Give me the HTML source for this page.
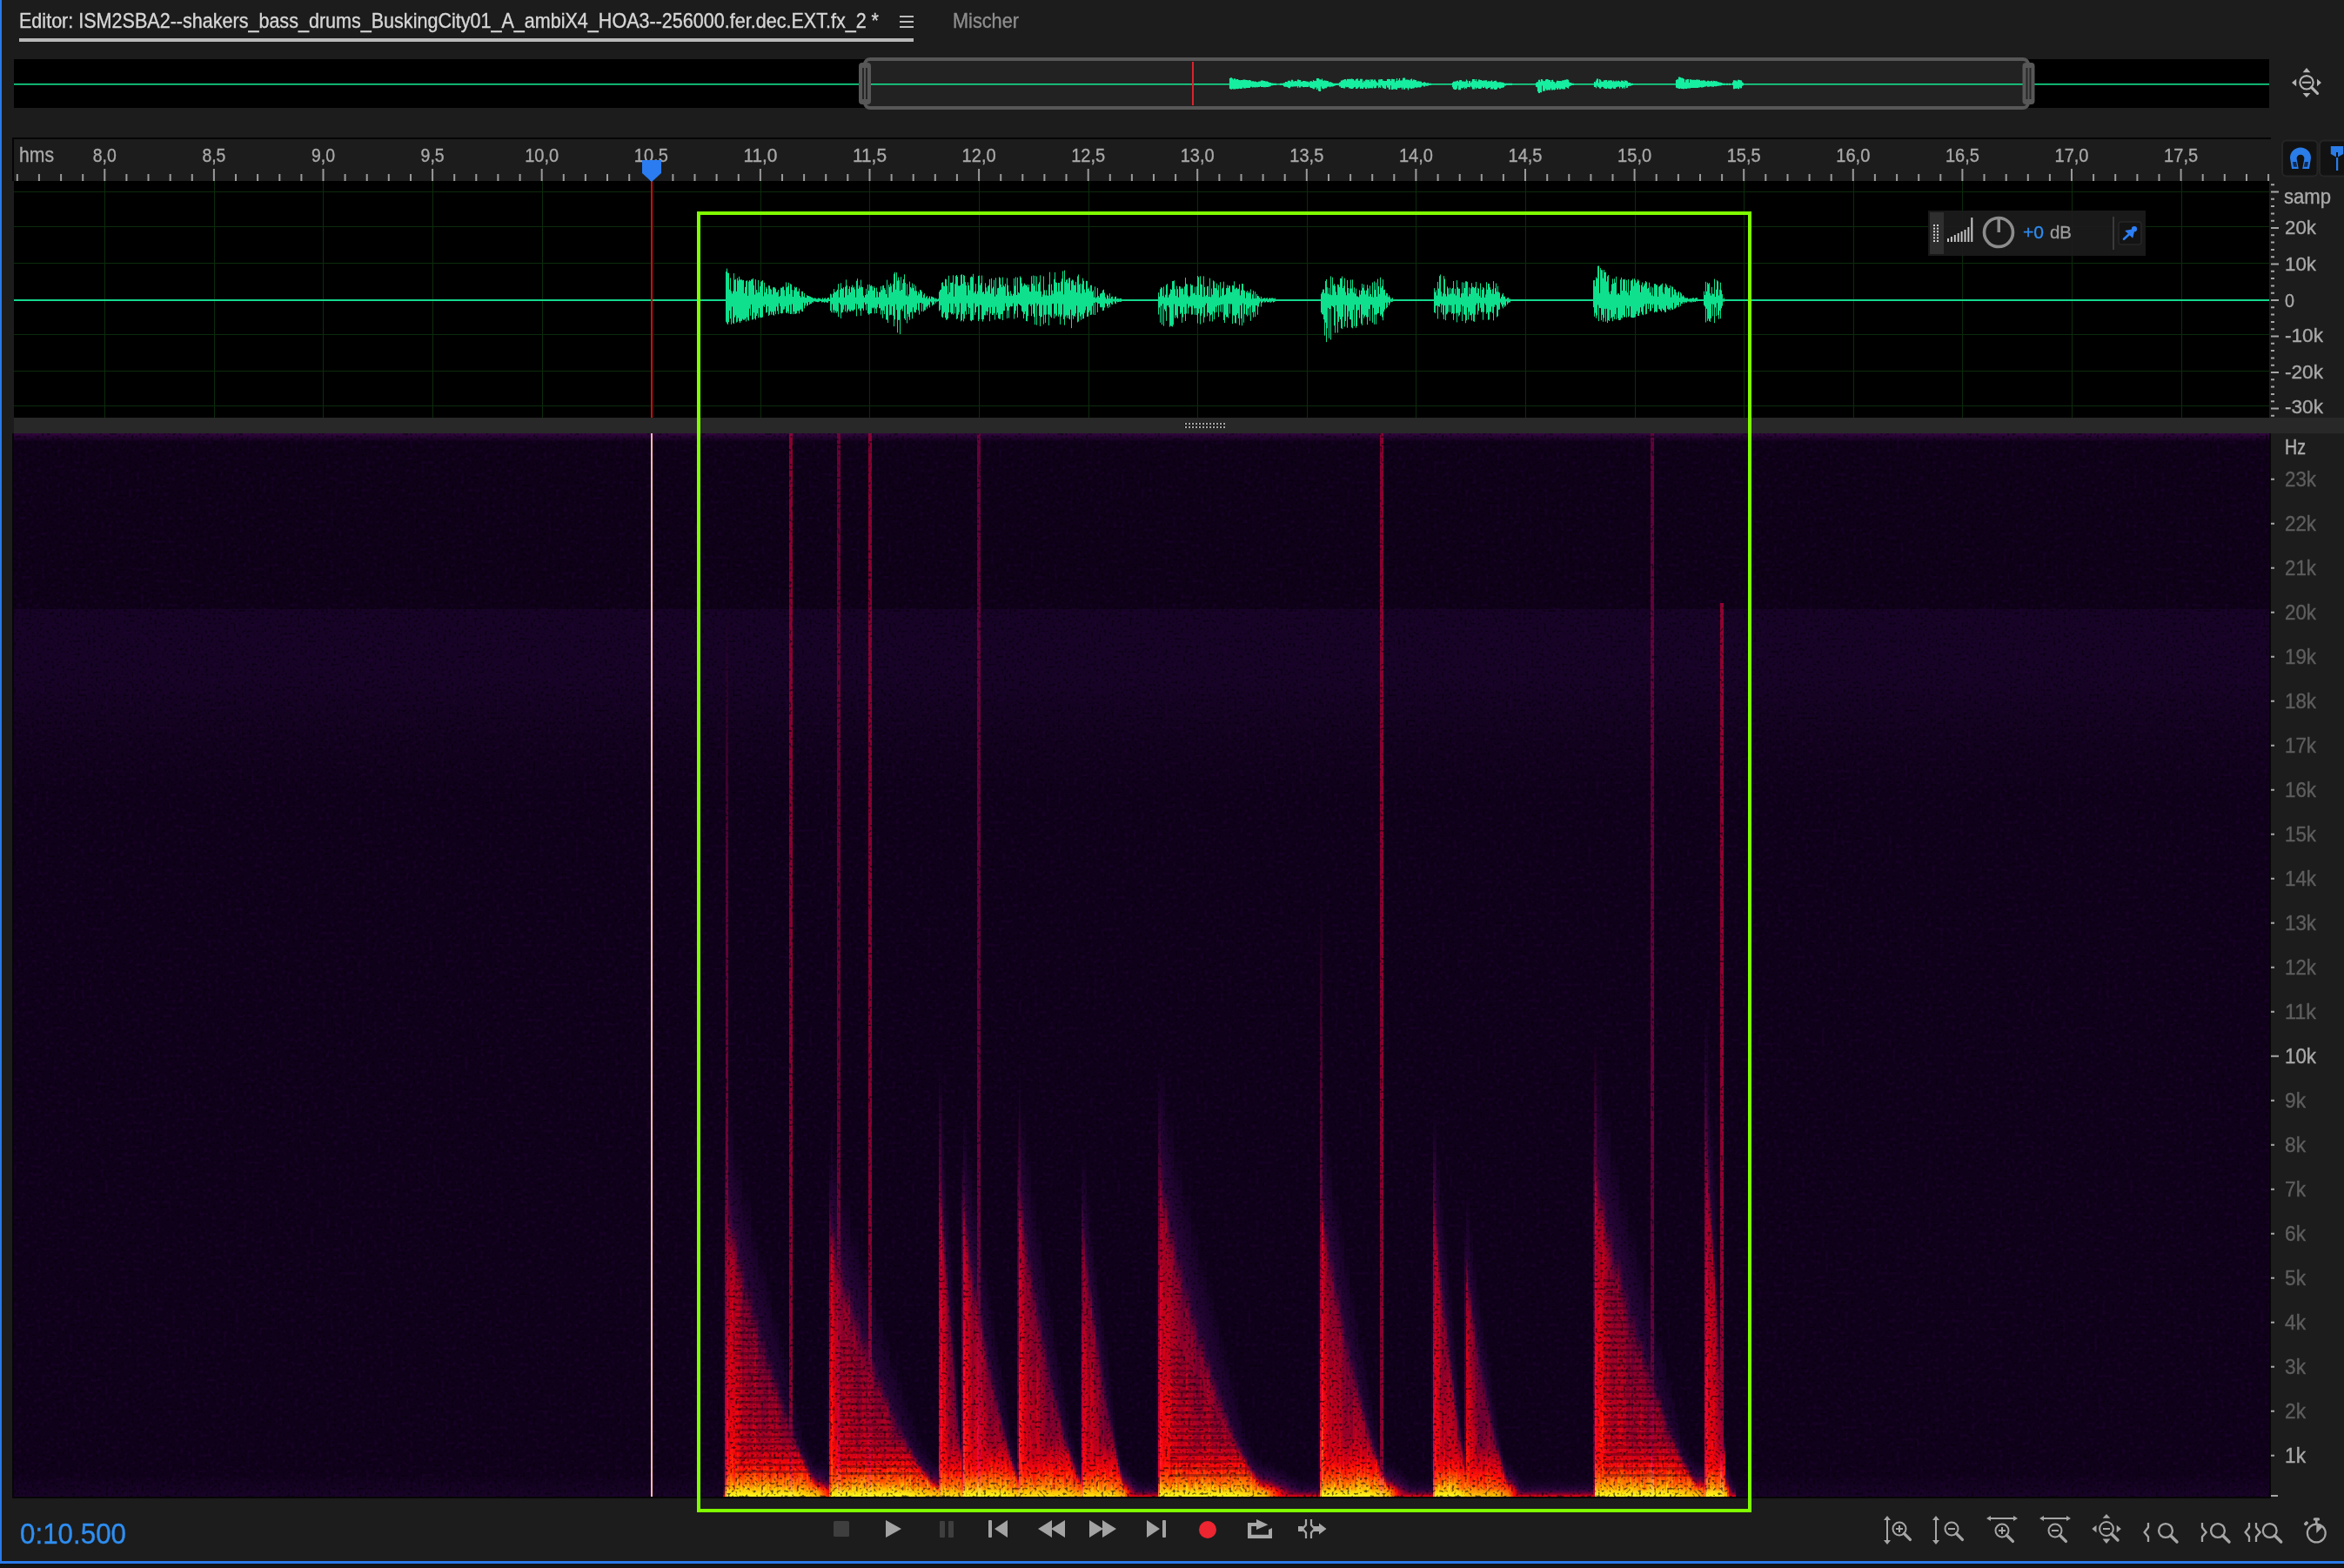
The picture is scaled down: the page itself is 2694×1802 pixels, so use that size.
<!DOCTYPE html>
<html><head><meta charset="utf-8"><title>Editor</title>
<style>
html,body{margin:0;padding:0;width:2694px;height:1802px;overflow:hidden;background:#1c1c1c;font-family:"Liberation Sans", sans-serif;}
#spec{position:absolute;left:16px;top:498px;width:2592px;height:1222px;overflow:hidden;background:#10021a;}
#spec div{position:absolute;top:0;height:1222px;}
</style></head><body>
<div id="spec" style="background:linear-gradient(#32063e 0px,#0e0118 10px,#0e0118 201.5px,#170326 202px,#170326 282px,#13021f 347px,#10011b 412px,#10011b 1197px,#170326 1222px)">
<div style="left:815px;width:2px;top:947px;height:275px;background:linear-gradient(rgba(24,3,38,0) 0px,#180327 33px,#190328 63px,#1a0329 90px,#1a032a 115px,#1b032b 137px,#1b032b 157px,#1c032c 175px,#1c032c 191px,#1d032c 205px,#1d032d 217px,#1d032d 227px,#1e042e 236px,#1e042e 244px,#1f042f 251px,#200430 257px,#210431 262px,#260535 266px,#3f053c 269px,#83002e 272px,#f70808 275px)"></div>
<div style="left:817px;width:2px;top:777px;height:445px;background:linear-gradient(rgba(22,2,36,0) 0px,#1f042e 50px,#2e063c 95px,#670135 135px,#89002c 170px,#85002d 203px,#80002f 233px,#8d002b 260px,#990027 285px,#a00025 307px,#ba001e 327px,#c2001b 345px,#be001c 361px,#d30116 375px,#be001d 387px,#cd0018 397px,#e00411 406px,#d40115 414px,#ed060c 421px,#fe0a06 427px,#ff3603 432px,#ff4c01 436px,#ff6b00 439px,#ff8200 442px,#ff9b00 445px)"></div>
<div style="left:819px;width:2px;top:777px;height:445px;background:linear-gradient(rgba(23,3,37,0) 0px,#20042f 50px,#2b053a 95px,#8e002b 135px,#a40024 170px,#b4001f 203px,#b30020 233px,#b9001e 260px,#d50215 285px,#ce0018 307px,#e10410 327px,#e5050f 345px,#f80908 361px,#e8050e 375px,#f0070b 387px,#f90907 397px,#ff1304 406px,#ff1c04 414px,#ff3203 421px,#ff6a00 427px,#ff6d00 432px,#ffb600 436px,#ffd50b 439px,#ffea14 442px,#ffff1e 445px)"></div>
<div style="left:821px;width:2px;top:777px;height:445px;background:linear-gradient(rgba(21,2,35,0) 0px,#1d032d 50px,#270536 95px,#700033 135px,#990027 170px,#a60023 203px,#a50024 233px,#cf0017 260px,#bf001c 285px,#e00411 307px,#d00117 327px,#d60215 345px,#ed060c 361px,#e20410 375px,#e00411 387px,#ed060c 397px,#ee070b 406px,#ff2504 414px,#ff4302 421px,#ff7500 427px,#ff6300 432px,#ffa200 436px,#ffd50b 439px,#ffea14 442px,#ffff1e 445px)"></div>
<div style="left:823px;width:2px;top:777px;height:445px;background:linear-gradient(rgba(20,2,33,0) 0px,#1b032b 50px,#250434 95px,#48043a 135px,#ac0022 170px,#b9001e 203px,#cd0018 233px,#cc0018 260px,#dd0312 285px,#db0313 307px,#d60214 327px,#e5050f 345px,#e30410 361px,#e6050f 375px,#f0070b 387px,#ff1404 397px,#ff1d04 406px,#ff1a04 414px,#ff5501 421px,#ff7b00 427px,#ff8a00 432px,#ffc302 436px,#ffd50b 439px,#ffea14 442px,#ffff1e 445px)"></div>
<div style="left:825px;width:2px;top:777px;height:445px;background:linear-gradient(rgba(19,2,31,0) 0px,#190329 50px,#220431 95px,#32063e 135px,#a50024 170px,#c0001c 203px,#d30116 233px,#c0001c 260px,#d70214 285px,#d10116 307px,#de0311 327px,#dd0312 345px,#ed060c 361px,#e8050e 375px,#f90907 387px,#ff1a04 397px,#ff2104 406px,#ff3603 414px,#ff3802 421px,#ff6400 427px,#ffbd00 432px,#ffa400 436px,#ffd50b 439px,#ffea14 442px,#ffff1e 445px)"></div>
<div style="left:827px;width:2px;top:827px;height:395px;background:linear-gradient(rgba(24,3,38,0) 0px,#20042f 45px,#280537 85px,#970028 120px,#ab0022 153px,#a40024 183px,#bb001d 210px,#b6001f 235px,#d20116 257px,#d30116 277px,#e20410 295px,#da0313 311px,#ec060c 325px,#e8050e 337px,#f80908 347px,#fa0907 356px,#fb0906 364px,#ff2104 371px,#ff5101 377px,#ff5b00 382px,#ff8600 386px,#ffd50b 389px,#ffea14 392px,#ffff1e 395px)"></div>
<div style="left:829px;width:2px;top:827px;height:395px;background:linear-gradient(rgba(22,2,36,0) 0px,#1e042d 45px,#270536 85px,#760032 120px,#a40024 153px,#c5001a 183px,#c5001a 210px,#c8001a 235px,#ce0017 257px,#e5050f 277px,#e8050e 295px,#ef070b 311px,#e00411 325px,#ef070b 337px,#ed060c 347px,#ff1e04 356px,#ff3702 364px,#ff5101 371px,#ff5a01 377px,#ff8f00 382px,#ffc101 386px,#ffd50b 389px,#ffea14 392px,#ffff1e 395px)"></div>
<div style="left:831px;width:2px;top:827px;height:395px;background:linear-gradient(rgba(21,2,35,0) 0px,#1c032c 45px,#260535 85px,#42043b 120px,#b20020 153px,#c3001b 183px,#bb001d 210px,#cd0018 235px,#cd0018 257px,#d70214 277px,#ee070c 295px,#e6050e 311px,#e7050e 325px,#e7050e 337px,#ff1205 347px,#ff1e04 356px,#ff2e03 364px,#ff4a01 371px,#ff9600 377px,#ffa300 382px,#ffdd0e 386px,#ffd50b 389px,#ffea14 392px,#ffff1e 395px)"></div>
<div style="left:833px;width:2px;top:827px;height:395px;background:linear-gradient(rgba(20,2,33,0) 0px,#1a032a 45px,#230432 85px,#2d063b 120px,#970028 153px,#b20020 183px,#ae0021 210px,#ad0021 235px,#c7001a 257px,#c7001a 277px,#cc0018 295px,#d60214 311px,#d90213 325px,#e00411 337px,#ec060c 347px,#eb060c 356px,#ff1105 364px,#ff2703 371px,#ff5801 377px,#ff7200 382px,#ffc101 386px,#ffd50b 389px,#ffea14 392px,#ffff1e 395px)"></div>
<div style="left:835px;width:2px;top:827px;height:395px;background:linear-gradient(rgba(19,2,32,0) 0px,#190328 45px,#210430 85px,#280537 120px,#9c0026 153px,#90002a 183px,#a70023 210px,#a20025 235px,#c6001a 257px,#c6001a 277px,#d30116 295px,#ce0017 311px,#db0313 325px,#cc0018 337px,#cf0017 347px,#f90907 356px,#ff1604 364px,#ff3003 371px,#ff7900 377px,#ffa700 382px,#ffcb06 386px,#ffd50b 389px,#ffea14 392px,#ffff1e 395px)"></div>
<div style="left:837px;width:2px;top:872px;height:350px;background:linear-gradient(rgba(24,3,38,0) 0px,#1f042e 40px,#270536 75px,#680135 108px,#710033 138px,#780031 165px,#85002d 190px,#91002a 212px,#ad0021 232px,#aa0022 250px,#b30020 266px,#c0001c 280px,#b5001f 292px,#c5001a 302px,#e20410 311px,#fc0906 319px,#ff3b02 326px,#ff5c00 332px,#ff6f00 337px,#ffb800 341px,#ffd50b 344px,#ffea14 347px,#ffff1e 350px)"></div>
<div style="left:839px;width:2px;top:872px;height:350px;background:linear-gradient(rgba(23,2,37,0) 0px,#1d032d 40px,#250434 75px,#3f053c 108px,#88002c 138px,#89002c 165px,#9e0026 190px,#ac0022 212px,#ae0021 232px,#b00020 250px,#ad0022 266px,#ce0018 280px,#ce0018 292px,#d00117 302px,#f80908 311px,#fd0a06 319px,#ff4702 326px,#ff6900 332px,#ff9700 337px,#ffd60b 341px,#ffd50b 344px,#ffea14 347px,#ffff1e 350px)"></div>
<div style="left:841px;width:2px;top:872px;height:350px;background:linear-gradient(rgba(22,2,35,0) 0px,#1c032b 40px,#230432 75px,#2e063d 108px,#8c002b 138px,#950028 165px,#a40024 190px,#9f0026 212px,#bb001d 232px,#c0001c 250px,#be001d 266px,#c5001a 280px,#bf001c 292px,#d20116 302px,#ff1105 311px,#ff1404 319px,#ff5701 326px,#ff7d00 332px,#ff8800 337px,#ffdf0f 341px,#ffd50b 344px,#ffea14 347px,#ffff1e 350px)"></div>
<div style="left:843px;width:2px;top:872px;height:350px;background:linear-gradient(rgba(21,2,34,0) 0px,#1a032a 40px,#210430 75px,#270536 108px,#7b0030 138px,#760032 165px,#8d002b 190px,#920029 212px,#a50024 232px,#b6001f 250px,#a80023 266px,#c0001c 280px,#b20020 292px,#c1001b 302px,#ef070b 311px,#ff2a03 319px,#ff4802 326px,#ff7600 332px,#ffab00 337px,#ffa200 341px,#ffd50b 344px,#ffea14 347px,#ffff1e 350px)"></div>
<div style="left:845px;width:2px;top:872px;height:350px;background:linear-gradient(rgba(20,2,32,0) 0px,#190328 40px,#1f042f 75px,#260535 108px,#740032 138px,#85002d 165px,#9b0027 190px,#88002c 212px,#91002a 232px,#a80023 250px,#9e0026 266px,#ad0021 280px,#b4001f 292px,#d80214 302px,#f2070a 311px,#ff1b04 319px,#ff4102 326px,#ff6900 332px,#ff6a00 337px,#ffc403 341px,#ffd50b 344px,#ffea14 347px,#ffff1e 350px)"></div>
<div style="left:847px;width:2px;top:912px;height:310px;background:linear-gradient(rgba(24,3,38,0) 0px,#1e032d 35px,#240433 68px,#520338 98px,#88002c 125px,#81002e 150px,#a80023 172px,#990027 192px,#960028 210px,#a60024 226px,#c3001b 240px,#bc001d 252px,#c5001a 262px,#e9060d 271px,#ff0a05 279px,#ff4901 286px,#ff3d02 292px,#ff8700 297px,#ffbc00 301px,#ffd50b 304px,#ffea14 307px,#ffff1e 310px)"></div>
<div style="left:849px;width:2px;top:912px;height:310px;background:linear-gradient(rgba(23,2,37,0) 0px,#1c032c 35px,#230432 68px,#32063e 98px,#a10025 125px,#960028 150px,#9d0026 172px,#af0021 192px,#bd001d 210px,#d40116 226px,#d70214 240px,#dd0312 252px,#d80214 262px,#f3080a 271px,#ff2603 279px,#ff5c00 286px,#ff6100 292px,#ff8500 297px,#ffb700 301px,#ffd50b 304px,#ffea14 307px,#ffff1e 310px)"></div>
<div style="left:851px;width:2px;top:912px;height:310px;background:linear-gradient(rgba(22,2,35,0) 0px,#1b032b 35px,#210431 68px,#2b0539 98px,#8c002b 125px,#af0021 150px,#ba001e 172px,#be001c 192px,#b10020 210px,#c5001a 226px,#d90214 240px,#dc0312 252px,#dd0312 262px,#ff0b05 271px,#ff2b03 279px,#ff5f00 286px,#ff7d00 292px,#ffbf00 297px,#ffc905 301px,#ffd50b 304px,#ffea14 307px,#ffff1e 310px)"></div>
<div style="left:853px;width:2px;top:912px;height:310px;background:linear-gradient(rgba(21,2,34,0) 0px,#190329 35px,#1f042f 68px,#260535 98px,#7c0030 125px,#9b0027 150px,#a50024 172px,#9f0026 192px,#9d0026 210px,#b30020 226px,#b4001f 240px,#cb0019 252px,#de0312 262px,#e8050e 271px,#ff2204 279px,#ff3103 286px,#ff7900 292px,#ff7200 297px,#ffb200 301px,#ffd50b 304px,#ffea14 307px,#ffff1e 310px)"></div>
<div style="left:855px;width:2px;top:947px;height:275px;background:linear-gradient(rgba(24,3,39,0) 0px,#1e042d 33px,#240433 63px,#530338 90px,#770031 115px,#80002f 137px,#90002a 157px,#b10020 175px,#970028 191px,#a50024 205px,#c1001c 217px,#cf0017 227px,#e9060d 236px,#ff1e04 244px,#ff3003 251px,#ff4e01 257px,#ffb400 262px,#ffb400 266px,#ffd50b 269px,#ffea14 272px,#ffff1e 275px)"></div>
<div style="left:857px;width:2px;top:947px;height:275px;background:linear-gradient(rgba(23,2,37,0) 0px,#1c032c 33px,#230432 63px,#34063d 90px,#710033 115px,#88002c 137px,#9c0027 157px,#9d0026 175px,#ad0021 191px,#b6001f 205px,#b30020 217px,#bc001d 227px,#f80908 236px,#fa0907 244px,#ff5101 251px,#ff6e00 257px,#ffa600 262px,#ffc805 266px,#ffd50b 269px,#ffea14 272px,#ffff1e 275px)"></div>
<div style="left:859px;width:2px;top:947px;height:275px;background:linear-gradient(rgba(22,2,36,0) 0px,#1b032b 33px,#210430 63px,#250534 90px,#6a0035 115px,#87002d 137px,#920029 157px,#84002e 175px,#8a002c 191px,#9b0027 205px,#aa0022 217px,#c8001a 227px,#f2070a 236px,#fa0907 244px,#ff2c03 251px,#ff5a01 257px,#ff7b00 262px,#ff9c00 266px,#ffd50b 269px,#ffea14 272px,#ffff1e 275px)"></div>
<div style="left:861px;width:2px;top:947px;height:275px;background:linear-gradient(rgba(21,2,34,0) 0px,#1a0329 33px,#1f042f 63px,#270536 90px,#770031 115px,#89002c 137px,#8f002a 157px,#8a002c 175px,#8b002b 191px,#ab0022 205px,#bd001d 217px,#e10410 227px,#f70808 236px,#ff2404 244px,#ff4d01 251px,#ff7f00 257px,#ff9900 262px,#ffde0f 266px,#ffd50b 269px,#ffea14 272px,#ffff1e 275px)"></div>
<div style="left:863px;width:2px;top:947px;height:275px;background:linear-gradient(rgba(20,2,33,0) 0px,#180327 33px,#1d032d 63px,#220432 90px,#47043a 115px,#7b0030 137px,#7c0030 157px,#90002a 175px,#a30024 191px,#ab0022 205px,#ad0021 217px,#df0411 227px,#ff0a05 236px,#ff2803 244px,#ff6300 251px,#ff6f00 257px,#ffbe00 262px,#ffd008 266px,#ffd50b 269px,#ffea14 272px,#ffff1e 275px)"></div>
<div style="left:865px;width:2px;top:980px;height:242px;background:linear-gradient(rgba(23,3,38,0) 0px,#1c032c 30px,#220431 57px,#2c053b 82px,#720033 104px,#7a0031 124px,#950028 142px,#89002c 158px,#aa0022 172px,#a50024 184px,#d80214 194px,#f60808 203px,#ff2603 211px,#ff2c03 218px,#ff6400 224px,#ff9a00 229px,#ffa400 233px,#ffd50b 236px,#ffea14 239px,#ffff1e 242px)"></div>
<div style="left:867px;width:2px;top:980px;height:242px;background:linear-gradient(rgba(22,2,36,0) 0px,#1b032a 30px,#20042f 57px,#270535 82px,#90002a 104px,#9f0026 124px,#a70023 142px,#b6001f 158px,#ac0022 172px,#b4001f 184px,#d90213 194px,#eb060d 203px,#ff1d04 211px,#ff3802 218px,#ff7a00 224px,#ffb700 229px,#ffd209 233px,#ffd50b 236px,#ffea14 239px,#ffff1e 242px)"></div>
<div style="left:869px;width:2px;top:980px;height:242px;background:linear-gradient(rgba(21,2,34,0) 0px,#190329 30px,#1e042e 57px,#230432 82px,#710033 104px,#8e002a 124px,#9d0026 142px,#b30020 158px,#aa0022 172px,#b4001f 184px,#b8001e 194px,#ec060c 203px,#ff0b05 211px,#ff2e03 218px,#ff3e02 224px,#ff8200 229px,#ff8a00 233px,#ffd50b 236px,#ffea14 239px,#ffff1e 242px)"></div>
<div style="left:871px;width:2px;top:1010px;height:212px;background:linear-gradient(rgba(24,3,39,0) 0px,#1d032c 27px,#220431 52px,#44043b 74px,#980028 94px,#9a0027 112px,#ac0022 128px,#c6001a 142px,#ca0019 154px,#e30410 164px,#e7050e 173px,#ff2c03 181px,#ff2f03 188px,#ff7a00 194px,#ff8d00 199px,#ffc202 203px,#ffd50b 206px,#ffea14 209px,#ffff1e 212px)"></div>
<div style="left:873px;width:2px;top:1010px;height:212px;background:linear-gradient(rgba(23,2,37,0) 0px,#1b032b 27px,#20042f 52px,#2d063b 74px,#82002e 94px,#a30024 112px,#9a0027 128px,#af0021 142px,#ae0021 154px,#c7001a 164px,#f3080a 173px,#ff2304 181px,#ff4901 188px,#ff7f00 194px,#ff9200 199px,#ffc403 203px,#ffd50b 206px,#ffea14 209px,#ffff1e 212px)"></div>
<div style="left:875px;width:2px;top:1010px;height:212px;background:linear-gradient(rgba(22,2,36,0) 0px,#1a032a 27px,#1e042e 52px,#240433 74px,#920029 94px,#b4001f 112px,#b4001f 128px,#c2001b 142px,#bf001c 154px,#e10410 164px,#fb0907 173px,#ff0a05 181px,#ff6500 188px,#ff5601 194px,#ff7800 199px,#ffcc07 203px,#ffd50b 206px,#ffea14 209px,#ffff1e 212px)"></div>
<div style="left:877px;width:2px;top:1010px;height:212px;background:linear-gradient(rgba(21,2,34,0) 0px,#180328 27px,#1d032c 52px,#210431 74px,#550238 94px,#950028 112px,#a20025 128px,#b6001f 142px,#b6001f 154px,#d90213 164px,#ed060c 173px,#fc0906 181px,#ff1d04 188px,#ff5e00 194px,#ff9400 199px,#ff9d00 203px,#ffd50b 206px,#ffea14 209px,#ffff1e 212px)"></div>
<div style="left:879px;width:2px;top:1037px;height:185px;background:linear-gradient(rgba(23,3,38,0) 0px,#1b032b 25px,#20042f 47px,#2f063e 67px,#84002d 85px,#960028 101px,#a80023 115px,#b9001e 127px,#de0312 137px,#e30410 146px,#ff1105 154px,#ff3b02 161px,#ff6700 167px,#ff8d00 172px,#ffd008 176px,#ffd50b 179px,#ffea14 182px,#ffff1e 185px)"></div>
<div style="left:881px;width:2px;top:1037px;height:185px;background:linear-gradient(rgba(22,2,36,0) 0px,#1a032a 25px,#1e042e 47px,#230432 67px,#81002e 85px,#7f002f 101px,#a50024 115px,#af0021 127px,#cf0017 137px,#fb0907 146px,#fd0a06 154px,#ff3203 161px,#ff6700 167px,#ff8c00 172px,#ffc001 176px,#ffd50b 179px,#ffea14 182px,#ffff1e 185px)"></div>
<div style="left:883px;width:2px;top:1037px;height:185px;background:linear-gradient(rgba(21,2,35,0) 0px,#190328 25px,#1c032c 47px,#200430 67px,#590237 85px,#750032 101px,#9a0027 115px,#9c0026 127px,#d20116 137px,#f0070b 146px,#ff0a05 154px,#ff4102 161px,#ff7d00 167px,#ff8f00 172px,#ffa700 176px,#ffd50b 179px,#ffea14 182px,#ffff1e 185px)"></div>
<div style="left:885px;width:2px;top:1062px;height:160px;background:linear-gradient(rgba(23,3,38,0) 0px,#1b032b 22px,#1f042e 42px,#35063d 60px,#7f002f 76px,#940029 90px,#9c0026 102px,#d60215 112px,#f1070a 121px,#fa0907 129px,#ff4502 136px,#ff4802 142px,#ff6700 147px,#ffb600 151px,#ffd50b 154px,#ffea14 157px,#ffff1e 160px)"></div>
<div style="left:887px;width:2px;top:1062px;height:160px;background:linear-gradient(rgba(22,2,36,0) 0px,#190329 22px,#1d032d 42px,#270536 60px,#950028 76px,#89002c 90px,#b9001e 102px,#d70214 112px,#ed060c 121px,#ff2404 129px,#ff2f03 136px,#ff9100 142px,#ff8c00 147px,#ffd008 151px,#ffd50b 154px,#ffea14 157px,#ffff1e 160px)"></div>
<div style="left:889px;width:2px;top:1084px;height:138px;background:linear-gradient(rgba(24,3,39,0) 0px,#1b032b 20px,#1f042e 38px,#580238 54px,#86002d 68px,#b4001f 80px,#df0411 90px,#f80908 99px,#ff1904 107px,#ff4e01 114px,#ff8c00 120px,#ff7c00 125px,#ff9700 129px,#ffd50b 132px,#ffea14 135px,#ffff1e 138px)"></div>
<div style="left:891px;width:2px;top:1084px;height:138px;background:linear-gradient(rgba(23,2,37,0) 0px,#1a032a 20px,#1d032d 38px,#2f063d 54px,#80002f 68px,#ab0022 80px,#c7001a 90px,#dd0312 99px,#f3080a 107px,#ff4002 114px,#ff5401 120px,#ff7400 125px,#ff9500 129px,#ffd50b 132px,#ffea14 135px,#ffff1e 138px)"></div>
<div style="left:893px;width:2px;top:1084px;height:138px;background:linear-gradient(rgba(22,2,35,0) 0px,#190328 20px,#1c032b 38px,#240433 54px,#80002f 68px,#ab0022 80px,#cf0017 90px,#ec060c 99px,#ff1804 107px,#ff1b04 114px,#ff5501 120px,#ff7d00 125px,#ffa300 129px,#ffd209 132px,#ffe613 135px,#fffb1c 138px)"></div>
<div style="left:895px;width:2px;top:1104px;height:118px;background:linear-gradient(rgba(23,3,38,0) 0px,#1a032a 18px,#1d032d 34px,#4d0339 48px,#a70023 60px,#c2001b 70px,#eb060d 79px,#ff1105 87px,#ff2a03 94px,#ff6f00 100px,#ff8e00 105px,#ffb300 109px,#ffcf08 112px,#ffe311 115px,#fff81b 118px)"></div>
<div style="left:897px;width:2px;top:1104px;height:118px;background:linear-gradient(rgba(22,2,36,0) 0px,#190328 18px,#1b032b 34px,#2b0539 48px,#9d0026 60px,#dc0312 70px,#ef070b 79px,#ff2b03 87px,#ff2603 94px,#ff4a01 100px,#ff7500 105px,#ff9800 109px,#ffcc06 112px,#ffe010 115px,#fff519 118px)"></div>
<div style="left:899px;width:2px;top:1122px;height:100px;background:linear-gradient(rgba(23,3,38,0) 0px,#1a032a 16px,#210430 30px,#520339 42px,#b4001f 52px,#df0411 61px,#f60809 69px,#ff2b03 76px,#ff6e00 82px,#ff7e00 87px,#ff7b00 91px,#ffc905 94px,#ffdd0e 97px,#fff118 100px)"></div>
<div style="left:901px;width:2px;top:1122px;height:100px;background:linear-gradient(rgba(22,2,36,0) 0px,#180327 16px,#1b032b 30px,#33063e 42px,#dc0312 52px,#f40809 61px,#fc0906 69px,#ff4302 76px,#ff4602 82px,#ff6400 87px,#ffba00 91px,#ffc604 94px,#ffd90d 97px,#ffee16 100px)"></div>
<div style="left:903px;width:2px;top:1138px;height:84px;background:linear-gradient(rgba(23,2,37,0) 0px,#190329 14px,#240433 26px,#700033 36px,#f40809 45px,#ff0a05 53px,#ff4c01 60px,#ff7600 66px,#ff7200 71px,#ffb700 75px,#ffc302 78px,#ffd60b 81px,#ffeb15 84px)"></div>
<div style="left:905px;width:2px;top:1152px;height:70px;background:linear-gradient(rgba(24,3,39,0) 0px,#1c032b 12px,#35063d 22px,#e8050e 31px,#ff0b05 39px,#ff5501 46px,#ff5001 52px,#ff7c00 57px,#ffb400 61px,#ffbf01 64px,#ffd30a 67px,#ffe713 70px)"></div>
<div style="left:907px;width:2px;top:1152px;height:70px;background:linear-gradient(rgba(23,2,37,0) 0px,#190329 12px,#250434 22px,#8c002b 31px,#ff1604 39px,#ff1a04 46px,#ff5501 52px,#ff8b00 57px,#ff8300 61px,#ffbc00 64px,#ffd008 67px,#ffe411 70px)"></div>
<div style="left:909px;width:2px;top:1164px;height:58px;background:linear-gradient(rgba(24,3,38,0) 0px,#1f042e 10px,#46043a 19px,#f50809 27px,#ff1c04 34px,#ff3303 40px,#ff8300 45px,#ff8500 49px,#ffb700 52px,#ffcc07 55px,#ffe010 58px)"></div>
<div style="left:911px;width:2px;top:1164px;height:58px;background:linear-gradient(rgba(22,2,36,0) 0px,#190329 10px,#2c053a 19px,#9d0026 27px,#ff4602 34px,#ff4d01 40px,#ff5e00 45px,#ffad00 49px,#ffb300 52px,#ffc905 55px,#ffdd0e 58px)"></div>
<div style="left:913px;width:2px;top:1174px;height:48px;background:linear-gradient(rgba(24,3,39,0) 0px,#230432 9px,#4b033a 17px,#ff0d05 24px,#ff3103 30px,#ff5701 35px,#ff6a00 39px,#ffaf00 42px,#ffc604 45px,#ffda0d 48px)"></div>
<div style="left:915px;width:2px;top:1174px;height:48px;background:linear-gradient(rgba(22,2,36,0) 0px,#1e032d 9px,#31063e 17px,#a90023 24px,#ff4602 30px,#ff5601 35px,#ff8e00 39px,#ffaa00 42px,#ffc302 45px,#ffd60b 48px)"></div>
<div style="left:917px;width:2px;top:1174px;height:48px;background:linear-gradient(rgba(21,2,33,0) 0px,#1a0329 9px,#260535 17px,#590237 24px,#ef070b 30px,#ff5001 35px,#ff6800 39px,#ffa600 42px,#ffbf01 45px,#ffd30a 48px)"></div>
<div style="left:919px;width:2px;top:1183px;height:39px;background:linear-gradient(rgba(23,3,38,0) 0px,#220431 8px,#42043b 15px,#a10025 21px,#ff3a02 26px,#ff5b01 30px,#ffa200 33px,#ffbc00 36px,#ffd008 39px)"></div>
<div style="left:921px;width:2px;top:1183px;height:39px;background:linear-gradient(rgba(21,2,34,0) 0px,#210430 8px,#39053c 15px,#720033 21px,#e8050e 26px,#ffa500 30px,#ff9d00 33px,#ffb700 36px,#ffcc07 39px)"></div>
<div style="left:923px;width:2px;top:1183px;height:39px;background:linear-gradient(rgba(20,2,32,0) 0px,#1e042e 8px,#2f063d 15px,#610136 21px,#c90019 26px,#ff3a02 30px,#ff9900 33px,#ffb300 36px,#ffc905 39px)"></div>
<div style="left:925px;width:2px;top:1183px;height:39px;background:linear-gradient(rgba(20,2,33,0) 0px,#1f042f 8px,#36053d 15px,#760032 21px,#f80908 26px,#ff5201 30px,#ff7f00 33px,#ff9800 36px,#ffb100 39px)"></div>
<div style="left:927px;width:2px;top:1183px;height:39px;background:linear-gradient(rgba(19,2,31,0) 0px,#1d032d 8px,#2d063b 15px,#560238 21px,#b30020 26px,#ff2304 30px,#ff6500 33px,#ff7d00 36px,#ff9500 39px)"></div>
<div style="left:929px;width:2px;top:1183px;height:39px;background:linear-gradient(rgba(18,2,30,0) 0px,#1c032c 8px,#2a0539 15px,#510339 21px,#c1001b 26px,#ff2204 30px,#ff4f01 33px,#ff6200 36px,#ff7900 39px)"></div>
<div style="left:931px;width:2px;top:1183px;height:39px;background:linear-gradient(rgba(18,2,30,0) 0px,#1a032a 8px,#260535 15px,#4d0339 21px,#88002c 26px,#ff2703 30px,#ff3902 33px,#ff4b01 36px,#ff5e00 39px)"></div>
<div style="left:933px;width:2px;top:1183px;height:39px;background:linear-gradient(rgba(18,2,30,0) 0px,#190328 8px,#240433 15px,#3b053c 21px,#6e0034 26px,#e5050f 30px,#ff2304 33px,#ff3403 36px,#ff4602 39px)"></div>
<div style="left:935px;width:2px;top:947px;height:275px;background:linear-gradient(rgba(24,3,39,0) 0px,#190328 33px,#1a0329 63px,#1a032a 90px,#1b032b 115px,#1c032c 137px,#1c032c 157px,#1d032d 175px,#1e042d 191px,#1e042e 205px,#1f042e 217px,#1f042f 227px,#20042f 236px,#200430 244px,#240433 251px,#3b053c 257px,#7b0030 262px,#dd0312 266px,#ff0c05 269px,#ff1d04 272px,#ff2e03 275px)"></div>
<div style="left:937px;width:2px;top:827px;height:395px;background:linear-gradient(rgba(24,3,38,0) 0px,#200430 45px,#550238 85px,#8b002b 120px,#b20020 153px,#aa0022 183px,#b00021 210px,#ce0018 235px,#d90213 257px,#e10410 277px,#d80214 295px,#df0411 311px,#ee070b 325px,#f80908 337px,#fa0907 347px,#fa0907 356px,#f60808 364px,#ff2404 371px,#ff1b04 377px,#ff4302 382px,#ff6200 386px,#ff6f00 389px,#ff8300 392px,#ff9b00 395px)"></div>
<div style="left:939px;width:2px;top:777px;height:445px;background:linear-gradient(rgba(18,2,30,0) 0px,#180328 50px,#220431 95px,#31063e 135px,#ca0019 170px,#d70214 203px,#dc0312 233px,#e5050f 260px,#f40809 285px,#e5050f 307px,#ff0d05 327px,#ff1105 345px,#ff2703 361px,#ff1f04 375px,#ff1804 387px,#ff2104 397px,#ff5301 406px,#ff5301 414px,#ff6700 421px,#ff5f00 427px,#ff6700 432px,#ffa200 436px,#ffd50b 439px,#ffea14 442px,#ffff1e 445px)"></div>
<div style="left:941px;width:2px;top:827px;height:395px;background:linear-gradient(rgba(23,2,37,0) 0px,#1f042f 45px,#2a0539 85px,#ae0021 120px,#a70023 153px,#ca0019 183px,#d80214 210px,#d40115 235px,#d10116 257px,#e9060d 277px,#eb060d 295px,#ed060c 311px,#fd0a06 325px,#f70808 337px,#ff1c04 347px,#fb0906 356px,#ff3703 364px,#ff2e03 371px,#ff4f01 377px,#ffa400 382px,#ffa800 386px,#ffd50b 389px,#ffea14 392px,#ffff1e 395px)"></div>
<div style="left:943px;width:2px;top:827px;height:395px;background:linear-gradient(rgba(21,2,35,0) 0px,#1d032d 45px,#240433 85px,#590237 120px,#9d0026 153px,#930029 183px,#bf001c 210px,#ce0018 235px,#c4001b 257px,#db0313 277px,#d30116 295px,#dd0312 311px,#d30116 325px,#e7050e 337px,#f90907 347px,#f80908 356px,#f60808 364px,#ff2d03 371px,#ff5b01 377px,#ff7800 382px,#ffb400 386px,#ffd50b 389px,#ffea14 392px,#ffff1e 395px)"></div>
<div style="left:945px;width:2px;top:827px;height:395px;background:linear-gradient(rgba(20,2,33,0) 0px,#1b032b 45px,#250434 85px,#3f053c 120px,#a30024 153px,#af0021 183px,#be001c 210px,#b9001e 235px,#c4001b 257px,#be001c 277px,#d40115 295px,#d00117 311px,#d40115 325px,#f3080a 337px,#f70808 347px,#ed060c 356px,#ff2703 364px,#ff4c01 371px,#ff4e01 377px,#ffaa00 382px,#ffcf08 386px,#ffd50b 389px,#ffea14 392px,#ffff1e 395px)"></div>
<div style="left:947px;width:2px;top:827px;height:395px;background:linear-gradient(rgba(19,2,31,0) 0px,#190329 45px,#220431 85px,#2a0539 120px,#980028 153px,#950028 183px,#a30025 210px,#bc001d 235px,#ae0021 257px,#c1001c 277px,#d40115 295px,#ce0018 311px,#cf0017 325px,#d80214 337px,#e20410 347px,#f70808 356px,#ff1005 364px,#ff4302 371px,#ff5a01 377px,#ff8000 382px,#ff8500 386px,#ffd50b 389px,#ffea14 392px,#ffff1e 395px)"></div>
<div style="left:949px;width:2px;top:872px;height:350px;background:linear-gradient(rgba(24,3,39,0) 0px,#200430 40px,#290538 75px,#7d0030 108px,#8b002c 138px,#a10025 165px,#a20025 190px,#990027 212px,#a80023 232px,#bc001d 250px,#bf001c 266px,#d40115 280px,#da0313 292px,#de0312 302px,#e4050f 311px,#ff2603 319px,#ff5401 326px,#ff4b01 332px,#ffaa00 337px,#ffa600 341px,#ffd50b 344px,#ffea14 347px,#ffff1e 350px)"></div>
<div style="left:951px;width:2px;top:872px;height:350px;background:linear-gradient(rgba(23,2,37,0) 0px,#1e042e 40px,#250434 75px,#590237 108px,#85002d 138px,#920029 165px,#9f0025 190px,#ac0022 212px,#b00021 232px,#a00025 250px,#bb001d 266px,#c6001a 280px,#cf0017 292px,#d10117 302px,#ed060c 311px,#ff1a04 319px,#ff1c04 326px,#ff4502 332px,#ff6800 337px,#ff9e00 341px,#ffd50b 344px,#ffea14 347px,#ffff1e 350px)"></div>
<div style="left:953px;width:2px;top:872px;height:350px;background:linear-gradient(rgba(22,2,36,0) 0px,#1d032c 40px,#230433 75px,#3f053c 108px,#9d0026 138px,#87002d 165px,#a00025 190px,#9d0026 212px,#bf001c 232px,#c0001c 250px,#c1001c 266px,#cd0018 280px,#c6001a 292px,#e10410 302px,#e20410 311px,#f90907 319px,#ff2703 326px,#ff6500 332px,#ff6c00 337px,#ffbc00 341px,#ffd50b 344px,#ffea14 347px,#ffff1e 350px)"></div>
<div style="left:955px;width:2px;top:872px;height:350px;background:linear-gradient(rgba(21,2,34,0) 0px,#1b032b 40px,#220431 75px,#2f063d 108px,#930029 138px,#a30024 165px,#9e0026 190px,#a40024 212px,#ca0019 232px,#bc001d 250px,#ce0018 266px,#c1001b 280px,#e4050f 292px,#d10116 302px,#e6050f 311px,#ff2c03 319px,#ff3902 326px,#ff7000 332px,#ff6f00 337px,#ffaa00 341px,#ffd50b 344px,#ffea14 347px,#ffff1e 350px)"></div>
<div style="left:957px;width:2px;top:872px;height:350px;background:linear-gradient(rgba(20,2,33,0) 0px,#1a032a 40px,#210431 75px,#2c053a 108px,#85002d 138px,#91002a 165px,#b20020 190px,#bb001d 212px,#cb0019 232px,#ba001e 250px,#c90019 266px,#d50215 280px,#cc0018 292px,#e4050f 302px,#f50809 311px,#ff2b03 319px,#ff2903 326px,#ff5e00 332px,#ffac00 337px,#ffaf00 341px,#ffd50b 344px,#ffea14 347px,#ffff1e 350px)"></div>
<div style="left:959px;width:2px;top:872px;height:350px;background:linear-gradient(rgba(19,2,31,0) 0px,#190328 40px,#20042f 75px,#280537 108px,#9c0027 138px,#8d002b 165px,#9e0026 190px,#a10025 212px,#b7001f 232px,#c4001b 250px,#d30116 266px,#c90019 280px,#d50215 292px,#d80214 302px,#eb060d 311px,#ff2204 319px,#ff3303 326px,#ff7100 332px,#ff8800 337px,#ff9200 341px,#ffd50b 344px,#ffea14 347px,#ffff1e 350px)"></div>
<div style="left:961px;width:2px;top:912px;height:310px;background:linear-gradient(rgba(24,3,38,0) 0px,#1e042e 35px,#240433 68px,#540338 98px,#80002f 125px,#8d002b 150px,#a70023 172px,#9a0027 192px,#a90022 210px,#b20020 226px,#ad0021 240px,#c8001a 252px,#db0313 262px,#e00411 271px,#ff1404 279px,#ff4502 286px,#ff5101 292px,#ff6c00 297px,#ff8800 301px,#ffd50b 304px,#ffea14 307px,#ffff1e 310px)"></div>
<div style="left:963px;width:2px;top:912px;height:310px;background:linear-gradient(rgba(23,2,37,0) 0px,#1d032c 35px,#230433 68px,#47043a 98px,#8a002c 125px,#950028 150px,#b10020 172px,#a20025 192px,#c4001b 210px,#b30020 226px,#bb001d 240px,#d60215 252px,#d50215 262px,#e9060d 271px,#ff2204 279px,#ff4b01 286px,#ff7700 292px,#ffa200 297px,#ffda0d 301px,#ffd50b 304px,#ffea14 307px,#ffff1e 310px)"></div>
<div style="left:965px;width:2px;top:912px;height:310px;background:linear-gradient(rgba(22,2,35,0) 0px,#1b032b 35px,#230432 68px,#2c053a 98px,#920029 125px,#a10025 150px,#9b0027 172px,#960028 192px,#ad0021 210px,#b30020 226px,#bc001d 240px,#c3001b 252px,#dd0312 262px,#e6050f 271px,#ff1e04 279px,#ff3503 286px,#ff6800 292px,#ffa100 297px,#ffcc06 301px,#ffd50b 304px,#ffea14 307px,#ffff1e 310px)"></div>
<div style="left:967px;width:2px;top:912px;height:310px;background:linear-gradient(rgba(21,2,34,0) 0px,#1a032a 35px,#210431 68px,#2a0538 98px,#790031 125px,#90002a 150px,#86002d 172px,#a20025 192px,#b00020 210px,#b5001f 226px,#a30024 240px,#a80023 252px,#e30410 262px,#e7050e 271px,#ff1f04 279px,#ff3b02 286px,#ff9700 292px,#ff9000 297px,#ffc503 301px,#ffd50b 304px,#ffea14 307px,#ffff1e 310px)"></div>
<div style="left:969px;width:2px;top:912px;height:310px;background:linear-gradient(rgba(20,2,33,0) 0px,#190328 35px,#20042f 68px,#290537 98px,#6b0035 125px,#7d0030 150px,#7e002f 172px,#7d0030 192px,#80002f 210px,#980028 226px,#ab0022 240px,#9b0027 252px,#c90019 262px,#ec060c 271px,#ff3103 279px,#ff4c01 286px,#ff5e00 292px,#ff7400 297px,#ffae00 301px,#ffd50b 304px,#ffea14 307px,#ffff1e 310px)"></div>
<div style="left:971px;width:2px;top:947px;height:275px;background:linear-gradient(rgba(24,3,39,0) 0px,#1e042e 33px,#250534 63px,#540238 90px,#88002c 115px,#80002f 137px,#85002d 157px,#940029 175px,#8f002a 191px,#aa0022 205px,#b4001f 217px,#d60215 227px,#e9060d 236px,#ff1005 244px,#ff4002 251px,#ff7000 257px,#ffab00 262px,#ffca06 266px,#ffd50b 269px,#ffea14 272px,#ffff1e 275px)"></div>
<div style="left:973px;width:2px;top:947px;height:275px;background:linear-gradient(rgba(23,2,37,0) 0px,#1d032c 33px,#230432 63px,#38053d 90px,#970028 115px,#9c0026 137px,#8d002b 157px,#9b0027 175px,#b30020 191px,#b9001e 205px,#d00117 217px,#d10116 227px,#f60808 236px,#ff1205 244px,#ff4102 251px,#ff8d00 257px,#ffab00 262px,#ffc001 266px,#ffd50b 269px,#ffea14 272px,#ffff1e 275px)"></div>
<div style="left:975px;width:2px;top:947px;height:275px;background:linear-gradient(rgba(22,2,36,0) 0px,#1b032b 33px,#220431 63px,#2c053b 90px,#7d002f 115px,#a20025 137px,#b00021 157px,#ba001e 175px,#bd001d 191px,#bc001d 205px,#ca0019 217px,#dc0312 227px,#ee070b 236px,#ff1105 244px,#ff4b01 251px,#ff8a00 257px,#ff9200 262px,#ffb900 266px,#ffd50b 269px,#ffea14 272px,#ffff1e 275px)"></div>
<div style="left:977px;width:2px;top:947px;height:275px;background:linear-gradient(rgba(21,2,34,0) 0px,#1a032a 33px,#210430 63px,#270536 90px,#81002e 115px,#9a0027 137px,#af0021 157px,#ab0022 175px,#c0001c 191px,#c7001a 205px,#d40115 217px,#d00117 227px,#fe0a05 236px,#ff2b03 244px,#ff5a01 251px,#ff8f00 257px,#ff7c00 262px,#ffdb0d 266px,#ffd50b 269px,#ffea14 272px,#ffff1e 275px)"></div>
<div style="left:979px;width:2px;top:947px;height:275px;background:linear-gradient(rgba(20,2,33,0) 0px,#190329 33px,#1f042f 63px,#250534 90px,#6f0034 115px,#90002a 137px,#8a002c 157px,#a30024 175px,#a40024 191px,#b30020 205px,#d00117 217px,#cc0018 227px,#e6050e 236px,#ff2104 244px,#ff4802 251px,#ff6200 257px,#ff6400 262px,#ffa200 266px,#ffd50b 269px,#ffea14 272px,#ffff1e 275px)"></div>
<div style="left:981px;width:2px;top:980px;height:242px;background:linear-gradient(rgba(24,3,39,0) 0px,#1e032d 30px,#240433 57px,#580238 82px,#a40024 104px,#b20020 124px,#b4001f 142px,#aa0022 158px,#c90019 172px,#d80214 184px,#db0313 194px,#e10410 203px,#ff1e04 211px,#ff3303 218px,#ff6200 224px,#ff9100 229px,#ffc704 233px,#ffd50b 236px,#ffea14 239px,#ffff1e 242px)"></div>
<div style="left:983px;width:2px;top:980px;height:242px;background:linear-gradient(rgba(23,3,37,0) 0px,#1c032c 30px,#230432 57px,#39053c 82px,#a40024 104px,#af0021 124px,#a60024 142px,#a30024 158px,#ca0019 172px,#c7001a 184px,#da0313 194px,#ee070b 203px,#ff1205 211px,#ff5101 218px,#ff4802 224px,#ff8800 229px,#ffae00 233px,#ffd50b 236px,#ffea14 239px,#ffff1e 242px)"></div>
<div style="left:985px;width:2px;top:980px;height:242px;background:linear-gradient(rgba(22,2,36,0) 0px,#1b032b 30px,#210430 57px,#290538 82px,#91002a 104px,#a00025 124px,#a80023 142px,#a10025 158px,#bf001c 172px,#b10020 184px,#c2001b 194px,#ec060c 203px,#ff0d05 211px,#ff4302 218px,#ff6e00 224px,#ffab00 229px,#ffbb00 233px,#ffd50b 236px,#ffea14 239px,#ffff1e 242px)"></div>
<div style="left:987px;width:2px;top:980px;height:242px;background:linear-gradient(rgba(21,2,35,0) 0px,#1a032a 30px,#1f042f 57px,#260535 82px,#7e002f 104px,#940029 124px,#ab0022 142px,#940029 158px,#a20025 172px,#be001c 184px,#df0411 194px,#f1070a 203px,#ff0e05 211px,#ff6200 218px,#ff6100 224px,#ff7900 229px,#ffd109 233px,#ffd50b 236px,#ffea14 239px,#ffff1e 242px)"></div>
<div style="left:989px;width:2px;top:980px;height:242px;background:linear-gradient(rgba(21,2,33,0) 0px,#190328 30px,#1e042e 57px,#220432 82px,#48043a 104px,#7d0030 124px,#84002d 142px,#950028 158px,#9e0026 172px,#a90023 184px,#cc0018 194px,#da0313 203px,#fa0907 211px,#ff2503 218px,#ff4a01 224px,#ff9100 229px,#ffa300 233px,#ffd50b 236px,#ffea14 239px,#ffff1e 242px)"></div>
<div style="left:991px;width:2px;top:1010px;height:212px;background:linear-gradient(rgba(24,3,39,0) 0px,#1d032c 27px,#230432 52px,#38053d 74px,#780031 94px,#8f002a 112px,#a90022 128px,#b5001f 142px,#b7001e 154px,#cd0018 164px,#e20410 173px,#ff3203 181px,#ff4002 188px,#ff5001 194px,#ffaa00 199px,#ff8f00 203px,#ffd50b 206px,#ffea14 209px,#ffff1e 212px)"></div>
<div style="left:993px;width:2px;top:1010px;height:212px;background:linear-gradient(rgba(23,2,37,0) 0px,#1b032b 27px,#210430 52px,#280537 74px,#920029 94px,#83002e 112px,#a30024 128px,#9b0027 142px,#b4001f 154px,#da0313 164px,#eb060d 173px,#ff2903 181px,#ff5d00 188px,#ff6400 194px,#ffb600 199px,#ffa500 203px,#ffd50b 206px,#ffea14 209px,#ffff1e 212px)"></div>
<div style="left:995px;width:2px;top:1010px;height:212px;background:linear-gradient(rgba(22,2,36,0) 0px,#1a032a 27px,#1f042f 52px,#240433 74px,#82002e 94px,#81002e 112px,#a20025 128px,#9c0026 142px,#a70023 154px,#d80214 164px,#ec060c 173px,#fa0907 181px,#ff3403 188px,#ff4d01 194px,#ff7300 199px,#ffcc06 203px,#ffd50b 206px,#ffea14 209px,#ffff1e 212px)"></div>
<div style="left:997px;width:2px;top:1010px;height:212px;background:linear-gradient(rgba(21,2,34,0) 0px,#190329 27px,#1e042e 52px,#230432 74px,#5c0237 94px,#9e0026 112px,#a90023 128px,#a20025 142px,#b10020 154px,#ce0017 164px,#dc0312 173px,#fd0a06 181px,#ff3902 188px,#ff4a01 194px,#ff9b00 199px,#ffb800 203px,#ffd50b 206px,#ffea14 209px,#ffff1e 212px)"></div>
<div style="left:999px;width:2px;top:1037px;height:185px;background:linear-gradient(rgba(24,3,39,0) 0px,#1d032c 25px,#220431 47px,#39053d 67px,#9e0026 85px,#ac0022 101px,#9c0026 115px,#a70023 127px,#bf001c 137px,#e8050e 146px,#ff1304 154px,#ff3703 161px,#ff5001 167px,#ff7000 172px,#ffc403 176px,#ffd50b 179px,#ffea14 182px,#ffff1e 185px)"></div>
<div style="left:1001px;width:2px;top:1037px;height:185px;background:linear-gradient(rgba(23,3,38,0) 0px,#1b032b 25px,#200430 47px,#2d063b 67px,#970028 85px,#b00021 101px,#b20020 115px,#c90019 127px,#d70214 137px,#e20410 146px,#fe0a06 154px,#ff4802 161px,#ff6100 167px,#ff7d00 172px,#ffbf00 176px,#ffd50b 179px,#ffea14 182px,#ffff1e 185px)"></div>
<div style="left:1003px;width:2px;top:1037px;height:185px;background:linear-gradient(rgba(22,2,36,0) 0px,#1a032a 25px,#1f042e 47px,#230432 67px,#990027 85px,#a00025 101px,#b5001f 115px,#a70023 127px,#d60214 137px,#e10411 146px,#ff2f03 154px,#ff5b01 161px,#ff6200 167px,#ff9b00 172px,#ff9200 176px,#ffd50b 179px,#ffea14 182px,#ffff1e 185px)"></div>
<div style="left:1005px;width:2px;top:1037px;height:185px;background:linear-gradient(rgba(21,2,35,0) 0px,#190329 25px,#1d032d 47px,#220432 67px,#5e0237 85px,#a20025 101px,#970028 115px,#b4001f 127px,#cc0018 137px,#e8050e 146px,#ff1404 154px,#ff5d00 161px,#ff6300 167px,#ff8400 172px,#ffd50b 176px,#ffd50b 179px,#ffea14 182px,#ffff1e 185px)"></div>
<div style="left:1007px;width:2px;top:1062px;height:160px;background:linear-gradient(rgba(24,3,39,0) 0px,#1c032c 22px,#210430 42px,#34063d 60px,#87002d 76px,#990027 90px,#9f0026 102px,#d10117 112px,#e7050e 121px,#ff1704 129px,#ff3902 136px,#ff5501 142px,#ff7100 147px,#ff9800 151px,#ffd50b 154px,#ffea14 157px,#ffff1e 160px)"></div>
<div style="left:1009px;width:2px;top:1062px;height:160px;background:linear-gradient(rgba(23,3,38,0) 0px,#1b032b 22px,#1f042f 42px,#2b053a 60px,#7f002f 76px,#920029 90px,#a50024 102px,#dc0312 112px,#fc0906 121px,#ff3b02 129px,#ff3003 136px,#ff5901 142px,#ff9f00 147px,#ffd30a 151px,#ffd50b 154px,#ffea14 157px,#ffff1e 160px)"></div>
<div style="left:1011px;width:2px;top:1062px;height:160px;background:linear-gradient(rgba(22,2,36,0) 0px,#1a032a 22px,#1e042d 42px,#220431 60px,#690035 76px,#750032 90px,#9a0027 102px,#d90214 112px,#f0070b 121px,#ff2304 129px,#ff3203 136px,#ff5f00 142px,#ff8b00 147px,#ffcd07 151px,#ffd50b 154px,#ffea14 157px,#ffff1e 160px)"></div>
<div style="left:1013px;width:2px;top:1062px;height:160px;background:linear-gradient(rgba(21,2,35,0) 0px,#190328 22px,#1c032c 42px,#210430 60px,#43043b 76px,#7b0030 90px,#b8001e 102px,#c4001b 112px,#f2070a 121px,#ff2903 129px,#ff2703 136px,#ff5501 142px,#ff8300 147px,#ffa800 151px,#ffd50b 154px,#ffea14 157px,#ffff1e 160px)"></div>
<div style="left:1015px;width:2px;top:1084px;height:138px;background:linear-gradient(rgba(24,3,38,0) 0px,#1b032b 20px,#1f042f 38px,#2d063b 54px,#6c0034 68px,#a80023 80px,#d50215 90px,#f40809 99px,#ff1105 107px,#ff4b01 114px,#ff5001 120px,#ff6b00 125px,#ffa900 129px,#ffd50b 132px,#ffea14 135px,#ffff1e 138px)"></div>
<div style="left:1017px;width:2px;top:1084px;height:138px;background:linear-gradient(rgba(23,2,37,0) 0px,#1a032a 20px,#1e042d 38px,#260535 54px,#6f0034 68px,#9d0026 80px,#c5001a 90px,#f50809 99px,#ff0c05 107px,#ff4f01 114px,#ff7800 120px,#ff7d00 125px,#ffa000 129px,#ffd50b 132px,#ffea14 135px,#ffff1e 138px)"></div>
<div style="left:1019px;width:2px;top:1084px;height:138px;background:linear-gradient(rgba(22,2,36,0) 0px,#190328 20px,#1c032c 38px,#200430 54px,#5f0136 68px,#bf001c 80px,#cc0018 90px,#fd0a06 99px,#ff1b04 107px,#ff3a02 114px,#ff6a00 120px,#ffbe00 125px,#ff9a00 129px,#ffd50b 132px,#ffea14 135px,#ffff1e 138px)"></div>
<div style="left:1021px;width:2px;top:1104px;height:118px;background:linear-gradient(rgba(24,3,39,0) 0px,#1b032b 18px,#1f042e 34px,#41043b 48px,#aa0022 60px,#dc0312 70px,#f90907 79px,#ff2b03 87px,#ff4602 94px,#ff7800 100px,#ffc001 105px,#ffd40a 109px,#ffd50b 112px,#ffea14 115px,#ffff1e 118px)"></div>
<div style="left:1023px;width:2px;top:1104px;height:118px;background:linear-gradient(rgba(23,2,37,0) 0px,#1a032a 18px,#1d032d 34px,#290537 48px,#a30024 60px,#bb001d 70px,#f0070b 79px,#ff0c05 87px,#ff1404 94px,#ff4f01 100px,#ff7600 105px,#ff7a00 109px,#ffd50b 112px,#ffea14 115px,#ffff1e 118px)"></div>
<div style="left:1025px;width:2px;top:1104px;height:118px;background:linear-gradient(rgba(22,2,36,0) 0px,#190328 18px,#1c032c 34px,#240433 48px,#6a0035 60px,#c5001a 70px,#f70808 79px,#ff1904 87px,#ff3f02 94px,#ff7400 100px,#ffae00 105px,#ffcb06 109px,#ffd30a 112px,#ffe813 115px,#fffd1d 118px)"></div>
<div style="left:1027px;width:2px;top:1122px;height:100px;background:linear-gradient(rgba(24,3,39,0) 0px,#1b032b 16px,#1e042e 30px,#42043b 42px,#c80019 52px,#ea060d 61px,#fc0906 69px,#ff4002 76px,#ff6a00 82px,#ff6400 87px,#ffa500 91px,#ffd109 94px,#ffe512 97px,#fffa1c 100px)"></div>
<div style="left:1029px;width:2px;top:1122px;height:100px;background:linear-gradient(rgba(23,2,37,0) 0px,#190329 16px,#1d032c 30px,#2a0539 42px,#ce0018 52px,#de0311 61px,#ff1704 69px,#ff5b01 76px,#ff8400 82px,#ffa800 87px,#ffbc00 91px,#ffce07 94px,#ffe211 97px,#fff71a 100px)"></div>
<div style="left:1031px;width:2px;top:1122px;height:100px;background:linear-gradient(rgba(22,2,36,0) 0px,#180327 16px,#1b032b 30px,#220431 42px,#790031 52px,#df0411 61px,#fe0a05 69px,#ff4402 76px,#ff4002 82px,#ff5d00 87px,#ffa100 91px,#ffcb06 94px,#ffdf0f 97px,#fff419 100px)"></div>
<div style="left:1033px;width:2px;top:1138px;height:84px;background:linear-gradient(rgba(23,3,38,0) 0px,#1a032a 14px,#1d032d 26px,#39053d 36px,#d70214 45px,#ff1904 53px,#ff1d04 60px,#ff3d02 66px,#ff5301 71px,#ff6c00 75px,#ffc905 78px,#ffdd0e 81px,#fff118 84px)"></div>
<div style="left:1035px;width:2px;top:1138px;height:84px;background:linear-gradient(rgba(22,2,36,0) 0px,#190328 14px,#1c032c 26px,#2b053a 36px,#cf0017 45px,#f50809 53px,#ff2b03 60px,#ff3003 66px,#ff7c00 71px,#ffa100 75px,#ffc604 78px,#ffda0d 81px,#ffee16 84px)"></div>
<div style="left:1037px;width:2px;top:1152px;height:70px;background:linear-gradient(rgba(24,3,39,0) 0px,#1b032b 12px,#260535 22px,#750032 31px,#fe0a05 39px,#ff4802 46px,#ff6b00 52px,#ff8100 57px,#ffac00 61px,#ffc302 64px,#ffd70c 67px,#ffec15 70px)"></div>
<div style="left:1039px;width:2px;top:1152px;height:70px;background:linear-gradient(rgba(23,2,37,0) 0px,#1a0329 12px,#1f042f 22px,#3d053c 31px,#f3080a 39px,#ff1704 46px,#ff4602 52px,#ff6300 57px,#ff9300 61px,#ffc101 64px,#ffd40a 67px,#ffe914 70px)"></div>
<div style="left:1041px;width:2px;top:1152px;height:70px;background:linear-gradient(rgba(22,2,35,0) 0px,#180327 12px,#1c032c 22px,#30063e 31px,#ce0018 39px,#ff2903 46px,#ff5601 52px,#ff6500 57px,#ffb500 61px,#ffbe00 64px,#ffd109 67px,#ffe612 70px)"></div>
<div style="left:1043px;width:2px;top:1164px;height:58px;background:linear-gradient(rgba(23,3,38,0) 0px,#1b032b 10px,#280537 19px,#6a0035 27px,#ff2f03 34px,#ff4002 40px,#ff5c00 45px,#ff9000 49px,#ffba00 52px,#ffcf08 55px,#ffe311 58px)"></div>
<div style="left:1045px;width:2px;top:1164px;height:58px;background:linear-gradient(rgba(22,2,36,0) 0px,#190329 10px,#240433 19px,#4e0339 27px,#ff1005 34px,#ff2703 40px,#ff6200 45px,#ff6600 49px,#ffb700 52px,#ffcc06 55px,#ffe010 58px)"></div>
<div style="left:1047px;width:2px;top:1164px;height:58px;background:linear-gradient(rgba(21,2,34,0) 0px,#180327 10px,#20042f 19px,#33063e 27px,#b00020 34px,#ff6300 40px,#ff5001 45px,#ffa200 49px,#ffb300 52px,#ffc905 55px,#ffdd0e 58px)"></div>
<div style="left:1049px;width:2px;top:1174px;height:48px;background:linear-gradient(rgba(23,3,37,0) 0px,#1c032c 9px,#30063e 17px,#86002d 24px,#ff6b00 30px,#ff9700 35px,#ff8a00 39px,#ffaf00 42px,#ffc604 45px,#ffda0d 48px)"></div>
<div style="left:1051px;width:2px;top:1174px;height:48px;background:linear-gradient(rgba(22,2,36,0) 0px,#1b032b 9px,#280537 17px,#5f0136 24px,#e6050e 30px,#ff7100 35px,#ff6700 39px,#ffac00 42px,#ffc403 45px,#ffd70c 48px)"></div>
<div style="left:1053px;width:2px;top:1174px;height:48px;background:linear-gradient(rgba(21,2,34,0) 0px,#190329 9px,#230433 17px,#47043a 24px,#9b0027 30px,#ff4702 35px,#ff8100 39px,#ffa800 42px,#ffc101 45px,#ffd40a 48px)"></div>
<div style="left:1055px;width:2px;top:1183px;height:39px;background:linear-gradient(rgba(24,3,39,0) 0px,#230432 8px,#34063d 15px,#8b002c 21px,#ff1c04 26px,#ff6700 30px,#ffa400 33px,#ffbe00 36px,#ffd209 39px)"></div>
<div style="left:1057px;width:2px;top:1183px;height:39px;background:linear-gradient(rgba(22,2,36,0) 0px,#200430 8px,#3c053c 15px,#83002e 21px,#ee070b 26px,#ffab00 30px,#ffa000 33px,#ffba00 36px,#ffcf08 39px)"></div>
<div style="left:1059px;width:2px;top:1183px;height:39px;background:linear-gradient(rgba(20,2,33,0) 0px,#1f042f 8px,#2e063c 15px,#610136 21px,#ac0022 26px,#ff6300 30px,#ff9d00 33px,#ffb600 36px,#ffcc06 39px)"></div>
<div style="left:1061px;width:2px;top:1183px;height:39px;background:linear-gradient(rgba(20,2,32,0) 0px,#1f042e 8px,#2b053a 15px,#5b0237 21px,#b5001f 26px,#ff2f03 30px,#ff9900 33px,#ffb300 36px,#ffc905 39px)"></div>
<div style="left:1063px;width:2px;top:722px;height:500px;background:linear-gradient(rgba(20,2,33,0) 0px,#1b032b 55px,#280537 105px,#7e002f 150px,#9e0026 190px,#a70023 225px,#b30020 258px,#c7001a 288px,#b00020 315px,#c90019 340px,#cf0017 362px,#d00117 382px,#ea060d 400px,#d40115 416px,#e4050f 430px,#dd0312 442px,#eb060d 452px,#f50809 461px,#ff1704 469px,#ff0e05 476px,#fd0a06 482px,#ff4502 487px,#ff6700 491px,#ff8300 494px,#ff9b00 497px,#ffb500 500px)"></div>
<div style="left:1065px;width:2px;top:722px;height:500px;background:linear-gradient(rgba(19,2,31,0) 0px,#190329 55px,#220431 105px,#42043b 150px,#b30020 190px,#c90019 225px,#cb0019 258px,#d90214 288px,#d20116 315px,#f2070a 340px,#ed060c 362px,#fe0a05 382px,#fe0a05 400px,#f2070a 416px,#ff1205 430px,#fc0906 442px,#ff1604 452px,#ff2204 461px,#ff2104 469px,#ff5401 476px,#ff5b01 482px,#ff8900 487px,#ffa900 491px,#ffbc00 494px,#ffd008 497px,#ffe411 500px)"></div>
<div style="left:1067px;width:2px;top:777px;height:445px;background:linear-gradient(rgba(21,2,34,0) 0px,#1b032b 50px,#230432 95px,#530338 135px,#a60023 170px,#b00021 203px,#c1001c 233px,#cd0018 260px,#c0001c 285px,#d50215 307px,#d20116 327px,#db0313 345px,#ed060c 361px,#eb060d 375px,#e00411 387px,#f90907 397px,#f2070a 406px,#ff1b04 414px,#ff3a02 421px,#ff4b01 427px,#ff7b00 432px,#ff9a00 436px,#ffbc00 439px,#ffd008 442px,#ffe411 445px)"></div>
<div style="left:1069px;width:2px;top:827px;height:395px;background:linear-gradient(rgba(22,2,36,0) 0px,#1d032d 45px,#250434 85px,#6a0035 120px,#b00021 153px,#ba001e 183px,#c2001b 210px,#d70214 235px,#d40115 257px,#e4050f 277px,#db0313 295px,#eb060d 311px,#dc0312 325px,#f3080a 337px,#ea060d 347px,#ff0f05 356px,#f80908 364px,#ff4e01 371px,#ff5101 377px,#ff7600 382px,#ffbd00 386px,#ffbc00 389px,#ffd008 392px,#ffe411 395px)"></div>
<div style="left:1071px;width:2px;top:872px;height:350px;background:linear-gradient(rgba(24,3,38,0) 0px,#1e042e 40px,#240434 75px,#83002e 108px,#9e0026 138px,#a50024 165px,#af0021 190px,#b4001f 212px,#ab0022 232px,#b00021 250px,#c4001b 266px,#d00117 280px,#e00411 292px,#e30410 302px,#ec060c 311px,#fc0906 319px,#ff3603 326px,#ff3c02 332px,#ff4602 337px,#ff8300 341px,#ffbc00 344px,#ffd008 347px,#ffe411 350px)"></div>
<div style="left:1073px;width:2px;top:872px;height:350px;background:linear-gradient(rgba(20,2,33,0) 0px,#190328 40px,#1e042e 75px,#240433 108px,#7a0031 138px,#6f0034 165px,#940029 190px,#8a002c 212px,#a70023 232px,#a70023 250px,#aa0022 266px,#b7001e 280px,#b10020 292px,#cc0018 302px,#cf0017 311px,#e5050f 319px,#ff0d05 326px,#ff3c02 332px,#ff6700 337px,#ff7400 341px,#ffbc00 344px,#ffd008 347px,#ffe411 350px)"></div>
<div style="left:1075px;width:2px;top:912px;height:310px;background:linear-gradient(rgba(21,2,34,0) 0px,#190328 35px,#1e042e 68px,#230432 98px,#790031 125px,#760032 150px,#6f0034 172px,#8e002b 192px,#8e002a 210px,#8f002a 226px,#92002a 240px,#980028 252px,#af0021 262px,#d10117 271px,#fb0906 279px,#ff3a02 286px,#ff4b01 292px,#ff6f00 297px,#ff9000 301px,#ffbc00 304px,#ffd008 307px,#ffe411 310px)"></div>
<div style="left:1077px;width:2px;top:947px;height:275px;background:linear-gradient(rgba(21,2,34,0) 0px,#190328 33px,#1e032d 63px,#230432 90px,#7c0030 115px,#7a0030 137px,#710033 157px,#91002a 175px,#88002c 191px,#88002c 205px,#ab0022 217px,#d00117 227px,#e10411 236px,#ff0e05 244px,#ff4502 251px,#ff5601 257px,#ff5901 262px,#ffb100 266px,#ffbc00 269px,#ffd008 272px,#ffe411 275px)"></div>
<div style="left:1079px;width:2px;top:980px;height:242px;background:linear-gradient(rgba(21,2,34,0) 0px,#180327 30px,#1c032c 57px,#210430 82px,#780031 104px,#7f002f 124px,#7d0030 142px,#9a0027 158px,#a30024 172px,#b00021 184px,#d20116 194px,#db0313 203px,#ff1105 211px,#ff1904 218px,#ff5601 224px,#ff8300 229px,#ffa100 233px,#ffbc00 236px,#ffd008 239px,#ffe411 242px)"></div>
<div style="left:1081px;width:2px;top:1037px;height:185px;background:linear-gradient(rgba(23,3,38,0) 0px,#1b032b 25px,#1e042e 47px,#510339 67px,#770031 85px,#7f002f 101px,#81002e 115px,#b00021 127px,#bb001d 137px,#e20410 146px,#ff0b05 154px,#ff2603 161px,#ff4402 167px,#ff5801 172px,#ff7400 176px,#ffbc00 179px,#ffd008 182px,#ffe411 185px)"></div>
<div style="left:1083px;width:2px;top:1062px;height:160px;background:linear-gradient(rgba(22,2,35,0) 0px,#190328 22px,#1b032b 42px,#30063e 60px,#680135 76px,#86002d 90px,#9e0026 102px,#c4001b 112px,#d70214 121px,#ee070b 129px,#ff1005 136px,#ff5b00 142px,#ff7800 147px,#ff8a00 151px,#ffb600 154px,#ffcc06 157px,#ffe010 160px)"></div>
<div style="left:1085px;width:2px;top:1104px;height:118px;background:linear-gradient(rgba(22,2,36,0) 0px,#180327 18px,#220431 34px,#6a0035 48px,#87002d 60px,#c6001a 70px,#d80214 79px,#f2070a 87px,#ff1a04 94px,#ff6500 100px,#ff5b00 105px,#ff8200 109px,#ffa700 112px,#ffc001 115px,#ffd40a 118px)"></div>
<div style="left:1087px;width:2px;top:1152px;height:70px;background:linear-gradient(rgba(23,2,37,0) 0px,#2a0538 12px,#a00025 22px,#e5050f 31px,#fc0906 39px,#ff3403 46px,#ff3d02 52px,#ff6a00 57px,#ff6000 61px,#ff9800 64px,#ffb200 67px,#ffc805 70px)"></div>
<div style="left:1089px;width:2px;top:827px;height:395px;background:linear-gradient(rgba(21,2,34,0) 0px,#200430 45px,#3d053c 85px,#3f053c 120px,#47043a 153px,#4f0339 183px,#570238 210px,#4e0339 235px,#600136 257px,#590237 277px,#600136 295px,#690135 311px,#720033 325px,#6f0034 337px,#7b0030 347px,#80002f 356px,#87002d 364px,#ee070c 371px,#ff2304 377px,#ff3503 382px,#ff4a01 386px,#ff8900 389px,#ffa200 392px,#ffbc00 395px)"></div>
<div style="left:1091px;width:2px;top:777px;height:445px;background:linear-gradient(rgba(21,2,35,0) 0px,#1d032d 50px,#270536 95px,#a40024 135px,#bc001d 170px,#cf0017 203px,#d40115 233px,#de0311 260px,#f50809 285px,#ff0a05 307px,#ff0d05 327px,#ff0a05 345px,#ff1804 361px,#ff1404 375px,#ff2304 387px,#ff2c03 397px,#ff2304 406px,#ff5101 414px,#ff5201 421px,#ff5901 427px,#ff7e00 432px,#ff9500 436px,#ffd50b 439px,#ffea14 442px,#ffff1e 445px)"></div>
<div style="left:1093px;width:2px;top:777px;height:445px;background:linear-gradient(rgba(19,2,32,0) 0px,#1a032a 50px,#230433 95px,#48043a 135px,#bf001c 170px,#bb001d 203px,#d50215 233px,#c5001a 260px,#e5050f 285px,#d50215 307px,#e8050e 327px,#fe0a05 345px,#e8050e 361px,#ff0e05 375px,#ff2104 387px,#fa0907 397px,#ff0a05 406px,#ff1f04 414px,#ff3902 421px,#ff8100 427px,#ff9800 432px,#ff9c00 436px,#ffd50b 439px,#ffea14 442px,#ffff1e 445px)"></div>
<div style="left:1095px;width:2px;top:827px;height:395px;background:linear-gradient(rgba(23,3,38,0) 0px,#20042f 45px,#2b0539 85px,#a40024 120px,#b20020 153px,#cb0019 183px,#c5001a 210px,#e20410 235px,#e20410 257px,#ef070b 277px,#f0070b 295px,#eb060c 311px,#fe0a05 325px,#ff0f05 337px,#f90907 347px,#fa0907 356px,#ff1604 364px,#ff5c00 371px,#ff5d00 377px,#ffac00 382px,#ffdd0e 386px,#ffd50b 389px,#ffea14 392px,#ffff1e 395px)"></div>
<div style="left:1097px;width:2px;top:827px;height:395px;background:linear-gradient(rgba(21,2,35,0) 0px,#1c032c 45px,#240433 85px,#47043a 120px,#990027 153px,#af0021 183px,#c0001c 210px,#c0001c 235px,#d10116 257px,#d10117 277px,#c90019 295px,#d60215 311px,#eb060d 325px,#ee070c 337px,#e10410 347px,#fa0907 356px,#fb0906 364px,#ff2404 371px,#ff6200 377px,#ffa100 382px,#ff8500 386px,#ffd50b 389px,#ffea14 392px,#ffff1e 395px)"></div>
<div style="left:1099px;width:2px;top:827px;height:395px;background:linear-gradient(rgba(20,2,32,0) 0px,#1a032a 45px,#220431 85px,#2d063b 120px,#940029 153px,#970028 183px,#a60023 210px,#ad0021 235px,#b6001f 257px,#d00117 277px,#c6001a 295px,#c0001c 311px,#cd0018 325px,#e5050f 337px,#ec060c 347px,#f60809 356px,#ff2503 364px,#ff2c03 371px,#ff8100 377px,#ff7300 382px,#ff8b00 386px,#ffd50b 389px,#ffea14 392px,#ffff1e 395px)"></div>
<div style="left:1101px;width:2px;top:872px;height:350px;background:linear-gradient(rgba(24,3,38,0) 0px,#1f042e 40px,#250434 75px,#600136 108px,#88002c 138px,#9e0026 165px,#8c002b 190px,#a00025 212px,#ab0022 232px,#a30024 250px,#ad0021 266px,#b6001f 280px,#d50215 292px,#d40115 302px,#f2070a 311px,#fb0907 319px,#ff4b01 326px,#ff6200 332px,#ff9400 337px,#ffad00 341px,#ffd50b 344px,#ffea14 347px,#ffff1e 350px)"></div>
<div style="left:1103px;width:2px;top:872px;height:350px;background:linear-gradient(rgba(22,2,35,0) 0px,#1c032c 40px,#240433 75px,#35053d 108px,#81002e 138px,#9f0025 165px,#a00025 190px,#ae0021 212px,#bb001d 232px,#b5001f 250px,#c5001a 266px,#d70214 280px,#d70214 292px,#e20410 302px,#e10410 311px,#fc0906 319px,#ff2104 326px,#ff6900 332px,#ff7700 337px,#ff8c00 341px,#ffd50b 344px,#ffea14 347px,#ffff1e 350px)"></div>
<div style="left:1105px;width:2px;top:872px;height:350px;background:linear-gradient(rgba(20,2,33,0) 0px,#1a0329 40px,#200430 75px,#2a0539 108px,#a10025 138px,#9d0026 165px,#ac0022 190px,#b7001e 212px,#c90019 232px,#cf0017 250px,#d20116 266px,#d50215 280px,#df0411 292px,#e30410 302px,#fa0907 311px,#ff0f05 319px,#ff4302 326px,#ff7a00 332px,#ff6800 337px,#ffb500 341px,#ffd50b 344px,#ffea14 347px,#ffff1e 350px)"></div>
<div style="left:1107px;width:2px;top:912px;height:310px;background:linear-gradient(rgba(24,3,38,0) 0px,#1e032d 35px,#260535 68px,#620136 98px,#ac0022 125px,#b00020 150px,#c1001c 172px,#c2001b 192px,#c1001c 210px,#e10410 226px,#eb060d 240px,#e10410 252px,#f40809 262px,#ef070b 271px,#ff1804 279px,#ff3603 286px,#ff5b00 292px,#ffc001 297px,#ffb800 301px,#ffd50b 304px,#ffea14 307px,#ffff1e 310px)"></div>
<div style="left:1109px;width:2px;top:912px;height:310px;background:linear-gradient(rgba(22,2,35,0) 0px,#1b032b 35px,#220431 68px,#2e063c 98px,#960028 125px,#a20025 150px,#9a0027 172px,#b4001f 192px,#bf001c 210px,#d20116 226px,#be001c 240px,#e00411 252px,#d30116 262px,#f50809 271px,#ff1404 279px,#ff3702 286px,#ff6600 292px,#ff5e00 297px,#ffc302 301px,#ffd50b 304px,#ffea14 307px,#ffff1e 310px)"></div>
<div style="left:1111px;width:2px;top:912px;height:310px;background:linear-gradient(rgba(20,2,33,0) 0px,#190328 35px,#1f042f 68px,#270535 98px,#9a0027 125px,#b6001f 150px,#b20020 172px,#c6001a 192px,#c1001c 210px,#bf001c 226px,#e10410 240px,#e4050f 252px,#de0312 262px,#f60809 271px,#fd0a06 279px,#ff4702 286px,#ff7000 292px,#ff8900 297px,#ffb700 301px,#ffd50b 304px,#ffea14 307px,#ffff1e 310px)"></div>
<div style="left:1113px;width:2px;top:947px;height:275px;background:linear-gradient(rgba(23,3,38,0) 0px,#1d032c 33px,#230432 63px,#3f053c 90px,#a60024 115px,#91002a 137px,#9d0026 157px,#bd001d 175px,#d00117 191px,#c80019 205px,#cf0017 217px,#d70214 227px,#ec060c 236px,#ff1304 244px,#ff4b01 251px,#ff6400 257px,#ff8600 262px,#ff9b00 266px,#ffd50b 269px,#ffea14 272px,#ffff1e 275px)"></div>
<div style="left:1115px;width:2px;top:947px;height:275px;background:linear-gradient(rgba(21,2,35,0) 0px,#1a032a 33px,#200430 63px,#250534 90px,#8f002a 115px,#9b0027 137px,#9b0027 157px,#bb001d 175px,#c2001b 191px,#c1001c 205px,#d70214 217px,#db0313 227px,#e30410 236px,#fa0907 244px,#ff5601 251px,#ff6500 257px,#ff8400 262px,#ff8e00 266px,#ffd50b 269px,#ffea14 272px,#ffff1e 275px)"></div>
<div style="left:1117px;width:2px;top:947px;height:275px;background:linear-gradient(rgba(20,2,33,0) 0px,#180327 33px,#1e042d 63px,#230432 90px,#530338 115px,#88002c 137px,#84002e 157px,#9d0026 175px,#b5001f 191px,#a20025 205px,#c6001a 217px,#cf0017 227px,#ec060c 236px,#fb0906 244px,#ff3c02 251px,#ff7b00 257px,#ff8600 262px,#ffab00 266px,#ffd50b 269px,#ffea14 272px,#ffff1e 275px)"></div>
<div style="left:1119px;width:2px;top:980px;height:242px;background:linear-gradient(rgba(23,2,37,0) 0px,#1b032b 30px,#210430 57px,#2a0539 82px,#6d0034 104px,#7e002f 124px,#8b002c 142px,#8b002b 158px,#aa0022 172px,#9e0026 184px,#d60215 194px,#e5050f 203px,#ff0d05 211px,#ff3f02 218px,#ff5401 224px,#ff6a00 229px,#ffac00 233px,#ffd50b 236px,#ffea14 239px,#ffff1e 242px)"></div>
<div style="left:1121px;width:2px;top:980px;height:242px;background:linear-gradient(rgba(21,2,34,0) 0px,#190329 30px,#1e042e 57px,#240434 82px,#5a0237 104px,#7e002f 124px,#84002e 142px,#8d002b 158px,#950028 172px,#a50024 184px,#d90213 194px,#f80908 203px,#ff3403 211px,#ff5101 218px,#ff7e00 224px,#ffb800 229px,#ffb300 233px,#ffd50b 236px,#ffea14 239px,#ffff1e 242px)"></div>
<div style="left:1123px;width:2px;top:1010px;height:212px;background:linear-gradient(rgba(23,3,38,0) 0px,#1c032c 27px,#210430 52px,#2d063b 74px,#91002a 94px,#8e002a 112px,#90002a 128px,#950028 142px,#b4001f 154px,#d60215 164px,#ff1305 173px,#ff3b02 181px,#ff4402 188px,#ff8600 194px,#ffac00 199px,#ffb300 203px,#ffd50b 206px,#ffea14 209px,#ffff1e 212px)"></div>
<div style="left:1125px;width:2px;top:1010px;height:212px;background:linear-gradient(rgba(22,2,35,0) 0px,#1a0329 27px,#1e042e 52px,#210430 74px,#6e0034 94px,#720033 112px,#90002a 128px,#980028 142px,#a60023 154px,#b7001e 164px,#de0312 173px,#f1070a 181px,#ff2c03 188px,#ff6200 194px,#ff7b00 199px,#ffb000 203px,#ffd50b 206px,#ffea14 209px,#ffff1e 212px)"></div>
<div style="left:1127px;width:2px;top:1037px;height:185px;background:linear-gradient(rgba(24,3,38,0) 0px,#1c032c 25px,#210430 47px,#38053d 67px,#7e002f 85px,#91002a 101px,#b00021 115px,#a10025 127px,#d70214 137px,#f90907 146px,#ff1c04 154px,#ff6a00 161px,#ff7a00 167px,#ffa500 172px,#ffab00 176px,#ffd50b 179px,#ffea14 182px,#ffff1e 185px)"></div>
<div style="left:1129px;width:2px;top:1037px;height:185px;background:linear-gradient(rgba(22,2,36,0) 0px,#1a032a 25px,#1e042d 47px,#220432 67px,#7b0030 85px,#990027 101px,#9c0026 115px,#9e0026 127px,#ce0018 137px,#f70808 146px,#ff2304 154px,#ff4002 161px,#ff5401 167px,#ff7800 172px,#ffad00 176px,#ffd50b 179px,#ffea14 182px,#ffff1e 185px)"></div>
<div style="left:1131px;width:2px;top:1062px;height:160px;background:linear-gradient(rgba(24,3,39,0) 0px,#1b032b 22px,#1f042f 42px,#44043b 60px,#a10025 76px,#9d0026 90px,#a60023 102px,#df0411 112px,#e8050e 121px,#ff2104 129px,#ff3c02 136px,#ff6800 142px,#ff9d00 147px,#ffa200 151px,#ffd50b 154px,#ffea14 157px,#ffff1e 160px)"></div>
<div style="left:1133px;width:2px;top:1062px;height:160px;background:linear-gradient(rgba(22,2,36,0) 0px,#190329 22px,#1d032d 42px,#220431 60px,#7f002f 76px,#8b002b 90px,#b8001e 102px,#d80214 112px,#e6050e 121px,#f90907 129px,#ff5801 136px,#ff8300 142px,#ffaa00 147px,#ff9100 151px,#ffd50b 154px,#ffea14 157px,#ffff1e 160px)"></div>
<div style="left:1135px;width:2px;top:1084px;height:138px;background:linear-gradient(rgba(23,3,38,0) 0px,#1b032a 20px,#1e042e 38px,#35053d 54px,#8d002b 68px,#b00020 80px,#d70214 90px,#f50809 99px,#ff2304 107px,#ff4802 114px,#ff4502 120px,#ff7200 125px,#ffa000 129px,#ffd50b 132px,#ffea14 135px,#ffff1e 138px)"></div>
<div style="left:1137px;width:2px;top:1084px;height:138px;background:linear-gradient(rgba(22,2,35,0) 0px,#180328 20px,#1b032b 38px,#20042f 54px,#5d0237 68px,#ad0021 80px,#cd0018 90px,#ee070b 99px,#fd0a06 107px,#ff3303 114px,#ff6900 120px,#ff9a00 125px,#ffc302 129px,#ffd40a 132px,#ffe914 135px,#fffe1e 138px)"></div>
<div style="left:1139px;width:2px;top:1104px;height:118px;background:linear-gradient(rgba(22,2,37,0) 0px,#190329 18px,#1c032c 34px,#2c053a 48px,#b6001f 60px,#cd0018 70px,#f50809 79px,#ff2404 87px,#ff4302 94px,#ff7a00 100px,#ffbd00 105px,#ff9a00 109px,#ffcf08 112px,#ffe411 115px,#fff91b 118px)"></div>
<div style="left:1141px;width:2px;top:1122px;height:100px;background:linear-gradient(rgba(23,3,38,0) 0px,#1a032a 16px,#1d032c 30px,#40043b 42px,#c0001c 52px,#dc0312 61px,#ff0e05 69px,#ff3703 76px,#ff6700 82px,#ff8500 87px,#ff7200 91px,#ffcb06 94px,#ffdf0f 97px,#fff319 100px)"></div>
<div style="left:1143px;width:2px;top:1138px;height:84px;background:linear-gradient(rgba(24,3,38,0) 0px,#1a032a 14px,#240433 26px,#83002e 36px,#eb060c 45px,#f0070b 53px,#ff3503 60px,#ff6f00 66px,#ff7700 71px,#ff8900 75px,#ffc604 78px,#ffd90d 81px,#ffee16 84px)"></div>
<div style="left:1145px;width:2px;top:1152px;height:70px;background:linear-gradient(rgba(24,3,39,0) 0px,#1b032b 12px,#2c053a 22px,#d60214 31px,#f1070b 39px,#ff1604 46px,#ff6000 52px,#ff4d01 57px,#ff9800 61px,#ffc101 64px,#ffd40a 67px,#ffe914 70px)"></div>
<div style="left:1147px;width:2px;top:1152px;height:70px;background:linear-gradient(rgba(22,2,35,0) 0px,#180328 12px,#20042f 22px,#4c033a 31px,#f3080a 39px,#ff3603 46px,#ff5301 52px,#ff5801 57px,#ff8000 61px,#ffbb00 64px,#ffcf08 67px,#ffe311 70px)"></div>
<div style="left:1149px;width:2px;top:1164px;height:58px;background:linear-gradient(rgba(22,2,36,0) 0px,#190329 10px,#2a0538 19px,#760032 27px,#ff4502 34px,#ff5b00 40px,#ff9500 45px,#ff8600 49px,#ffb400 52px,#ffca06 55px,#ffde0f 58px)"></div>
<div style="left:1151px;width:2px;top:1174px;height:48px;background:linear-gradient(rgba(23,3,37,0) 0px,#1f042f 9px,#2f063d 17px,#ac0022 24px,#ff3603 30px,#ff5201 35px,#ff6500 39px,#ffad00 42px,#ffc503 45px,#ffd90c 48px)"></div>
<div style="left:1153px;width:2px;top:827px;height:395px;background:linear-gradient(rgba(23,3,38,0) 0px,#34063d 45px,#37053d 85px,#39053d 120px,#3f053c 153px,#4d0339 183px,#47043a 210px,#4f0339 235px,#5d0237 257px,#5a0237 277px,#5b0237 295px,#640136 311px,#680135 325px,#660135 337px,#6b0035 347px,#6d0034 356px,#790031 364px,#82002e 371px,#d30116 377px,#ff4f01 382px,#ff5d00 386px,#ffa700 389px,#ffc001 392px,#ffd30a 395px)"></div>
<div style="left:1155px;width:2px;top:722px;height:500px;background:linear-gradient(rgba(18,2,30,0) 0px,#180328 55px,#220431 105px,#3d053c 150px,#b20020 190px,#b20020 225px,#d50215 258px,#cb0018 288px,#d80214 315px,#dc0312 340px,#f80908 362px,#f0070b 382px,#ff0d05 400px,#ff1504 416px,#ff1804 430px,#ff1f04 442px,#ff1e04 452px,#ff1904 461px,#ff1b04 469px,#ff4302 476px,#ff4f01 482px,#ff4702 487px,#ff8c00 491px,#ffbc00 494px,#ffd008 497px,#ffe411 500px)"></div>
<div style="left:1157px;width:2px;top:777px;height:445px;background:linear-gradient(rgba(22,2,36,0) 0px,#1e042d 50px,#270536 95px,#9a0027 135px,#b20020 170px,#c80019 203px,#c2001b 233px,#db0313 260px,#ef070b 285px,#e20410 307px,#e10410 327px,#ff0d05 345px,#ff1305 361px,#ff0a05 375px,#fe0a05 387px,#fd0a06 397px,#ff2304 406px,#ff3103 414px,#ff4901 421px,#ff6500 427px,#ff8a00 432px,#ffb300 436px,#ffbc00 439px,#ffd008 442px,#ffe411 445px)"></div>
<div style="left:1159px;width:2px;top:777px;height:445px;background:linear-gradient(rgba(20,2,33,0) 0px,#1b032b 50px,#250434 95px,#5a0237 135px,#a10025 170px,#ad0021 203px,#cd0018 233px,#d00117 260px,#c7001a 285px,#e7050e 307px,#e20410 327px,#e00411 345px,#ea060d 361px,#ed060c 375px,#ec060c 387px,#fb0906 397px,#ff1105 406px,#fe0a05 414px,#ff2e03 421px,#ff5e00 427px,#ff6f00 432px,#ff9400 436px,#ffbc00 439px,#ffd008 442px,#ffe411 445px)"></div>
<div style="left:1161px;width:2px;top:777px;height:445px;background:linear-gradient(rgba(18,2,30,0) 0px,#180327 50px,#200430 95px,#2a0538 135px,#82002e 170px,#9b0027 203px,#9e0026 233px,#ad0021 260px,#b20020 285px,#c2001b 307px,#ca0019 327px,#d80214 345px,#ca0019 361px,#cd0018 375px,#d40115 387px,#e8050e 397px,#ea060d 406px,#ff1005 414px,#ff1904 421px,#ff3603 427px,#ff5201 432px,#ff8400 436px,#ffbc00 439px,#ffd008 442px,#ffe411 445px)"></div>
<div style="left:1163px;width:2px;top:827px;height:395px;background:linear-gradient(rgba(22,2,36,0) 0px,#1d032d 45px,#260535 85px,#650135 120px,#80002f 153px,#9a0027 183px,#a00025 210px,#a40024 235px,#bd001d 257px,#ca0019 277px,#d30116 295px,#c0001c 311px,#dd0312 325px,#dd0312 337px,#db0313 347px,#ed060c 356px,#ff1c04 364px,#ff2104 371px,#ff7100 377px,#ff6200 382px,#ffb700 386px,#ffbc00 389px,#ffd008 392px,#ffe411 395px)"></div>
<div style="left:1165px;width:2px;top:827px;height:395px;background:linear-gradient(rgba(21,2,33,0) 0px,#1b032b 45px,#230432 85px,#2e063d 120px,#8e002b 153px,#91002a 183px,#9b0027 210px,#b00021 235px,#970028 257px,#ae0021 277px,#b20020 295px,#bd001d 311px,#be001c 325px,#c3001b 337px,#c2001b 347px,#e7050e 356px,#ff1404 364px,#ff1704 371px,#ff5701 377px,#ff7b00 382px,#ffb200 386px,#ffbc00 389px,#ffd008 392px,#ffe411 395px)"></div>
<div style="left:1167px;width:2px;top:827px;height:395px;background:linear-gradient(rgba(19,2,31,0) 0px,#180328 45px,#20042f 85px,#260535 120px,#82002e 153px,#81002e 183px,#a10025 210px,#940029 235px,#ad0021 257px,#bf001c 277px,#c8001a 295px,#bc001d 311px,#c3001b 325px,#d80214 337px,#d80214 347px,#de0312 356px,#f80908 364px,#ff4402 371px,#ff6600 377px,#ff8400 382px,#ff7600 386px,#ffbc00 389px,#ffd008 392px,#ffe411 395px)"></div>
<div style="left:1169px;width:2px;top:872px;height:350px;background:linear-gradient(rgba(23,2,37,0) 0px,#1d032d 40px,#220431 75px,#48043a 108px,#7a0030 138px,#980028 165px,#84002d 190px,#ad0021 212px,#a50024 232px,#ba001e 250px,#b9001e 266px,#ae0021 280px,#c90019 292px,#be001c 302px,#e4050f 311px,#f70808 319px,#ff2504 326px,#ff5a01 332px,#ff6d00 337px,#ffa100 341px,#ffbc00 344px,#ffd008 347px,#ffe411 350px)"></div>
<div style="left:1171px;width:2px;top:872px;height:350px;background:linear-gradient(rgba(21,2,34,0) 0px,#1b032b 40px,#210431 75px,#2b0539 108px,#81002e 138px,#8d002b 165px,#7e002f 190px,#9c0027 212px,#a00025 232px,#b4001f 250px,#b20020 266px,#a60023 280px,#b20020 292px,#c7001a 302px,#dc0312 311px,#f30809 319px,#ff0c05 326px,#ff2204 332px,#ff7100 337px,#ff8f00 341px,#ffbc00 344px,#ffd008 347px,#ffe411 350px)"></div>
<div style="left:1173px;width:2px;top:872px;height:350px;background:linear-gradient(rgba(20,2,32,0) 0px,#190328 40px,#1f042e 75px,#250434 108px,#7b0030 138px,#7b0030 165px,#80002f 190px,#8c002b 212px,#8c002b 232px,#af0021 250px,#ab0022 266px,#b9001e 280px,#ba001e 292px,#c3001b 302px,#d70214 311px,#fb0907 319px,#ff2703 326px,#ff3902 332px,#ff4102 337px,#ff7e00 341px,#ffbc00 344px,#ffd008 347px,#ffe411 350px)"></div>
<div style="left:1175px;width:2px;top:912px;height:310px;background:linear-gradient(rgba(23,2,37,0) 0px,#1c032c 35px,#220431 68px,#44043b 98px,#930029 125px,#92002a 150px,#ba001e 172px,#c5001a 192px,#ce0018 210px,#d00117 226px,#c4001b 240px,#dc0312 252px,#cf0017 262px,#de0311 271px,#f90907 279px,#ff3802 286px,#ff4e01 292px,#ff6e00 297px,#ffb000 301px,#ffbc00 304px,#ffd008 307px,#ffe411 310px)"></div>
<div style="left:1177px;width:2px;top:912px;height:310px;background:linear-gradient(rgba(21,2,35,0) 0px,#1a032a 35px,#200430 68px,#290538 98px,#82002e 125px,#91002a 150px,#a40024 172px,#af0021 192px,#b9001e 210px,#b9001e 226px,#ce0018 240px,#ce0017 252px,#d40115 262px,#ef070b 271px,#f70808 279px,#ff4102 286px,#ff5801 292px,#ff6900 297px,#ffa700 301px,#ffbc00 304px,#ffd008 307px,#ffe411 310px)"></div>
<div style="left:1179px;width:2px;top:912px;height:310px;background:linear-gradient(rgba(20,2,33,0) 0px,#180327 35px,#1e042e 68px,#230432 98px,#660135 125px,#8c002b 150px,#8c002b 172px,#8f002a 192px,#970028 210px,#a20025 226px,#a20025 240px,#b4001f 252px,#bf001c 262px,#d30116 271px,#fa0907 279px,#ff2c03 286px,#ff5601 292px,#ff8100 297px,#ff9200 301px,#ffbc00 304px,#ffd008 307px,#ffe411 310px)"></div>
<div style="left:1181px;width:2px;top:947px;height:275px;background:linear-gradient(rgba(23,2,37,0) 0px,#1c032c 33px,#220431 63px,#2d063b 90px,#740032 115px,#89002c 137px,#9e0026 157px,#9a0027 175px,#ae0021 191px,#a40024 205px,#bb001d 217px,#d00117 227px,#db0313 236px,#f50809 244px,#ff2503 251px,#ff5101 257px,#ff7800 262px,#ffb400 266px,#ffbc00 269px,#ffd008 272px,#ffe411 275px)"></div>
<div style="left:1183px;width:2px;top:947px;height:275px;background:linear-gradient(rgba(21,2,35,0) 0px,#1a0329 33px,#1f042f 63px,#250534 90px,#7b0030 115px,#760032 137px,#920029 157px,#920029 175px,#980028 191px,#9c0026 205px,#ab0022 217px,#ba001e 227px,#f2070a 236px,#ff1904 244px,#ff1c04 251px,#ff4d01 257px,#ff6f00 262px,#ffa600 266px,#ffbc00 269px,#ffd008 272px,#ffe411 275px)"></div>
<div style="left:1185px;width:2px;top:980px;height:242px;background:linear-gradient(rgba(24,3,39,0) 0px,#1d032d 30px,#230432 57px,#43043b 82px,#790031 104px,#6f0034 124px,#90002a 142px,#8c002b 158px,#8e002b 172px,#a30024 184px,#ca0019 194px,#db0313 203px,#f40809 211px,#ff4302 218px,#ff7300 224px,#ff6d00 229px,#ff7600 233px,#ffbc00 236px,#ffd008 239px,#ffe411 242px)"></div>
<div style="left:1187px;width:2px;top:980px;height:242px;background:linear-gradient(rgba(22,2,36,0) 0px,#1b032b 30px,#20042f 57px,#240433 82px,#680135 104px,#6a0035 124px,#770031 142px,#780031 158px,#8f002a 172px,#9f0025 184px,#c2001b 194px,#eb060d 203px,#ed060c 211px,#ff4102 218px,#ff4502 224px,#ff7100 229px,#ff7f00 233px,#ffbc00 236px,#ffd008 239px,#ffe411 242px)"></div>
<div style="left:1189px;width:2px;top:980px;height:242px;background:linear-gradient(rgba(21,2,34,0) 0px,#190328 30px,#1d032d 57px,#230432 82px,#540238 104px,#760032 124px,#6b0034 142px,#6e0034 158px,#8f002a 172px,#9f0025 184px,#d00117 194px,#e6050f 203px,#ff1904 211px,#ff3f02 218px,#ff5701 224px,#ff8c00 229px,#ff9700 233px,#ffbc00 236px,#ffd008 239px,#ffe411 242px)"></div>
<div style="left:1191px;width:2px;top:1010px;height:212px;background:linear-gradient(rgba(23,3,38,0) 0px,#1b032b 27px,#200430 52px,#2a0539 74px,#6c0034 94px,#7a0031 112px,#8a002c 128px,#960028 142px,#b6001f 154px,#d80214 164px,#f50809 173px,#ff0c05 181px,#ff3d02 188px,#ff7e00 194px,#ff9a00 199px,#ff8a00 203px,#ffbc00 206px,#ffd008 209px,#ffe411 212px)"></div>
<div style="left:1193px;width:2px;top:1010px;height:212px;background:linear-gradient(rgba(22,2,35,0) 0px,#190329 27px,#1e042d 52px,#230432 74px,#6a0035 94px,#8f002a 112px,#88002c 128px,#87002d 142px,#ae0021 154px,#d10117 164px,#d70214 173px,#ff1b04 181px,#ff3503 188px,#ff5c00 194px,#ff5201 199px,#ff6e00 203px,#ffbc00 206px,#ffd008 209px,#ffe411 212px)"></div>
<div style="left:1195px;width:2px;top:1037px;height:185px;background:linear-gradient(rgba(24,3,38,0) 0px,#1c032b 25px,#20042f 47px,#34063d 67px,#6d0034 85px,#7e002f 101px,#87002d 115px,#90002a 127px,#ad0022 137px,#dc0312 146px,#fb0907 154px,#ff0a05 161px,#ff4802 167px,#ff4902 172px,#ff5c00 176px,#ffbc00 179px,#ffd008 182px,#ffe411 185px)"></div>
<div style="left:1197px;width:2px;top:1037px;height:185px;background:linear-gradient(rgba(22,2,36,0) 0px,#1a0329 25px,#1e032d 47px,#230432 67px,#750032 85px,#80002f 101px,#8b002c 115px,#b00021 127px,#d10116 137px,#d80214 146px,#f80908 154px,#ff1f04 161px,#ff6400 167px,#ff6b00 172px,#ff9500 176px,#ffbc00 179px,#ffd008 182px,#ffe411 185px)"></div>
<div style="left:1199px;width:2px;top:1062px;height:160px;background:linear-gradient(rgba(24,3,39,0) 0px,#1b032b 22px,#1f042f 42px,#39053c 60px,#8e002a 76px,#950029 90px,#a90023 102px,#bd001d 112px,#ea060d 121px,#f30809 129px,#ff1a04 136px,#ff3403 142px,#ff7700 147px,#ff7800 151px,#ffbc00 154px,#ffd008 157px,#ffe411 160px)"></div>
<div style="left:1201px;width:2px;top:1062px;height:160px;background:linear-gradient(rgba(22,2,36,0) 0px,#190329 22px,#1d032d 42px,#240433 60px,#89002c 76px,#9f0026 90px,#b30020 102px,#d10116 112px,#f50809 121px,#ff2404 129px,#ff2603 136px,#ff7a00 142px,#ff7700 147px,#ff9800 151px,#ffbc00 154px,#ffd008 157px,#ffe411 160px)"></div>
<div style="left:1203px;width:2px;top:1084px;height:138px;background:linear-gradient(rgba(24,3,39,0) 0px,#1b032b 20px,#1e042e 38px,#3a053c 54px,#83002e 68px,#990027 80px,#d40115 90px,#e7050e 99px,#f2070a 107px,#ff2b03 114px,#ff6000 120px,#ff6000 125px,#ff9900 129px,#ffbc00 132px,#ffd008 135px,#ffe411 138px)"></div>
<div style="left:1205px;width:2px;top:1084px;height:138px;background:linear-gradient(rgba(22,2,36,0) 0px,#190328 20px,#1c032c 38px,#220431 54px,#6a0035 68px,#aa0022 80px,#d60215 90px,#dd0312 99px,#fe0a05 107px,#ff2404 114px,#ff5101 120px,#ff9400 125px,#ff9900 129px,#ffbc00 132px,#ffd008 135px,#ffe411 138px)"></div>
<div style="left:1207px;width:2px;top:1104px;height:118px;background:linear-gradient(rgba(23,3,38,0) 0px,#1a032a 18px,#1d032d 34px,#2e063c 48px,#8c002b 60px,#c7001a 70px,#dd0312 79px,#f80908 87px,#fe0a05 94px,#ff2803 100px,#ff4702 105px,#ff9a00 109px,#ffb900 112px,#ffce07 115px,#ffe211 118px)"></div>
<div style="left:1209px;width:2px;top:1122px;height:100px;background:linear-gradient(rgba(24,3,39,0) 0px,#1b032b 16px,#220431 30px,#650135 42px,#d50215 52px,#e9060e 61px,#f70808 69px,#ff4602 76px,#ff4602 82px,#ff5a01 87px,#ff9d00 91px,#ffb400 94px,#ffca05 97px,#ffde0f 100px)"></div>
<div style="left:1211px;width:2px;top:1122px;height:100px;background:linear-gradient(rgba(22,2,36,0) 0px,#190328 16px,#1b032b 30px,#2c053a 42px,#ce0018 52px,#e8050e 61px,#ff1205 69px,#ff3103 76px,#ff2c03 82px,#ff7e00 87px,#ff9700 91px,#ffae00 94px,#ffc503 97px,#ffd90c 100px)"></div>
<div style="left:1213px;width:2px;top:1138px;height:84px;background:linear-gradient(rgba(23,2,37,0) 0px,#190329 14px,#210430 26px,#510339 36px,#d80214 45px,#ff1105 53px,#ff1704 60px,#ff5c00 66px,#ff7100 71px,#ff8300 75px,#ffa800 78px,#ffc101 81px,#ffd50a 84px)"></div>
<div style="left:1215px;width:2px;top:1152px;height:70px;background:linear-gradient(rgba(23,3,38,0) 0px,#1a032a 12px,#280537 22px,#930029 31px,#e8050e 39px,#ff3403 46px,#ff3d02 52px,#ff5001 57px,#ff7f00 61px,#ffa200 64px,#ffbc00 67px,#ffd008 70px)"></div>
<div style="left:1217px;width:2px;top:1152px;height:70px;background:linear-gradient(rgba(22,2,35,0) 0px,#180327 12px,#1f042f 22px,#3a053c 31px,#e4050f 39px,#f90907 46px,#ff3103 52px,#ff5001 57px,#ff5c00 61px,#ff9d00 64px,#ffb600 67px,#ffcc06 70px)"></div>
<div style="left:1219px;width:2px;top:1164px;height:58px;background:linear-gradient(rgba(22,2,36,0) 0px,#190329 10px,#280537 19px,#6f0034 27px,#fd0a06 34px,#ff1404 40px,#ff6300 45px,#ff7900 49px,#ff9700 52px,#ffb000 55px,#ffc704 58px)"></div>
<div style="left:1221px;width:2px;top:1174px;height:48px;background:linear-gradient(rgba(24,3,38,0) 0px,#20042f 9px,#3b053c 17px,#c4001b 24px,#ff2703 30px,#ff5d00 35px,#ff6900 39px,#ff9100 42px,#ffaa00 45px,#ffc302 48px)"></div>
<div style="left:1223px;width:2px;top:1174px;height:48px;background:linear-gradient(rgba(22,2,35,0) 0px,#1a032a 9px,#280537 17px,#530338 24px,#f90907 30px,#ff4602 35px,#ff4a01 39px,#ff8b00 42px,#ffa400 45px,#ffbe00 48px)"></div>
<div style="left:1225px;width:2px;top:1010px;height:212px;background:linear-gradient(rgba(24,3,39,0) 0px,#180328 27px,#190329 52px,#1a0329 74px,#1a032a 94px,#1b032b 112px,#1b032b 128px,#1c032b 142px,#1c032c 154px,#1c032c 164px,#1d032d 173px,#230432 181px,#3a053c 188px,#7f002f 194px,#ff4a01 199px,#ff4602 203px,#ff8500 206px,#ff9e00 209px,#ffb800 212px)"></div>
<div style="left:1227px;width:2px;top:827px;height:395px;background:linear-gradient(rgba(22,2,36,0) 0px,#1e042e 45px,#35063d 85px,#84002e 120px,#750032 153px,#81002e 183px,#aa0022 210px,#b7001f 235px,#c1001b 257px,#c1001b 277px,#bd001d 295px,#ce0017 311px,#d90214 325px,#ce0017 337px,#d80214 347px,#d40115 356px,#e10410 364px,#f2070a 371px,#fb0906 377px,#ff1704 382px,#ff5601 386px,#ff8000 389px,#ff9800 392px,#ffb100 395px)"></div>
<div style="left:1229px;width:2px;top:827px;height:395px;background:linear-gradient(rgba(22,2,35,0) 0px,#1d032d 45px,#280536 85px,#85002d 120px,#a10025 153px,#990027 183px,#c0001c 210px,#ce0017 235px,#bd001d 257px,#bf001c 277px,#de0311 295px,#db0313 311px,#db0313 325px,#e6050e 337px,#fb0907 347px,#f60808 356px,#ff0a05 364px,#ff3a02 371px,#ff6500 377px,#ff8200 382px,#ff8700 386px,#ffbc00 389px,#ffd008 392px,#ffe411 395px)"></div>
<div style="left:1231px;width:2px;top:827px;height:395px;background:linear-gradient(rgba(19,2,32,0) 0px,#1a0329 45px,#220432 85px,#32063e 120px,#91002a 153px,#9f0026 183px,#b7001f 210px,#c80019 235px,#d10116 257px,#d10117 277px,#de0312 295px,#df0411 311px,#d20116 325px,#ed060c 337px,#ef070b 347px,#fa0907 356px,#f60809 364px,#ff2004 371px,#ff6400 377px,#ff6e00 382px,#ff9800 386px,#ffbc00 389px,#ffd008 392px,#ffe411 395px)"></div>
<div style="left:1233px;width:2px;top:872px;height:350px;background:linear-gradient(rgba(23,2,37,0) 0px,#1e042d 40px,#260535 75px,#7f002f 108px,#7d0030 138px,#8e002a 165px,#8e002b 190px,#ae0021 212px,#be001d 232px,#be001c 250px,#ae0021 266px,#b6001f 280px,#bb001d 292px,#c7001a 302px,#d10117 311px,#f30809 319px,#ff2004 326px,#ff3303 332px,#ff6500 337px,#ffa000 341px,#ffbc00 344px,#ffd008 347px,#ffe411 350px)"></div>
<div style="left:1235px;width:2px;top:872px;height:350px;background:linear-gradient(rgba(20,2,33,0) 0px,#1a032a 40px,#220431 75px,#30063e 108px,#87002d 138px,#7e002f 165px,#a50024 190px,#8d002b 212px,#a70023 232px,#ae0021 250px,#bc001d 266px,#b30020 280px,#c6001a 292px,#cf0017 302px,#e20410 311px,#ee070b 319px,#ff2a03 326px,#ff3003 332px,#ff8100 337px,#ff6c00 341px,#ffbc00 344px,#ffd008 347px,#ffe411 350px)"></div>
<div style="left:1237px;width:2px;top:912px;height:310px;background:linear-gradient(rgba(23,3,38,0) 0px,#1e042e 35px,#270536 68px,#970028 98px,#8f002a 125px,#a00025 150px,#c1001c 172px,#cd0018 192px,#ce0018 210px,#bc001d 226px,#cc0018 240px,#e6050e 252px,#d20116 262px,#e7050e 271px,#f40809 279px,#ff2404 286px,#ff5501 292px,#ff6700 297px,#ffac00 301px,#ffbc00 304px,#ffd008 307px,#ffe411 310px)"></div>
<div style="left:1239px;width:2px;top:912px;height:310px;background:linear-gradient(rgba(21,2,34,0) 0px,#1b032a 35px,#220431 68px,#38053d 98px,#8b002b 125px,#a80023 150px,#b8001e 172px,#c5001a 192px,#c4001b 210px,#cf0017 226px,#c7001a 240px,#d60215 252px,#d40115 262px,#eb060d 271px,#f70808 279px,#ff2c03 286px,#ff6300 292px,#ff7900 297px,#ffc001 301px,#ffbc00 304px,#ffd008 307px,#ffe411 310px)"></div>
<div style="left:1241px;width:2px;top:947px;height:275px;background:linear-gradient(rgba(24,3,38,0) 0px,#1e042e 33px,#260535 63px,#8b002b 90px,#960028 115px,#86002d 137px,#ad0021 157px,#af0021 175px,#be001d 191px,#b00021 205px,#c0001c 217px,#bc001d 227px,#d20116 236px,#ff1504 244px,#ff1205 251px,#ff3703 257px,#ff8200 262px,#ff7d00 266px,#ffbc00 269px,#ffd008 272px,#ffe411 275px)"></div>
<div style="left:1243px;width:2px;top:947px;height:275px;background:linear-gradient(rgba(21,2,35,0) 0px,#1b032b 33px,#210431 63px,#2f063d 90px,#720033 115px,#85002d 137px,#8e002b 157px,#af0021 175px,#a10025 191px,#c4001b 205px,#bb001d 217px,#ce0017 227px,#ed060c 236px,#ef070b 244px,#ff3e02 251px,#ff6d00 257px,#ff5401 262px,#ff7f00 266px,#ffbc00 269px,#ffd008 272px,#ffe411 275px)"></div>
<div style="left:1245px;width:2px;top:980px;height:242px;background:linear-gradient(rgba(24,3,39,0) 0px,#1d032d 30px,#240433 57px,#6b0034 82px,#940029 104px,#a20025 124px,#950029 142px,#a80023 158px,#b9001e 172px,#c4001b 184px,#c6001a 194px,#ef070b 203px,#ff1105 211px,#ff3f02 218px,#ff6e00 224px,#ffa700 229px,#ffc403 233px,#ffbc00 236px,#ffd008 239px,#ffe411 242px)"></div>
<div style="left:1247px;width:2px;top:980px;height:242px;background:linear-gradient(rgba(22,2,35,0) 0px,#1a032a 30px,#200430 57px,#2a0538 82px,#790031 104px,#83002e 124px,#7c0030 142px,#91002a 158px,#930029 172px,#90002a 184px,#b9001e 194px,#de0311 203px,#fd0a06 211px,#ff0e05 218px,#ff3802 224px,#ff7400 229px,#ff8800 233px,#ffbc00 236px,#ffd008 239px,#ffe411 242px)"></div>
<div style="left:1249px;width:2px;top:1010px;height:212px;background:linear-gradient(rgba(24,3,38,0) 0px,#1d032c 27px,#220432 52px,#4d0339 74px,#6b0034 94px,#84002e 112px,#770031 128px,#780031 142px,#9d0026 154px,#c90019 164px,#db0313 173px,#fd0a06 181px,#ff1804 188px,#ff5d00 194px,#ff4e01 199px,#ff7300 203px,#ffbc00 206px,#ffd008 209px,#ffe411 212px)"></div>
<div style="left:1251px;width:2px;top:1010px;height:212px;background:linear-gradient(rgba(21,2,35,0) 0px,#1a0329 27px,#1f042e 52px,#270536 74px,#690035 94px,#81002f 112px,#87002d 128px,#920029 142px,#a10025 154px,#d80214 164px,#eb060d 173px,#f30809 181px,#ff2304 188px,#ff4502 194px,#ff8600 199px,#ff8c00 203px,#ffbc00 206px,#ffd008 209px,#ffe411 212px)"></div>
<div style="left:1253px;width:2px;top:1037px;height:185px;background:linear-gradient(rgba(23,2,37,0) 0px,#1b032b 25px,#20042f 47px,#42043b 67px,#700033 85px,#750032 101px,#730033 115px,#a50024 127px,#d00117 137px,#e20410 146px,#ff0e05 154px,#ff4902 161px,#ff5101 167px,#ff9100 172px,#ffb800 176px,#ffbc00 179px,#ffd008 182px,#ffe411 185px)"></div>
<div style="left:1255px;width:2px;top:1037px;height:185px;background:linear-gradient(rgba(21,2,34,0) 0px,#180327 25px,#1c032c 47px,#220431 67px,#640136 85px,#6b0035 101px,#85002d 115px,#83002e 127px,#c1001b 137px,#dd0312 146px,#f70808 154px,#ff1205 161px,#ff4202 167px,#ff8400 172px,#ff7000 176px,#ffbc00 179px,#ffd008 182px,#ffe411 185px)"></div>
<div style="left:1257px;width:2px;top:1062px;height:160px;background:linear-gradient(rgba(22,2,36,0) 0px,#190329 22px,#1d032d 42px,#2b053a 60px,#750032 76px,#90002a 90px,#8c002b 102px,#b10020 112px,#df0411 121px,#ec060c 129px,#ff0c05 136px,#ff4f01 142px,#ff5b00 147px,#ff7700 151px,#ffbc00 154px,#ffd008 157px,#ffe411 160px)"></div>
<div style="left:1259px;width:2px;top:1084px;height:138px;background:linear-gradient(rgba(23,2,37,0) 0px,#1a032a 20px,#1d032d 38px,#42043b 54px,#83002e 68px,#91002a 80px,#b8001e 90px,#e10410 99px,#f3080a 107px,#ff2f03 114px,#ff3a02 120px,#ff6300 125px,#ff7c00 129px,#ffbc00 132px,#ffd008 135px,#ffe411 138px)"></div>
<div style="left:1261px;width:2px;top:1104px;height:118px;background:linear-gradient(rgba(23,3,37,0) 0px,#1a032a 18px,#220431 34px,#6d0034 48px,#a90023 60px,#c0001c 70px,#e00411 79px,#ff1704 87px,#ff3003 94px,#ff3e02 100px,#ff7500 105px,#ffaa00 109px,#ffb900 112px,#ffcd07 115px,#ffe110 118px)"></div>
<div style="left:1263px;width:2px;top:1122px;height:100px;background:linear-gradient(rgba(23,3,38,0) 0px,#1a032a 16px,#280536 30px,#92002a 42px,#b4001f 52px,#e10410 61px,#e4050f 69px,#ff1904 76px,#ff2703 82px,#ff5201 87px,#ff7a00 91px,#ffb000 94px,#ffc704 97px,#ffda0d 100px)"></div>
<div style="left:1265px;width:2px;top:1138px;height:84px;background:linear-gradient(rgba(23,2,37,0) 0px,#190329 14px,#2e063c 26px,#c80019 36px,#d00117 45px,#f40809 53px,#ff1704 60px,#ff2f03 66px,#ff7c00 71px,#ff5e00 75px,#ffa700 78px,#ffc001 81px,#ffd30a 84px)"></div>
<div style="left:1267px;width:2px;top:1152px;height:70px;background:linear-gradient(rgba(22,2,36,0) 0px,#1a032a 12px,#2c053b 22px,#de0311 31px,#ec060c 39px,#ff0c05 46px,#ff5001 52px,#ff4502 57px,#ff6600 61px,#ff9e00 64px,#ffb700 67px,#ffcc07 70px)"></div>
<div style="left:1269px;width:2px;top:1164px;height:58px;background:linear-gradient(rgba(22,2,36,0) 0px,#1b032b 10px,#30063e 19px,#c5001a 27px,#fc0906 34px,#ff4c01 40px,#ff3b02 45px,#ff5001 49px,#ff9500 52px,#ffae00 55px,#ffc503 58px)"></div>
<div style="left:1271px;width:2px;top:1174px;height:48px;background:linear-gradient(rgba(22,2,36,0) 0px,#1e042e 9px,#2f063e 17px,#af0021 24px,#ff3b02 30px,#ff3d02 35px,#ff7e00 39px,#ff8c00 42px,#ffa500 45px,#ffbe00 48px)"></div>
<div style="left:1273px;width:2px;top:1183px;height:39px;background:linear-gradient(rgba(23,2,37,0) 0px,#220431 8px,#43043b 15px,#980028 21px,#ff4b01 26px,#ff5b01 30px,#ff8300 33px,#ff9b00 36px,#ffb500 39px)"></div>
<div style="left:1275px;width:2px;top:1183px;height:39px;background:linear-gradient(rgba(19,2,31,0) 0px,#1d032d 8px,#2f063d 15px,#670135 21px,#a90023 26px,#ff2803 30px,#ff7a00 33px,#ff9200 36px,#ffab00 39px)"></div>
<div style="left:1277px;width:2px;top:1183px;height:39px;background:linear-gradient(rgba(18,2,30,0) 0px,#1c032c 8px,#2c053a 15px,#570238 21px,#b30020 26px,#ff1c04 30px,#ff4902 33px,#ff5c00 36px,#ff7100 39px)"></div>
<div style="left:1279px;width:2px;top:1183px;height:39px;background:linear-gradient(rgba(18,2,30,0) 0px,#190328 8px,#270536 15px,#43043b 21px,#720033 26px,#ff1005 30px,#ff1b04 33px,#ff2c03 36px,#ff3d02 39px)"></div>
<div style="left:1281px;width:2px;top:1191px;height:31px;background:linear-gradient(rgba(22,2,35,0) 0px,#210430 7px,#34063d 13px,#630136 18px,#a80023 22px,#ec060c 25px,#f60808 28px,#ff0c05 31px)"></div>
<div style="left:1283px;width:2px;top:1191px;height:31px;background:linear-gradient(rgba(19,2,31,0) 0px,#1c032c 7px,#280537 13px,#48043a 18px,#7d002f 22px,#ad0021 25px,#c6001a 28px,#f70808 31px)"></div>
<div style="left:1285px;width:2px;top:1198px;height:24px;background:linear-gradient(rgba(24,3,39,0) 0px,#240433 6px,#30063e 11px,#5e0237 15px,#8c002b 18px,#a80023 21px,#f70808 24px)"></div>
<div style="left:1287px;width:2px;top:1198px;height:24px;background:linear-gradient(rgba(20,2,33,0) 0px,#1d032d 6px,#2b053a 11px,#3e053c 15px,#670135 18px,#90002a 21px,#f70808 24px)"></div>
<div style="left:1289px;width:2px;top:1198px;height:24px;background:linear-gradient(rgba(19,2,31,0) 0px,#190328 6px,#220431 11px,#2d063c 15px,#510339 18px,#83002e 21px,#f70808 24px)"></div>
<div style="left:1291px;width:2px;top:1204px;height:18px;background:linear-gradient(rgba(20,2,32,0) 0px,#190328 5px,#260535 9px,#3f053c 12px,#83002e 15px,#f70808 18px)"></div>
<div style="left:1293px;width:2px;top:1204px;height:18px;background:linear-gradient(rgba(20,2,32,0) 0px,#190328 5px,#250434 9px,#3f053c 12px,#83002e 15px,#f70808 18px)"></div>
<div style="left:1295px;width:2px;top:1204px;height:18px;background:linear-gradient(rgba(20,2,32,0) 0px,#190328 5px,#230432 9px,#3f053c 12px,#83002e 15px,#f70808 18px)"></div>
<div style="left:1297px;width:2px;top:1204px;height:18px;background:linear-gradient(rgba(20,2,32,0) 0px,#190328 5px,#250434 9px,#3f053c 12px,#83002e 15px,#f70808 18px)"></div>
<div style="left:1299px;width:2px;top:1204px;height:18px;background:linear-gradient(rgba(20,2,32,0) 0px,#190328 5px,#250434 9px,#3f053c 12px,#83002e 15px,#f70808 18px)"></div>
<div style="left:1301px;width:2px;top:1204px;height:18px;background:linear-gradient(rgba(20,2,32,0) 0px,#190328 5px,#270536 9px,#3f053c 12px,#83002e 15px,#f70808 18px)"></div>
<div style="left:1303px;width:2px;top:1204px;height:18px;background:linear-gradient(rgba(20,2,32,0) 0px,#190328 5px,#260535 9px,#3f053c 12px,#83002e 15px,#f70808 18px)"></div>
<div style="left:1305px;width:2px;top:1204px;height:18px;background:linear-gradient(rgba(20,2,32,0) 0px,#190328 5px,#260535 9px,#3f053c 12px,#83002e 15px,#f70808 18px)"></div>
<div style="left:1307px;width:2px;top:1204px;height:18px;background:linear-gradient(rgba(20,2,32,0) 0px,#190328 5px,#240433 9px,#3f053c 12px,#83002e 15px,#f70808 18px)"></div>
<div style="left:1309px;width:2px;top:1204px;height:18px;background:linear-gradient(rgba(20,2,32,0) 0px,#190328 5px,#250434 9px,#3f053c 12px,#83002e 15px,#f70808 18px)"></div>
<div style="left:1311px;width:2px;top:1204px;height:18px;background:linear-gradient(rgba(20,2,32,0) 0px,#190328 5px,#270536 9px,#3f053c 12px,#83002e 15px,#f70808 18px)"></div>
<div style="left:1313px;width:2px;top:947px;height:275px;background:linear-gradient(rgba(24,3,38,0) 0px,#180327 33px,#190328 63px,#190329 90px,#1a032a 115px,#1b032a 137px,#1b032b 157px,#1b032b 175px,#1c032c 191px,#1c032c 205px,#1c032c 217px,#1d032d 227px,#1d032d 236px,#1e042e 244px,#1f042e 251px,#20042f 257px,#210431 262px,#260534 266px,#3f053c 269px,#83002e 272px,#f70808 275px)"></div>
<div style="left:1315px;width:2px;top:722px;height:500px;background:linear-gradient(rgba(21,2,34,0) 0px,#1c032c 55px,#260535 105px,#6b0035 150px,#740032 190px,#990027 225px,#8e002a 258px,#ac0022 288px,#b8001e 315px,#af0021 340px,#ce0018 362px,#be001c 382px,#d20116 400px,#c90019 416px,#d50215 430px,#d70214 442px,#d70214 452px,#e10410 461px,#dd0312 469px,#f0070b 476px,#ff3003 482px,#ff4d01 487px,#ff3d02 491px,#ff6b00 494px,#ff8200 497px,#ff9b00 500px)"></div>
<div style="left:1317px;width:2px;top:722px;height:500px;background:linear-gradient(rgba(21,2,35,0) 0px,#1d032d 55px,#260535 105px,#85002d 150px,#a10025 190px,#aa0022 225px,#d20116 258px,#d20116 288px,#d70214 315px,#e7050e 340px,#df0411 362px,#e20410 382px,#ed060c 400px,#fe0a05 416px,#f90907 430px,#ff1704 442px,#ff0b05 452px,#ff1f04 461px,#ff1305 469px,#ff4402 476px,#ff6900 482px,#ffb100 487px,#ffb700 491px,#ffd50b 494px,#ffea14 497px,#ffff1e 500px)"></div>
<div style="left:1319px;width:2px;top:722px;height:500px;background:linear-gradient(rgba(20,2,33,0) 0px,#1b032b 55px,#230432 105px,#500339 150px,#aa0022 190px,#ac0022 225px,#c4001b 258px,#cb0018 288px,#bc001d 315px,#c90019 340px,#cf0017 362px,#e6050f 382px,#f2070a 400px,#f3080a 416px,#f2070a 430px,#fb0907 442px,#ff1304 452px,#ff0b05 461px,#ff1604 469px,#ff4202 476px,#ff5501 482px,#ff9b00 487px,#ffb800 491px,#ffd50b 494px,#ffea14 497px,#ffff1e 500px)"></div>
<div style="left:1321px;width:2px;top:722px;height:500px;background:linear-gradient(rgba(19,2,31,0) 0px,#190329 55px,#220431 105px,#2e063c 150px,#90002a 190px,#ab0022 225px,#ab0022 258px,#c7001a 288px,#d50215 315px,#d40115 340px,#cc0018 362px,#da0313 382px,#da0313 400px,#e9060d 416px,#e8050e 430px,#e6050e 442px,#f60808 452px,#ff0a05 461px,#ff2304 469px,#ff4602 476px,#ff6300 482px,#ff9800 487px,#ff9200 491px,#ffd50b 494px,#ffea14 497px,#ffff1e 500px)"></div>
<div style="left:1323px;width:2px;top:777px;height:445px;background:linear-gradient(rgba(23,3,38,0) 0px,#20042f 50px,#290538 95px,#a70023 135px,#a40024 170px,#a90023 203px,#be001c 233px,#cd0018 260px,#bf001c 285px,#c4001b 307px,#e30410 327px,#d80214 345px,#e9060d 361px,#df0411 375px,#fa0907 387px,#f40809 397px,#ff1304 406px,#ff2304 414px,#ff4901 421px,#ff5201 427px,#ff7200 432px,#ffb700 436px,#ffd50b 439px,#ffea14 442px,#ffff1e 445px)"></div>
<div style="left:1325px;width:2px;top:777px;height:445px;background:linear-gradient(rgba(22,2,36,0) 0px,#1e032d 50px,#250434 95px,#700034 135px,#b20020 170px,#aa0022 203px,#d00117 233px,#cb0019 260px,#cf0017 285px,#d20116 307px,#e00411 327px,#e00411 345px,#f50809 361px,#fd0a06 375px,#ee070b 387px,#ff1504 397px,#ff0c05 406px,#ff2204 414px,#ff5101 421px,#ff6700 427px,#ff7c00 432px,#ffb900 436px,#ffd50b 439px,#ffea14 442px,#ffff1e 445px)"></div>
<div style="left:1327px;width:2px;top:777px;height:445px;background:linear-gradient(rgba(21,2,34,0) 0px,#1c032c 50px,#250434 95px,#40043b 135px,#9b0027 170px,#be001c 203px,#b9001e 233px,#cc0018 260px,#ca0019 285px,#c8001a 307px,#e9060d 327px,#ea060d 345px,#f1070a 361px,#e4050f 375px,#f80908 387px,#ef070b 397px,#f60808 406px,#ff2b03 414px,#ff2004 421px,#ff4a01 427px,#ff7f00 432px,#ff9700 436px,#ffd50b 439px,#ffea14 442px,#ffff1e 445px)"></div>
<div style="left:1329px;width:2px;top:777px;height:445px;background:linear-gradient(rgba(20,2,33,0) 0px,#1a032a 50px,#230432 95px,#2d063b 135px,#970028 170px,#a90023 203px,#b20020 233px,#ae0021 260px,#b10020 285px,#cd0018 307px,#dd0312 327px,#e20410 345px,#e30410 361px,#db0313 375px,#f3080a 387px,#e7050e 397px,#ea060d 406px,#f60809 414px,#ff1604 421px,#ff6a00 427px,#ff5a01 432px,#ff8e00 436px,#ffd50b 439px,#ffea14 442px,#ffff1e 445px)"></div>
<div style="left:1331px;width:2px;top:777px;height:445px;background:linear-gradient(rgba(19,2,31,0) 0px,#190328 50px,#210430 95px,#270536 135px,#980028 170px,#86002d 203px,#b20020 233px,#b5001f 260px,#ab0022 285px,#ba001d 307px,#ce0018 327px,#c0001c 345px,#de0312 361px,#ce0018 375px,#e5050f 387px,#dd0312 397px,#dd0312 406px,#ff2304 414px,#ff3b02 421px,#ff3e02 427px,#ffa000 432px,#ffbb00 436px,#ffd50b 439px,#ffea14 442px,#ffff1e 445px)"></div>
<div style="left:1333px;width:2px;top:827px;height:395px;background:linear-gradient(rgba(24,3,38,0) 0px,#1f042e 45px,#280537 85px,#680135 120px,#930029 153px,#9a0027 183px,#b00021 210px,#a60024 235px,#a30024 257px,#bb001d 277px,#d40115 295px,#bb001d 311px,#d90214 325px,#dc0312 337px,#d50215 347px,#ee070c 356px,#ff2004 364px,#ff3203 371px,#ff5e00 377px,#ff6c00 382px,#ffb300 386px,#ffd50b 389px,#ffea14 392px,#ffff1e 395px)"></div>
<div style="left:1335px;width:2px;top:827px;height:395px;background:linear-gradient(rgba(22,2,36,0) 0px,#1d032d 45px,#260535 85px,#42043b 120px,#950029 153px,#990027 183px,#a00025 210px,#bf001c 235px,#b8001e 257px,#c6001a 277px,#d10116 295px,#c90019 311px,#db0313 325px,#de0312 337px,#da0313 347px,#f90907 356px,#ff4102 364px,#ff7000 371px,#ff6a00 377px,#ffc805 382px,#ffc604 386px,#ffd50b 389px,#ffea14 392px,#ffff1e 395px)"></div>
<div style="left:1337px;width:2px;top:827px;height:395px;background:linear-gradient(rgba(21,2,35,0) 0px,#1c032b 45px,#210431 85px,#2b0539 120px,#8e002b 153px,#89002c 183px,#9a0027 210px,#940029 235px,#990027 257px,#b9001e 277px,#a70023 295px,#be001d 311px,#cc0018 325px,#c6001a 337px,#d60215 347px,#dc0312 356px,#ff1305 364px,#ff4202 371px,#ff6600 377px,#ff5e00 382px,#ff8100 386px,#ffd50b 389px,#ffea14 392px,#ffff1e 395px)"></div>
<div style="left:1339px;width:2px;top:827px;height:395px;background:linear-gradient(rgba(20,2,33,0) 0px,#1a032a 45px,#220431 85px,#290538 120px,#81002e 153px,#85002d 183px,#92002a 210px,#9f0026 235px,#a20025 257px,#a00025 277px,#ba001e 295px,#c5001a 311px,#c7001a 325px,#c1001c 337px,#da0313 347px,#fb0906 356px,#ff3403 364px,#ff5501 371px,#ff5801 377px,#ffaa00 382px,#ffb400 386px,#ffd50b 389px,#ffea14 392px,#ffff1e 395px)"></div>
<div style="left:1341px;width:2px;top:827px;height:395px;background:linear-gradient(rgba(20,2,32,0) 0px,#190328 45px,#20042f 85px,#260535 120px,#690035 153px,#780031 183px,#84002e 210px,#89002c 235px,#9e0026 257px,#9d0026 277px,#bb001d 295px,#ac0022 311px,#b20020 325px,#c4001b 337px,#dd0312 347px,#ec060c 356px,#ff3603 364px,#ff3c02 371px,#ff7800 377px,#ffa600 382px,#ffaf00 386px,#ffd50b 389px,#ffea14 392px,#ffff1e 395px)"></div>
<div style="left:1343px;width:2px;top:872px;height:350px;background:linear-gradient(rgba(24,3,39,0) 0px,#1e042e 40px,#240433 75px,#40043b 108px,#730033 138px,#8c002b 165px,#960028 190px,#960028 212px,#9d0026 232px,#b10020 250px,#b10020 266px,#bc001d 280px,#c80019 292px,#ce0018 302px,#e5050f 311px,#ff1804 319px,#ff3902 326px,#ff7300 332px,#ff8900 337px,#ffb200 341px,#ffd50b 344px,#ffea14 347px,#ffff1e 350px)"></div>
<div style="left:1345px;width:2px;top:872px;height:350px;background:linear-gradient(rgba(23,2,37,0) 0px,#1d032c 40px,#240433 75px,#33063e 108px,#7f002f 138px,#8c002b 165px,#a10025 190px,#980028 212px,#9d0026 232px,#bd001d 250px,#c3001b 266px,#cf0017 280px,#c6001a 292px,#d70214 302px,#df0411 311px,#fa0907 319px,#ff1c04 326px,#ff6c00 332px,#ff8b00 337px,#ffa600 341px,#ffd50b 344px,#ffea14 347px,#ffff1e 350px)"></div>
<div style="left:1347px;width:2px;top:872px;height:350px;background:linear-gradient(rgba(22,2,35,0) 0px,#1b032b 40px,#220431 75px,#2c053a 108px,#8a002c 138px,#91002a 165px,#9d0026 190px,#c5001a 212px,#c3001b 232px,#d10116 250px,#c0001c 266px,#d40115 280px,#d70214 292px,#e10410 302px,#f60808 311px,#ff2304 319px,#ff3e02 326px,#ff8800 332px,#ffba00 337px,#ffdc0e 341px,#ffd50b 344px,#ffea14 347px,#ffff1e 350px)"></div>
<div style="left:1349px;width:2px;top:872px;height:350px;background:linear-gradient(rgba(21,2,34,0) 0px,#1a032a 40px,#200430 75px,#270536 108px,#750032 138px,#91002a 165px,#940029 190px,#a20025 212px,#a40024 232px,#b9001e 250px,#aa0022 266px,#c90019 280px,#c4001b 292px,#c6001a 302px,#db0313 311px,#f60808 319px,#ff2503 326px,#ff4302 332px,#ff8f00 337px,#ffbb00 341px,#ffd50b 344px,#ffea14 347px,#ffff1e 350px)"></div>
<div style="left:1351px;width:2px;top:872px;height:350px;background:linear-gradient(rgba(20,2,33,0) 0px,#190328 40px,#1f042e 75px,#260535 108px,#4b033a 138px,#770031 165px,#8e002a 190px,#8d002b 212px,#9f0026 232px,#ac0022 250px,#c1001c 266px,#c7001a 280px,#ae0021 292px,#b9001e 302px,#dc0312 311px,#ff1504 319px,#ff4602 326px,#ff5e00 332px,#ff6b00 337px,#ff8d00 341px,#ffd50b 344px,#ffea14 347px,#ffff1e 350px)"></div>
<div style="left:1353px;width:2px;top:912px;height:310px;background:linear-gradient(rgba(24,3,38,0) 0px,#1d032d 35px,#240433 68px,#32063e 98px,#940029 125px,#a00025 150px,#8c002b 172px,#ae0021 192px,#9d0026 210px,#b6001f 226px,#ce0018 240px,#be001c 252px,#ce0018 262px,#e10410 271px,#ff2503 279px,#ff3003 286px,#ff6600 292px,#ff6c00 297px,#ffca05 301px,#ffd50b 304px,#ffea14 307px,#ffff1e 310px)"></div>
<div style="left:1355px;width:2px;top:912px;height:310px;background:linear-gradient(rgba(23,2,37,0) 0px,#1c032c 35px,#220431 68px,#270536 98px,#7c0030 125px,#88002c 150px,#990027 172px,#87002d 192px,#aa0022 210px,#b00021 226px,#9b0027 240px,#aa0022 252px,#cb0019 262px,#dc0312 271px,#ff1904 279px,#ff4302 286px,#ff4602 292px,#ff8100 297px,#ff9800 301px,#ffd50b 304px,#ffea14 307px,#ffff1e 310px)"></div>
<div style="left:1357px;width:2px;top:912px;height:310px;background:linear-gradient(rgba(22,2,35,0) 0px,#1a032a 35px,#200430 68px,#270535 98px,#730032 125px,#90002a 150px,#7b0030 172px,#9a0027 192px,#a00025 210px,#ad0021 226px,#b4001f 240px,#a00025 252px,#d60215 262px,#ed060c 271px,#ff2004 279px,#ff3703 286px,#ff6d00 292px,#ffc101 297px,#ffbc00 301px,#ffd50b 304px,#ffea14 307px,#ffff1e 310px)"></div>
<div style="left:1359px;width:2px;top:912px;height:310px;background:linear-gradient(rgba(21,2,34,0) 0px,#190329 35px,#1f042e 68px,#250434 98px,#47043a 125px,#720033 150px,#780031 172px,#930029 192px,#940029 210px,#a60024 226px,#a20025 240px,#aa0022 252px,#c90019 262px,#e6050e 271px,#ff3703 279px,#ff4901 286px,#ff5e00 292px,#ff9900 297px,#ffc503 301px,#ffd50b 304px,#ffea14 307px,#ffff1e 310px)"></div>
<div style="left:1361px;width:2px;top:947px;height:275px;background:linear-gradient(rgba(24,3,39,0) 0px,#1d032d 33px,#220431 63px,#2f063d 90px,#780031 115px,#7a0030 137px,#82002e 157px,#82002e 175px,#9b0027 191px,#920029 205px,#a70023 217px,#d80214 227px,#ec060c 236px,#ff2603 244px,#ff3802 251px,#ff4702 257px,#ff8d00 262px,#ff8600 266px,#ffd50b 269px,#ffea14 272px,#ffff1e 275px)"></div>
<div style="left:1363px;width:2px;top:947px;height:275px;background:linear-gradient(rgba(23,3,37,0) 0px,#1c032c 33px,#220431 63px,#290537 90px,#84002e 115px,#940029 137px,#9d0026 157px,#88002c 175px,#a80023 191px,#b8001e 205px,#a60023 217px,#cf0017 227px,#e9060d 236px,#fd0a06 244px,#ff3d02 251px,#ff7c00 257px,#ff6d00 262px,#ffa400 266px,#ffd50b 269px,#ffea14 272px,#ffff1e 275px)"></div>
<div style="left:1365px;width:2px;top:947px;height:275px;background:linear-gradient(rgba(22,2,36,0) 0px,#1b032b 33px,#200430 63px,#260535 90px,#88002c 115px,#8a002c 137px,#990027 157px,#930029 175px,#b30020 191px,#c6001a 205px,#cc0018 217px,#cb0018 227px,#e5050f 236px,#ff2703 244px,#ff4b01 251px,#ff9000 257px,#ff9900 262px,#ffb500 266px,#ffd50b 269px,#ffea14 272px,#ffff1e 275px)"></div>
<div style="left:1367px;width:2px;top:947px;height:275px;background:linear-gradient(rgba(21,2,35,0) 0px,#190329 33px,#1f042e 63px,#250534 90px,#540238 115px,#9a0027 137px,#970028 157px,#af0021 175px,#9d0026 191px,#c90019 205px,#b10020 217px,#de0312 227px,#f2070a 236px,#ff3203 244px,#ff4302 251px,#ff6400 257px,#ffbc00 262px,#ff9d00 266px,#ffd50b 269px,#ffea14 272px,#ffff1e 275px)"></div>
<div style="left:1369px;width:2px;top:947px;height:275px;background:linear-gradient(rgba(20,2,33,0) 0px,#180327 33px,#1d032d 63px,#230432 90px,#33063e 115px,#87002d 137px,#8f002a 157px,#ae0021 175px,#ad0021 191px,#b00021 205px,#c7001a 217px,#d40116 227px,#ee070c 236px,#ff0c05 244px,#ff5001 251px,#ff5901 257px,#ffa700 262px,#ffa300 266px,#ffd50b 269px,#ffea14 272px,#ffff1e 275px)"></div>
<div style="left:1371px;width:2px;top:980px;height:242px;background:linear-gradient(rgba(23,3,38,0) 0px,#1c032c 30px,#210430 57px,#290537 82px,#9c0027 104px,#b4001f 124px,#be001d 142px,#b4001f 158px,#ba001d 172px,#d80214 184px,#de0312 194px,#ea060d 203px,#ff2703 211px,#ff3b02 218px,#ff6e00 224px,#ff8000 229px,#ffd30a 233px,#ffd50b 236px,#ffea14 239px,#ffff1e 242px)"></div>
<div style="left:1373px;width:2px;top:980px;height:242px;background:linear-gradient(rgba(22,2,36,0) 0px,#1b032a 30px,#1f042f 57px,#240433 82px,#8b002c 104px,#a50024 124px,#a90023 142px,#c5001a 158px,#ca0019 172px,#de0312 184px,#e10410 194px,#ff0f05 203px,#ff1a04 211px,#ff4c01 218px,#ff8100 224px,#ff8a00 229px,#ffd60b 233px,#ffd50b 236px,#ffea14 239px,#ffff1e 242px)"></div>
<div style="left:1375px;width:2px;top:980px;height:242px;background:linear-gradient(rgba(21,2,35,0) 0px,#190329 30px,#1e042d 57px,#230432 82px,#40043b 104px,#970028 124px,#9b0027 142px,#a70023 158px,#9a0027 172px,#c4001b 184px,#d50215 194px,#e6050f 203px,#ff0c05 211px,#ff1b04 218px,#ff5801 224px,#ff9e00 229px,#ff8f00 233px,#ffd50b 236px,#ffea14 239px,#ffff1e 242px)"></div>
<div style="left:1377px;width:2px;top:980px;height:242px;background:linear-gradient(rgba(21,2,34,0) 0px,#180327 30px,#1c032c 57px,#210431 82px,#2c063b 104px,#980028 124px,#a30024 142px,#9b0027 158px,#a00025 172px,#bf001c 184px,#d60214 194px,#ef070b 203px,#ff1604 211px,#ff3303 218px,#ff6300 224px,#ffbb00 229px,#ffd60b 233px,#ffd50b 236px,#ffea14 239px,#ffff1e 242px)"></div>
<div style="left:1379px;width:2px;top:1010px;height:212px;background:linear-gradient(rgba(23,3,38,0) 0px,#1b032b 27px,#20042f 52px,#230432 74px,#81002e 94px,#81002e 112px,#920029 128px,#a00025 142px,#ac0022 154px,#cd0018 164px,#df0411 173px,#ff0a05 181px,#ff4302 188px,#ff6900 194px,#ff9400 199px,#ff8c00 203px,#ffd50b 206px,#ffea14 209px,#ffff1e 212px)"></div>
<div style="left:1381px;width:2px;top:1010px;height:212px;background:linear-gradient(rgba(22,2,36,0) 0px,#1a032a 27px,#1e042e 52px,#230432 74px,#500339 94px,#89002c 112px,#80002f 128px,#a70023 142px,#a00025 154px,#bf001c 164px,#f50809 173px,#fe0a05 181px,#ff2803 188px,#ff6200 194px,#ff8400 199px,#ffb700 203px,#ffd50b 206px,#ffea14 209px,#ffff1e 212px)"></div>
<div style="left:1383px;width:2px;top:1010px;height:212px;background:linear-gradient(rgba(21,2,35,0) 0px,#190328 27px,#1d032d 52px,#210431 74px,#39053d 94px,#83002e 112px,#9e0026 128px,#990027 142px,#c1001c 154px,#c6001a 164px,#ec060c 173px,#ff0b05 181px,#ff3003 188px,#ff5101 194px,#ff7500 199px,#ffc905 203px,#ffd50b 206px,#ffea14 209px,#ffff1e 212px)"></div>
<div style="left:1385px;width:2px;top:1037px;height:185px;background:linear-gradient(rgba(24,3,39,0) 0px,#1c032b 25px,#20042f 47px,#260535 67px,#80002f 85px,#8d002b 101px,#8e002b 115px,#950029 127px,#d10117 137px,#e5050f 146px,#f90907 154px,#ff4702 161px,#ff5001 167px,#ff6300 172px,#ff7e00 176px,#ffd50b 179px,#ffea14 182px,#ffff1e 185px)"></div>
<div style="left:1387px;width:2px;top:1037px;height:185px;background:linear-gradient(rgba(23,2,37,0) 0px,#1a032a 25px,#1e042e 47px,#220431 67px,#710033 85px,#950029 101px,#9e0026 115px,#be001c 127px,#d70214 137px,#f80908 146px,#ff2a03 154px,#ff5801 161px,#ff5401 167px,#ff7100 172px,#ffcc06 176px,#ffd50b 179px,#ffea14 182px,#ffff1e 185px)"></div>
<div style="left:1389px;width:2px;top:1037px;height:185px;background:linear-gradient(rgba(22,2,36,0) 0px,#190329 25px,#1d032c 47px,#210430 67px,#46043a 85px,#a10025 101px,#b10020 115px,#a40024 127px,#d30116 137px,#ea060d 146px,#ff0d05 154px,#ff2e03 161px,#ff5701 167px,#ffae00 172px,#ff8900 176px,#ffd50b 179px,#ffea14 182px,#ffff1e 185px)"></div>
<div style="left:1391px;width:2px;top:1062px;height:160px;background:linear-gradient(rgba(24,3,39,0) 0px,#1b032b 22px,#1f042f 42px,#2c053a 60px,#920029 76px,#b9001e 90px,#c2001b 102px,#db0313 112px,#ed060c 121px,#ff2204 129px,#ff3902 136px,#ff6200 142px,#ffa200 147px,#ffc503 151px,#ffd50b 154px,#ffea14 157px,#ffff1e 160px)"></div>
<div style="left:1393px;width:2px;top:1062px;height:160px;background:linear-gradient(rgba(23,3,38,0) 0px,#1a032a 22px,#1e032d 42px,#230432 60px,#7f002f 76px,#9a0027 90px,#a90023 102px,#cf0017 112px,#e00411 121px,#fa0907 129px,#ff5501 136px,#ff4f01 142px,#ff7200 147px,#ffb400 151px,#ffd50b 154px,#ffea14 157px,#ffff1e 160px)"></div>
<div style="left:1395px;width:2px;top:1062px;height:160px;background:linear-gradient(rgba(22,2,36,0) 0px,#190329 22px,#1c032c 42px,#20042f 60px,#49043a 76px,#9a0027 90px,#ad0021 102px,#d40115 112px,#f50809 121px,#ff2004 129px,#ff6200 136px,#ff6a00 142px,#ff8c00 147px,#ffb100 151px,#ffd50b 154px,#ffea14 157px,#ffff1e 160px)"></div>
<div style="left:1397px;width:2px;top:1084px;height:138px;background:linear-gradient(rgba(24,3,39,0) 0px,#1b032b 20px,#1e042e 38px,#2a0538 54px,#960028 68px,#a20025 80px,#be001c 90px,#ef070b 99px,#ff2204 107px,#ff1f04 114px,#ff6000 120px,#ff5f00 125px,#ffa900 129px,#ffd50b 132px,#ffea14 135px,#ffff1e 138px)"></div>
<div style="left:1399px;width:2px;top:1084px;height:138px;background:linear-gradient(rgba(23,3,37,0) 0px,#1a032a 20px,#1d032d 38px,#220431 54px,#6b0034 68px,#b8001e 80px,#c6001a 90px,#f80908 99px,#ff2004 107px,#ff4c01 114px,#ff5201 120px,#ffaf00 125px,#ffc704 129px,#ffd50b 132px,#ffea14 135px,#ffff1e 138px)"></div>
<div style="left:1401px;width:2px;top:1084px;height:138px;background:linear-gradient(rgba(22,2,36,0) 0px,#190328 20px,#1b032b 38px,#1e042e 54px,#37053d 68px,#b30020 80px,#d90213 90px,#ec060c 99px,#ff1904 107px,#ff4402 114px,#ff7c00 120px,#ff6d00 125px,#ff8600 129px,#ffd40a 132px,#ffe814 135px,#fffe1d 138px)"></div>
<div style="left:1403px;width:2px;top:1104px;height:118px;background:linear-gradient(rgba(24,3,38,0) 0px,#1a032a 18px,#1d032d 34px,#280537 48px,#9f0026 60px,#de0312 70px,#fd0a06 79px,#ff0c05 87px,#ff3103 94px,#ff5c00 100px,#ff9800 105px,#ffcb06 109px,#ffd109 112px,#ffe612 115px,#fffb1c 118px)"></div>
<div style="left:1405px;width:2px;top:1104px;height:118px;background:linear-gradient(rgba(23,2,37,0) 0px,#190328 18px,#1c032c 34px,#210430 48px,#580238 60px,#bc001d 70px,#e00411 79px,#f40809 87px,#ff4c01 94px,#ff6700 100px,#ff9800 105px,#ff8100 109px,#ffcf08 112px,#ffe311 115px,#fff81b 118px)"></div>
<div style="left:1407px;width:2px;top:1122px;height:100px;background:linear-gradient(rgba(24,3,39,0) 0px,#1a032a 16px,#1d032d 30px,#38053d 42px,#d50215 52px,#f70808 61px,#ff2f03 69px,#ff5201 76px,#ff7300 82px,#ff9a00 87px,#ff9100 91px,#ffcc06 94px,#ffe010 97px,#fff519 100px)"></div>
<div style="left:1409px;width:2px;top:1122px;height:100px;background:linear-gradient(rgba(23,2,37,0) 0px,#190329 16px,#1c032c 30px,#290537 42px,#a60024 52px,#f3080a 61px,#ff2c03 69px,#ff3a02 76px,#ff8400 82px,#ff8300 87px,#ffd008 91px,#ffc905 94px,#ffdd0e 97px,#fff218 100px)"></div>
<div style="left:1411px;width:2px;top:1138px;height:84px;background:linear-gradient(rgba(24,3,39,0) 0px,#1a032a 14px,#210430 26px,#5a0237 36px,#fa0907 45px,#ff1504 53px,#ff3103 60px,#ff7200 66px,#ff9700 71px,#ffce08 75px,#ffc704 78px,#ffda0d 81px,#ffef17 84px)"></div>
<div style="left:1413px;width:2px;top:1138px;height:84px;background:linear-gradient(rgba(23,2,37,0) 0px,#190329 14px,#1c032c 26px,#2e063c 36px,#e7050e 45px,#ff2104 53px,#ff4302 60px,#ff6e00 66px,#ff8600 71px,#ff8d00 75px,#ffc403 78px,#ffd80c 81px,#ffec15 84px)"></div>
<div style="left:1415px;width:2px;top:1152px;height:70px;background:linear-gradient(rgba(24,3,39,0) 0px,#1b032b 12px,#270536 22px,#80002f 31px,#f1070a 39px,#ff4402 46px,#ff6900 52px,#ff8a00 57px,#ff8300 61px,#ffc101 64px,#ffd50a 67px,#ffe914 70px)"></div>
<div style="left:1417px;width:2px;top:1152px;height:70px;background:linear-gradient(rgba(23,2,37,0) 0px,#1a0329 12px,#200430 22px,#45043b 31px,#f70808 39px,#ff3d02 46px,#ff4c01 52px,#ff5a01 57px,#ffbe00 61px,#ffbe00 64px,#ffd209 67px,#ffe613 70px)"></div>
<div style="left:1419px;width:2px;top:1152px;height:70px;background:linear-gradient(rgba(22,2,36,0) 0px,#180327 12px,#1c032c 22px,#2c053a 31px,#aa0022 39px,#ff4702 46px,#ff4d01 52px,#ff6700 57px,#ff8200 61px,#ffbb00 64px,#ffcf08 67px,#ffe311 70px)"></div>
<div style="left:1421px;width:2px;top:1164px;height:58px;background:linear-gradient(rgba(23,3,37,0) 0px,#1a032a 10px,#240433 19px,#630136 27px,#ff3c02 34px,#ff6e00 40px,#ff9a00 45px,#ffb500 49px,#ffb700 52px,#ffcc07 55px,#ffe010 58px)"></div>
<div style="left:1423px;width:2px;top:1164px;height:58px;background:linear-gradient(rgba(22,2,36,0) 0px,#190329 10px,#200430 19px,#3e053c 27px,#e4050f 34px,#ff3303 40px,#ff7000 45px,#ff9200 49px,#ffb300 52px,#ffc905 55px,#ffdd0e 58px)"></div>
<div style="left:1425px;width:2px;top:1174px;height:48px;background:linear-gradient(rgba(24,3,39,0) 0px,#1d032c 9px,#2f063d 17px,#a20025 24px,#ff5401 30px,#ff7400 35px,#ff7900 39px,#ffb000 42px,#ffc704 45px,#ffda0d 48px)"></div>
<div style="left:1427px;width:2px;top:1174px;height:48px;background:linear-gradient(rgba(23,2,37,0) 0px,#1b032b 9px,#270536 17px,#4e0339 24px,#f90907 30px,#ff4002 35px,#ff5e00 39px,#ffac00 42px,#ffc403 45px,#ffd80c 48px)"></div>
<div style="left:1429px;width:2px;top:1174px;height:48px;background:linear-gradient(rgba(21,2,35,0) 0px,#1a032a 9px,#270535 17px,#520338 24px,#cb0019 30px,#ff5b01 35px,#ff9100 39px,#ffa800 42px,#ffc101 45px,#ffd50a 48px)"></div>
<div style="left:1431px;width:2px;top:1174px;height:48px;background:linear-gradient(rgba(20,2,32,0) 0px,#180327 9px,#220431 17px,#40043b 24px,#84002d 30px,#ff1005 35px,#ff7600 39px,#ffa400 42px,#ffbe00 45px,#ffd209 48px)"></div>
<div style="left:1433px;width:2px;top:1183px;height:39px;background:linear-gradient(rgba(23,2,37,0) 0px,#220431 8px,#38053d 15px,#86002d 21px,#e10411 26px,#ff7b00 30px,#ffa100 33px,#ffba00 36px,#ffcf08 39px)"></div>
<div style="left:1435px;width:2px;top:1183px;height:39px;background:linear-gradient(rgba(21,2,34,0) 0px,#200430 8px,#2f063d 15px,#6a0035 21px,#b6001f 26px,#ff7400 30px,#ff9d00 33px,#ffb600 36px,#ffcc06 39px)"></div>
<div style="left:1437px;width:2px;top:1183px;height:39px;background:linear-gradient(rgba(20,2,33,0) 0px,#1f042f 8px,#2d063c 15px,#710033 21px,#d20116 26px,#ff3303 30px,#ff9900 33px,#ffb300 36px,#ffc905 39px)"></div>
<div style="left:1439px;width:2px;top:1183px;height:39px;background:linear-gradient(rgba(21,2,34,0) 0px,#200430 8px,#2f063d 15px,#680135 21px,#ec060c 26px,#ff3603 30px,#ff8300 33px,#ff9b00 36px,#ffb500 39px)"></div>
<div style="left:1441px;width:2px;top:1183px;height:39px;background:linear-gradient(rgba(20,2,32,0) 0px,#1e042e 8px,#2c063b 15px,#570238 21px,#c2001b 26px,#ff2f03 30px,#ff6c00 33px,#ff8400 36px,#ff9c00 39px)"></div>
<div style="left:1443px;width:2px;top:1183px;height:39px;background:linear-gradient(rgba(19,2,31,0) 0px,#1d032c 8px,#2a0538 15px,#550238 21px,#bb001d 26px,#ff2803 30px,#ff5801 33px,#ff6c00 36px,#ff8400 39px)"></div>
<div style="left:1445px;width:2px;top:1183px;height:39px;background:linear-gradient(rgba(18,2,30,0) 0px,#1b032b 8px,#280537 15px,#4b033a 21px,#a60023 26px,#ff1a04 30px,#ff4402 33px,#ff5701 36px,#ff6b00 39px)"></div>
<div style="left:1447px;width:2px;top:1183px;height:39px;background:linear-gradient(rgba(18,2,30,0) 0px,#190329 8px,#280537 15px,#40043b 21px,#81002e 26px,#ff2304 30px,#ff3103 33px,#ff4302 36px,#ff5501 39px)"></div>
<div style="left:1449px;width:2px;top:1191px;height:31px;background:linear-gradient(rgba(24,3,39,0) 0px,#230433 7px,#35063d 13px,#680135 18px,#d80214 22px,#ff1e04 25px,#ff2f03 28px,#ff4102 31px)"></div>
<div style="left:1451px;width:2px;top:1191px;height:31px;background:linear-gradient(rgba(23,2,37,0) 0px,#230432 7px,#31063e 13px,#680135 18px,#d00117 22px,#ff0a05 25px,#ff1b04 28px,#ff2c03 31px)"></div>
<div style="left:1453px;width:2px;top:1191px;height:31px;background:linear-gradient(rgba(22,2,35,0) 0px,#210430 7px,#2f063d 13px,#580238 18px,#c1001c 22px,#f3080a 25px,#fd0a06 28px,#ff1704 31px)"></div>
<div style="left:1455px;width:2px;top:1191px;height:31px;background:linear-gradient(rgba(21,2,34,0) 0px,#1f042e 7px,#2a0539 13px,#4f0339 18px,#9f0026 22px,#e6050e 25px,#f0070b 28px,#fa0907 31px)"></div>
<div style="left:1457px;width:2px;top:1191px;height:31px;background:linear-gradient(rgba(19,2,32,0) 0px,#1d032d 7px,#2c053a 13px,#4a033a 18px,#7c0030 22px,#b6001f 25px,#cf0017 28px,#f70808 31px)"></div>
<div style="left:1459px;width:2px;top:1191px;height:31px;background:linear-gradient(rgba(19,2,31,0) 0px,#1b032b 7px,#280537 13px,#41043b 18px,#650135 22px,#ac0022 25px,#c5001a 28px,#f70808 31px)"></div>
<div style="left:1461px;width:2px;top:1191px;height:31px;background:linear-gradient(rgba(19,2,31,0) 0px,#190329 7px,#250534 13px,#40043b 18px,#6d0034 22px,#9b0027 25px,#b5001f 28px,#f70808 31px)"></div>
<div style="left:1463px;width:2px;top:1198px;height:24px;background:linear-gradient(rgba(23,3,38,0) 0px,#220431 6px,#2c053a 11px,#560238 15px,#81002e 18px,#a20025 21px,#f70808 24px)"></div>
<div style="left:1465px;width:2px;top:1198px;height:24px;background:linear-gradient(rgba(21,2,35,0) 0px,#1f042f 6px,#2c053a 11px,#45043b 15px,#6c0034 18px,#91002a 21px,#f70808 24px)"></div>
<div style="left:1467px;width:2px;top:1198px;height:24px;background:linear-gradient(rgba(20,2,33,0) 0px,#1d032d 6px,#290538 11px,#3c053c 15px,#630136 18px,#89002c 21px,#f70808 24px)"></div>
<div style="left:1469px;width:2px;top:1198px;height:24px;background:linear-gradient(rgba(19,2,31,0) 0px,#1c032b 6px,#260535 11px,#3a053c 15px,#5d0237 18px,#86002d 21px,#f70808 24px)"></div>
<div style="left:1471px;width:2px;top:1198px;height:24px;background:linear-gradient(rgba(19,2,31,0) 0px,#1a032a 6px,#240433 11px,#33063e 15px,#560238 18px,#84002e 21px,#f70808 24px)"></div>
<div style="left:1473px;width:2px;top:1198px;height:24px;background:linear-gradient(rgba(19,2,31,0) 0px,#190328 6px,#210431 11px,#2f063d 15px,#520339 18px,#83002e 21px,#f70808 24px)"></div>
<div style="left:1475px;width:2px;top:1204px;height:18px;background:linear-gradient(rgba(20,2,32,0) 0px,#190328 5px,#280536 9px,#3f053c 12px,#83002e 15px,#f70808 18px)"></div>
<div style="left:1477px;width:2px;top:1204px;height:18px;background:linear-gradient(rgba(20,2,32,0) 0px,#190328 5px,#240433 9px,#3f053c 12px,#83002e 15px,#f70808 18px)"></div>
<div style="left:1479px;width:2px;top:1204px;height:18px;background:linear-gradient(rgba(20,2,32,0) 0px,#190328 5px,#230433 9px,#3f053c 12px,#83002e 15px,#f70808 18px)"></div>
<div style="left:1481px;width:2px;top:1204px;height:18px;background:linear-gradient(rgba(20,2,32,0) 0px,#190328 5px,#240433 9px,#3f053c 12px,#83002e 15px,#f70808 18px)"></div>
<div style="left:1483px;width:2px;top:1204px;height:18px;background:linear-gradient(rgba(20,2,32,0) 0px,#190328 5px,#270536 9px,#3f053c 12px,#83002e 15px,#f70808 18px)"></div>
<div style="left:1485px;width:2px;top:1204px;height:18px;background:linear-gradient(rgba(20,2,32,0) 0px,#190328 5px,#270536 9px,#3f053c 12px,#83002e 15px,#f70808 18px)"></div>
<div style="left:1487px;width:2px;top:1204px;height:18px;background:linear-gradient(rgba(20,2,32,0) 0px,#190328 5px,#270536 9px,#3f053c 12px,#83002e 15px,#f70808 18px)"></div>
<div style="left:1489px;width:2px;top:1204px;height:18px;background:linear-gradient(rgba(20,2,32,0) 0px,#190328 5px,#260535 9px,#3f053c 12px,#83002e 15px,#f70808 18px)"></div>
<div style="left:1491px;width:2px;top:1204px;height:18px;background:linear-gradient(rgba(20,2,32,0) 0px,#190328 5px,#230432 9px,#3f053c 12px,#83002e 15px,#f70808 18px)"></div>
<div style="left:1493px;width:2px;top:1204px;height:18px;background:linear-gradient(rgba(20,2,32,0) 0px,#190328 5px,#250434 9px,#3f053c 12px,#83002e 15px,#f70808 18px)"></div>
<div style="left:1495px;width:2px;top:1204px;height:18px;background:linear-gradient(rgba(20,2,32,0) 0px,#190328 5px,#250534 9px,#3f053c 12px,#83002e 15px,#f70808 18px)"></div>
<div style="left:1497px;width:2px;top:1204px;height:18px;background:linear-gradient(rgba(20,2,32,0) 0px,#190328 5px,#240433 9px,#3f053c 12px,#83002e 15px,#f70808 18px)"></div>
<div style="left:1499px;width:2px;top:912px;height:310px;background:linear-gradient(rgba(24,3,39,0) 0px,#190328 35px,#190329 68px,#1a032a 98px,#1b032b 125px,#1c032c 150px,#1c032c 172px,#1d032d 192px,#1d032d 210px,#1e042e 226px,#1e042e 240px,#1f042e 252px,#1f042f 262px,#20042f 271px,#200430 279px,#210430 286px,#220431 292px,#220432 297px,#230432 301px,#3f053c 304px,#83002e 307px,#f70808 310px)"></div>
<div style="left:1501px;width:2px;top:777px;height:445px;background:linear-gradient(rgba(22,2,36,0) 0px,#1e042e 50px,#33063e 95px,#89002c 135px,#90002a 170px,#a80023 203px,#a80023 233px,#b7001f 260px,#c4001b 285px,#cf0017 307px,#d20116 327px,#d90214 345px,#e00411 361px,#ee070b 375px,#fe0a05 387px,#ff1804 397px,#f3080a 406px,#ff1704 414px,#ff1105 421px,#ff1804 427px,#ff4d01 432px,#ff4b01 436px,#ff6b00 439px,#ff8200 442px,#ff9b00 445px)"></div>
<div style="left:1503px;width:2px;top:777px;height:445px;background:linear-gradient(rgba(22,2,36,0) 0px,#1f042e 50px,#280537 95px,#c6001a 135px,#d10117 170px,#d00117 203px,#d70214 233px,#e9060d 260px,#ff0e05 285px,#f40809 307px,#ff1504 327px,#ff1304 345px,#ff2e03 361px,#ff3d02 375px,#ff4e01 387px,#ff5201 397px,#ff4a01 406px,#ff4102 414px,#ff4c01 421px,#ff8400 427px,#ffad00 432px,#ffbb00 436px,#ffd50b 439px,#ffea14 442px,#ffff1e 445px)"></div>
<div style="left:1505px;width:2px;top:777px;height:445px;background:linear-gradient(rgba(20,2,33,0) 0px,#1c032b 50px,#240433 95px,#500339 135px,#b6001f 170px,#b4001f 203px,#c0001c 233px,#c1001b 260px,#d20116 285px,#d80214 307px,#ed060c 327px,#e6050f 345px,#ee070b 361px,#ed060c 375px,#ff0b05 387px,#f3080a 397px,#ff1604 406px,#ff2703 414px,#ff2803 421px,#ff5901 427px,#ff7100 432px,#ffa400 436px,#ffd50b 439px,#ffea14 442px,#ffff1e 445px)"></div>
<div style="left:1507px;width:2px;top:777px;height:445px;background:linear-gradient(rgba(19,2,31,0) 0px,#190329 50px,#220431 95px,#2e063d 135px,#9d0026 170px,#950029 203px,#c2001b 233px,#af0021 260px,#d10116 285px,#d80214 307px,#de0312 327px,#e00411 345px,#ec060c 361px,#e00411 375px,#e20410 387px,#fd0a06 397px,#f0070b 406px,#fb0907 414px,#ff4902 421px,#ff5601 427px,#ff8a00 432px,#ffa900 436px,#ffd50b 439px,#ffea14 442px,#ffff1e 445px)"></div>
<div style="left:1509px;width:2px;top:827px;height:395px;background:linear-gradient(rgba(23,3,37,0) 0px,#1f042e 45px,#290538 85px,#720033 120px,#920029 153px,#ac0022 183px,#a30024 210px,#b30020 235px,#b9001e 257px,#be001d 277px,#ca0019 295px,#d70214 311px,#d70214 325px,#ce0018 337px,#db0313 347px,#fb0906 356px,#ff1904 364px,#ff4802 371px,#ff5101 377px,#ff8500 382px,#ffb100 386px,#ffd50b 389px,#ffea14 392px,#ffff1e 395px)"></div>
<div style="left:1511px;width:2px;top:827px;height:395px;background:linear-gradient(rgba(21,2,35,0) 0px,#1c032c 45px,#250434 85px,#37053d 120px,#87002d 153px,#960028 183px,#9c0027 210px,#9c0026 235px,#b10020 257px,#ae0021 277px,#ba001e 295px,#bf001c 311px,#c2001b 325px,#da0313 337px,#ce0018 347px,#f50809 356px,#ff1f04 364px,#ff3503 371px,#ff5601 377px,#ff8e00 382px,#ff9000 386px,#ffd50b 389px,#ffea14 392px,#ffff1e 395px)"></div>
<div style="left:1513px;width:2px;top:827px;height:395px;background:linear-gradient(rgba(20,2,33,0) 0px,#1a032a 45px,#220431 85px,#2c053a 120px,#87002d 153px,#8c002b 183px,#960028 210px,#930029 235px,#bd001d 257px,#c1001c 277px,#cd0018 295px,#c7001a 311px,#d70214 325px,#cf0017 337px,#d00117 347px,#f70808 356px,#fb0906 364px,#ff3d02 371px,#ff5901 377px,#ff8a00 382px,#ffcb06 386px,#ffd50b 389px,#ffea14 392px,#ffff1e 395px)"></div>
<div style="left:1515px;width:2px;top:872px;height:350px;background:linear-gradient(rgba(24,3,39,0) 0px,#1f042f 40px,#270536 75px,#7e002f 108px,#89002c 138px,#a20025 165px,#ab0022 190px,#b30020 212px,#b5001f 232px,#bc001d 250px,#b30020 266px,#ba001e 280px,#db0313 292px,#dc0312 302px,#f70808 311px,#ff2e03 319px,#ff4901 326px,#ff7c00 332px,#ff7900 337px,#ffd209 341px,#ffd50b 344px,#ffea14 347px,#ffff1e 350px)"></div>
<div style="left:1517px;width:2px;top:872px;height:350px;background:linear-gradient(rgba(22,2,36,0) 0px,#1d032d 40px,#230433 75px,#3f053c 108px,#92002a 138px,#91002a 165px,#a80023 190px,#ba001e 212px,#b30020 232px,#b9001e 250px,#d10117 266px,#cf0017 280px,#d60215 292px,#d80214 302px,#f0070b 311px,#ff2903 319px,#ff2d03 326px,#ff5e00 332px,#ffbf01 337px,#ffbb00 341px,#ffd50b 344px,#ffea14 347px,#ffff1e 350px)"></div>
<div style="left:1519px;width:2px;top:872px;height:350px;background:linear-gradient(rgba(21,2,34,0) 0px,#1b032b 40px,#220431 75px,#280537 108px,#85002d 138px,#91002a 165px,#980028 190px,#a90023 212px,#a70023 232px,#c1001b 250px,#c5001a 266px,#be001c 280px,#c7001a 292px,#df0411 302px,#ec060c 311px,#ff1604 319px,#ff2b03 326px,#ff5301 332px,#ff7400 337px,#ff9900 341px,#ffd50b 344px,#ffea14 347px,#ffff1e 350px)"></div>
<div style="left:1521px;width:2px;top:872px;height:350px;background:linear-gradient(rgba(20,2,32,0) 0px,#190328 40px,#1f042f 75px,#240433 108px,#780031 138px,#8a002c 165px,#9c0026 190px,#a70023 212px,#ab0022 232px,#b00020 250px,#b4001f 266px,#bb001d 280px,#d60214 292px,#e00411 302px,#ea060d 311px,#ff1c04 319px,#ff4901 326px,#ff6100 332px,#ff5f00 337px,#ffa000 341px,#ffd50b 344px,#ffea14 347px,#ffff1e 350px)"></div>
<div style="left:1523px;width:2px;top:912px;height:310px;background:linear-gradient(rgba(23,3,38,0) 0px,#1d032d 35px,#250434 68px,#4a043a 98px,#a90023 125px,#a00025 150px,#b20020 172px,#bc001d 192px,#be001c 210px,#c4001b 226px,#d40116 240px,#de0312 252px,#eb060d 262px,#eb060d 271px,#ff3003 279px,#ff6000 286px,#ff8400 292px,#ff9500 297px,#ffa200 301px,#ffd50b 304px,#ffea14 307px,#ffff1e 310px)"></div>
<div style="left:1525px;width:2px;top:912px;height:310px;background:linear-gradient(rgba(22,2,35,0) 0px,#1b032b 35px,#220431 68px,#270536 98px,#7f002f 125px,#970028 150px,#91002a 172px,#940029 192px,#ae0021 210px,#bb001d 226px,#b7001f 240px,#b20020 252px,#cf0017 262px,#dc0312 271px,#f80908 279px,#ff4002 286px,#ff6000 292px,#ff9300 297px,#ffbd00 301px,#ffd50b 304px,#ffea14 307px,#ffff1e 310px)"></div>
<div style="left:1527px;width:2px;top:912px;height:310px;background:linear-gradient(rgba(20,2,33,0) 0px,#190329 35px,#1f042f 68px,#240433 98px,#670135 125px,#7e002f 150px,#8a002c 172px,#89002c 192px,#9a0027 210px,#920029 226px,#9f0025 240px,#ba001d 252px,#d80214 262px,#ef070b 271px,#ff2404 279px,#ff1e04 286px,#ff5e00 292px,#ff6900 297px,#ff8900 301px,#ffd50b 304px,#ffea14 307px,#ffff1e 310px)"></div>
<div style="left:1529px;width:2px;top:947px;height:275px;background:linear-gradient(rgba(23,3,38,0) 0px,#1d032d 33px,#220431 63px,#30063e 90px,#750032 115px,#8c002b 137px,#960028 157px,#8a002c 175px,#a00025 191px,#920029 205px,#b5001f 217px,#cf0017 227px,#de0312 236px,#f2070a 244px,#ff4202 251px,#ff5b00 257px,#ff6500 262px,#ff8900 266px,#ffd50b 269px,#ffea14 272px,#ffff1e 275px)"></div>
<div style="left:1531px;width:2px;top:947px;height:275px;background:linear-gradient(rgba(22,2,36,0) 0px,#1b032b 33px,#210430 63px,#250434 90px,#6a0035 115px,#740032 137px,#770031 157px,#80002f 175px,#970028 191px,#9f0026 205px,#a90023 217px,#c5001a 227px,#e10410 236px,#ff1205 244px,#ff2004 251px,#ff5a01 257px,#ff9400 262px,#ffbd00 266px,#ffd50b 269px,#ffea14 272px,#ffff1e 275px)"></div>
<div style="left:1533px;width:2px;top:947px;height:275px;background:linear-gradient(rgba(21,2,34,0) 0px,#190329 33px,#1f042e 63px,#230432 90px,#5c0237 115px,#89002c 137px,#89002c 157px,#970028 175px,#a60024 191px,#90002a 205px,#ba001e 217px,#c90019 227px,#e30410 236px,#ff1704 244px,#ff4302 251px,#ff5301 257px,#ff7f00 262px,#ff9f00 266px,#ffd50b 269px,#ffea14 272px,#ffff1e 275px)"></div>
<div style="left:1535px;width:2px;top:980px;height:242px;background:linear-gradient(rgba(23,3,38,0) 0px,#1c032c 30px,#220431 57px,#35063d 82px,#6e0034 104px,#760032 124px,#88002c 142px,#970028 158px,#a40024 172px,#b7001f 184px,#de0312 194px,#ef070b 203px,#ff1305 211px,#ff3e02 218px,#ff5401 224px,#ff9800 229px,#ffbd00 233px,#ffd50b 236px,#ffea14 239px,#ffff1e 242px)"></div>
<div style="left:1537px;width:2px;top:980px;height:242px;background:linear-gradient(rgba(22,2,36,0) 0px,#1a032a 30px,#20042f 57px,#230432 82px,#780031 104px,#770031 124px,#8f002a 142px,#87002d 158px,#990027 172px,#b9001e 184px,#d50215 194px,#e9060d 203px,#ff2404 211px,#ff3103 218px,#ff6400 224px,#ff9400 229px,#ff9400 233px,#ffd50b 236px,#ffea14 239px,#ffff1e 242px)"></div>
<div style="left:1539px;width:2px;top:980px;height:242px;background:linear-gradient(rgba(21,2,34,0) 0px,#190328 30px,#1d032d 57px,#230432 82px,#530338 104px,#990027 124px,#b4001f 142px,#ae0021 158px,#ad0021 172px,#d50215 184px,#de0311 194px,#ea060d 203px,#ff1804 211px,#ff4d01 218px,#ff6c00 224px,#ffa400 229px,#ffa400 233px,#ffd50b 236px,#ffea14 239px,#ffff1e 242px)"></div>
<div style="left:1541px;width:2px;top:1010px;height:212px;background:linear-gradient(rgba(23,3,38,0) 0px,#1b032b 27px,#200430 52px,#2d063b 74px,#82002e 94px,#960028 112px,#b6001f 128px,#c4001b 142px,#ce0018 154px,#c0001c 164px,#f1070a 173px,#ff0a05 181px,#ff2204 188px,#ff4402 194px,#ff9000 199px,#ff9d00 203px,#ffd50b 206px,#ffea14 209px,#ffff1e 212px)"></div>
<div style="left:1543px;width:2px;top:1010px;height:212px;background:linear-gradient(rgba(22,2,35,0) 0px,#1a0329 27px,#1e042e 52px,#230432 74px,#7f002f 94px,#9b0027 112px,#a30024 128px,#b30020 142px,#c0001c 154px,#db0313 164px,#ff0a05 173px,#ff2d03 181px,#ff5101 188px,#ffa000 194px,#ff9a00 199px,#ffc905 203px,#ffd50b 206px,#ffea14 209px,#ffff1e 212px)"></div>
<div style="left:1545px;width:2px;top:1037px;height:185px;background:linear-gradient(rgba(24,3,39,0) 0px,#1c032c 25px,#200430 47px,#39053d 67px,#960028 85px,#ac0022 101px,#ae0021 115px,#c6001a 127px,#c6001a 137px,#e5050f 146px,#ff1d04 154px,#ff5701 161px,#ff8c00 167px,#ffab00 172px,#ffd50b 176px,#ffd50b 179px,#ffea14 182px,#ffff1e 185px)"></div>
<div style="left:1547px;width:2px;top:1037px;height:185px;background:linear-gradient(rgba(22,2,36,0) 0px,#1a032a 25px,#1e042e 47px,#260535 67px,#980028 85px,#a90023 101px,#b10020 115px,#d00117 127px,#df0411 137px,#ff0a05 146px,#ff2e03 154px,#ff3403 161px,#ff9000 167px,#ffb100 172px,#ffc102 176px,#ffd50b 179px,#ffea14 182px,#ffff1e 185px)"></div>
<div style="left:1549px;width:2px;top:1037px;height:185px;background:linear-gradient(rgba(21,2,34,0) 0px,#180327 25px,#1c032c 47px,#20042f 67px,#45043b 85px,#9c0027 101px,#a20025 115px,#b4001f 127px,#d30116 137px,#ea060d 146px,#f70808 154px,#ff3303 161px,#ff7b00 167px,#ff8400 172px,#ffc503 176px,#ffd50b 179px,#ffea14 182px,#ffff1e 185px)"></div>
<div style="left:1551px;width:2px;top:1062px;height:160px;background:linear-gradient(rgba(23,2,37,0) 0px,#1a032a 22px,#1e042d 42px,#260535 60px,#950028 76px,#a80023 90px,#c1001b 102px,#cd0018 112px,#f1070a 121px,#ff2603 129px,#ff5101 136px,#ff7100 142px,#ffb600 147px,#ffba00 151px,#ffd50b 154px,#ffea14 157px,#ffff1e 160px)"></div>
<div style="left:1553px;width:2px;top:1062px;height:160px;background:linear-gradient(rgba(21,2,35,0) 0px,#180327 22px,#1c032b 42px,#1f042f 60px,#45043b 76px,#89002c 90px,#ab0022 102px,#cc0018 112px,#e8050e 121px,#ff1205 129px,#ff2d03 136px,#ff4f01 142px,#ffb200 147px,#ffc101 151px,#ffd50b 154px,#ffea14 157px,#ffff1e 160px)"></div>
<div style="left:1555px;width:2px;top:1084px;height:138px;background:linear-gradient(rgba(23,2,37,0) 0px,#1a0329 20px,#1d032d 38px,#2b0539 54px,#8a002c 68px,#c1001b 80px,#e6050f 90px,#ff0e05 99px,#ff3503 107px,#ff4302 114px,#ff9300 120px,#ff8f00 125px,#ffdf0f 129px,#ffd50b 132px,#ffea14 135px,#ffff1e 138px)"></div>
<div style="left:1557px;width:2px;top:1104px;height:118px;background:linear-gradient(rgba(24,3,39,0) 0px,#1b032b 18px,#1e042e 34px,#4b033a 48px,#a60024 60px,#cf0017 70px,#f50809 79px,#ff0c05 87px,#ff3802 94px,#ff5901 100px,#ff9b00 105px,#ffc102 109px,#ffd209 112px,#ffe612 115px,#fffb1c 118px)"></div>
<div style="left:1559px;width:2px;top:1104px;height:118px;background:linear-gradient(rgba(22,2,36,0) 0px,#190328 18px,#1c032b 34px,#260535 48px,#9f0026 60px,#b4001f 70px,#e7050e 79px,#ff0a05 87px,#ff2503 94px,#ff6700 100px,#ff5101 105px,#ffad00 109px,#ffce07 112px,#ffe210 115px,#fff71a 118px)"></div>
<div style="left:1561px;width:2px;top:1122px;height:100px;background:linear-gradient(rgba(23,3,37,0) 0px,#1a0329 16px,#1d032d 30px,#42043b 42px,#ad0021 52px,#d90214 61px,#f50809 69px,#ff1404 76px,#ff4d01 82px,#ff5a01 87px,#ff7700 91px,#ffc905 94px,#ffdd0e 97px,#fff218 100px)"></div>
<div style="left:1563px;width:2px;top:1138px;height:84px;background:linear-gradient(rgba(24,3,38,0) 0px,#1a032a 14px,#280537 26px,#80002f 36px,#f1070a 45px,#f90907 53px,#ff4702 60px,#ff7900 66px,#ffa700 71px,#ff9200 75px,#ffc503 78px,#ffd90c 81px,#ffed16 84px)"></div>
<div style="left:1565px;width:2px;top:1138px;height:84px;background:linear-gradient(rgba(22,2,36,0) 0px,#180327 14px,#1d032d 26px,#3b053c 36px,#f0070b 45px,#ff1f04 53px,#ff4102 60px,#ff4e01 66px,#ff7900 71px,#ffb900 75px,#ffc101 78px,#ffd40a 81px,#ffe914 84px)"></div>
<div style="left:1567px;width:2px;top:1152px;height:70px;background:linear-gradient(rgba(22,2,36,0) 0px,#190328 12px,#240433 22px,#610136 31px,#ed060c 39px,#ff3503 46px,#ff4b01 52px,#ff6700 57px,#ff9900 61px,#ffbc00 64px,#ffd008 67px,#ffe412 70px)"></div>
<div style="left:1569px;width:2px;top:1164px;height:58px;background:linear-gradient(rgba(23,3,37,0) 0px,#1b032b 10px,#2c063b 19px,#a40024 27px,#fc0906 34px,#ff5a01 40px,#ff7d00 45px,#ff6900 49px,#ffb600 52px,#ffcc06 55px,#ffe010 58px)"></div>
<div style="left:1571px;width:2px;top:1164px;height:58px;background:linear-gradient(rgba(21,2,34,0) 0px,#180327 10px,#220432 19px,#4c033a 27px,#f60808 34px,#ff5001 40px,#ff5b00 45px,#ff7700 49px,#ffb000 52px,#ffc704 55px,#ffdb0d 58px)"></div>
<div style="left:1573px;width:2px;top:1174px;height:48px;background:linear-gradient(rgba(22,2,36,0) 0px,#1b032b 9px,#2a0538 17px,#81002f 24px,#ff5c00 30px,#ff5401 35px,#ff6c00 39px,#ffab00 42px,#ffc302 45px,#ffd70b 48px)"></div>
<div style="left:1575px;width:2px;top:1174px;height:48px;background:linear-gradient(rgba(20,2,33,0) 0px,#190328 9px,#260535 17px,#4a033a 24px,#bf001c 30px,#ff6d00 35px,#ff7700 39px,#ffa500 42px,#ffbf00 45px,#ffd209 48px)"></div>
<div style="left:1577px;width:2px;top:1183px;height:39px;background:linear-gradient(rgba(22,2,35,0) 0px,#210430 8px,#30063e 15px,#750032 21px,#e20410 26px,#ff8600 30px,#ff9f00 33px,#ffb900 36px,#ffcd07 39px)"></div>
<div style="left:1579px;width:2px;top:1183px;height:39px;background:linear-gradient(rgba(20,2,32,0) 0px,#1e042e 8px,#2e063c 15px,#540338 21px,#b8001e 26px,#ff2304 30px,#ff9900 33px,#ffb300 36px,#ffc905 39px)"></div>
<div style="left:1581px;width:2px;top:1183px;height:39px;background:linear-gradient(rgba(20,2,32,0) 0px,#1e042e 8px,#2b0539 15px,#570238 21px,#d40115 26px,#ff5e00 30px,#ff7600 33px,#ff8e00 36px,#ffa700 39px)"></div>
<div style="left:1583px;width:2px;top:1183px;height:39px;background:linear-gradient(rgba(19,2,30,0) 0px,#1c032c 8px,#2c053a 15px,#570238 21px,#a40024 26px,#ff2f03 30px,#ff5501 33px,#ff6a00 36px,#ff8100 39px)"></div>
<div style="left:1585px;width:2px;top:1183px;height:39px;background:linear-gradient(rgba(18,2,30,0) 0px,#1a032a 8px,#260535 15px,#45043b 21px,#88002c 26px,#ff2204 30px,#ff3702 33px,#ff4901 36px,#ff5c00 39px)"></div>
<div style="left:1587px;width:2px;top:1191px;height:31px;background:linear-gradient(rgba(24,3,39,0) 0px,#250534 7px,#36053d 13px,#720033 18px,#df0411 22px,#ff1904 25px,#ff2a03 28px,#ff3c02 31px)"></div>
<div style="left:1589px;width:2px;top:1191px;height:31px;background:linear-gradient(rgba(22,2,36,0) 0px,#210431 7px,#2d063b 13px,#550238 18px,#a70023 22px,#f50809 25px,#ff0b05 28px,#ff1b04 31px)"></div>
<div style="left:1591px;width:2px;top:1191px;height:31px;background:linear-gradient(rgba(20,2,33,0) 0px,#1e042e 7px,#2d063b 13px,#530338 18px,#8c002b 22px,#be001d 25px,#d40115 28px,#f70808 31px)"></div>
<div style="left:1593px;width:2px;top:1191px;height:31px;background:linear-gradient(rgba(19,2,31,0) 0px,#1b032b 7px,#260535 13px,#47043a 18px,#750032 22px,#a90023 25px,#c2001b 28px,#f70808 31px)"></div>
<div style="left:1595px;width:2px;top:1191px;height:31px;background:linear-gradient(rgba(19,2,31,0) 0px,#180327 7px,#230432 13px,#38053d 18px,#630136 22px,#8d002b 25px,#aa0022 28px,#f70808 31px)"></div>
<div style="left:1597px;width:2px;top:1198px;height:24px;background:linear-gradient(rgba(22,2,35,0) 0px,#20042f 6px,#2a0539 11px,#42043b 15px,#700033 18px,#960028 21px,#f70808 24px)"></div>
<div style="left:1599px;width:2px;top:1198px;height:24px;background:linear-gradient(rgba(20,2,33,0) 0px,#1d032d 6px,#270536 11px,#47043a 15px,#640136 18px,#8f002a 21px,#f70808 24px)"></div>
<div style="left:1601px;width:2px;top:1198px;height:24px;background:linear-gradient(rgba(19,2,31,0) 0px,#1b032b 6px,#240433 11px,#37053d 15px,#5d0237 18px,#920029 21px,#f70808 24px)"></div>
<div style="left:1603px;width:2px;top:1204px;height:18px;background:linear-gradient(rgba(20,2,32,0) 0px,#190328 5px,#240433 9px,#3f053c 12px,#83002e 15px,#f70808 18px)"></div>
<div style="left:1605px;width:2px;top:1204px;height:18px;background:linear-gradient(rgba(20,2,32,0) 0px,#190328 5px,#250534 9px,#3f053c 12px,#83002e 15px,#f70808 18px)"></div>
<div style="left:1607px;width:2px;top:1204px;height:18px;background:linear-gradient(rgba(20,2,32,0) 0px,#190328 5px,#270536 9px,#3f053c 12px,#83002e 15px,#f70808 18px)"></div>
<div style="left:1609px;width:2px;top:1204px;height:18px;background:linear-gradient(rgba(20,2,32,0) 0px,#190328 5px,#260535 9px,#3f053c 12px,#83002e 15px,#f70808 18px)"></div>
<div style="left:1611px;width:2px;top:1204px;height:18px;background:linear-gradient(rgba(20,2,32,0) 0px,#190328 5px,#270536 9px,#3f053c 12px,#83002e 15px,#f70808 18px)"></div>
<div style="left:1613px;width:2px;top:1204px;height:18px;background:linear-gradient(rgba(20,2,32,0) 0px,#190328 5px,#250534 9px,#3f053c 12px,#83002e 15px,#f70808 18px)"></div>
<div style="left:1615px;width:2px;top:1204px;height:18px;background:linear-gradient(rgba(20,2,32,0) 0px,#190328 5px,#240433 9px,#3f053c 12px,#83002e 15px,#f70808 18px)"></div>
<div style="left:1617px;width:2px;top:1204px;height:18px;background:linear-gradient(rgba(20,2,32,0) 0px,#190328 5px,#230432 9px,#3f053c 12px,#83002e 15px,#f70808 18px)"></div>
<div style="left:1619px;width:2px;top:1204px;height:18px;background:linear-gradient(rgba(20,2,32,0) 0px,#190328 5px,#230432 9px,#3f053c 12px,#83002e 15px,#f70808 18px)"></div>
<div style="left:1621px;width:2px;top:1204px;height:18px;background:linear-gradient(rgba(20,2,32,0) 0px,#190328 5px,#270536 9px,#3f053c 12px,#83002e 15px,#f70808 18px)"></div>
<div style="left:1623px;width:2px;top:1204px;height:18px;background:linear-gradient(rgba(20,2,32,0) 0px,#190328 5px,#250434 9px,#3f053c 12px,#83002e 15px,#f70808 18px)"></div>
<div style="left:1625px;width:2px;top:1204px;height:18px;background:linear-gradient(rgba(20,2,32,0) 0px,#190328 5px,#240433 9px,#3f053c 12px,#83002e 15px,#f70808 18px)"></div>
<div style="left:1627px;width:2px;top:1204px;height:18px;background:linear-gradient(rgba(20,2,32,0) 0px,#190328 5px,#240433 9px,#3f053c 12px,#83002e 15px,#f70808 18px)"></div>
<div style="left:1629px;width:2px;top:912px;height:310px;background:linear-gradient(rgba(24,3,38,0) 0px,#180327 35px,#190329 68px,#1a032a 98px,#1b032a 125px,#1b032b 150px,#1c032c 172px,#1c032c 192px,#1d032d 210px,#1d032d 226px,#1e042e 240px,#1e042e 252px,#1f042e 262px,#1f042f 271px,#20042f 279px,#200430 286px,#210430 292px,#220431 297px,#240433 301px,#3f053c 304px,#83002e 307px,#f70808 310px)"></div>
<div style="left:1631px;width:2px;top:777px;height:445px;background:linear-gradient(rgba(21,2,35,0) 0px,#1d032d 50px,#2c053a 95px,#91002a 135px,#a00025 170px,#90002a 203px,#b6001f 233px,#b20020 260px,#d50215 285px,#c1001b 307px,#cb0019 327px,#e5050f 345px,#ea060d 361px,#db0313 375px,#df0411 387px,#e20410 397px,#f0070b 406px,#f70808 414px,#f80908 421px,#ff3902 427px,#ff4702 432px,#ff4302 436px,#ff6b00 439px,#ff8200 442px,#ff9b00 445px)"></div>
<div style="left:1633px;width:2px;top:777px;height:445px;background:linear-gradient(rgba(21,2,34,0) 0px,#1c032c 50px,#260535 95px,#650136 135px,#b10020 170px,#b20020 203px,#c5001a 233px,#ce0018 260px,#d80214 285px,#d20116 307px,#ee070c 327px,#df0411 345px,#e00411 361px,#f1070a 375px,#fd0a06 387px,#fc0906 397px,#ff2104 406px,#ff1d04 414px,#ff2d03 421px,#ff3f02 427px,#ff8200 432px,#ffa400 436px,#ffd50b 439px,#ffea14 442px,#ffff1e 445px)"></div>
<div style="left:1635px;width:2px;top:827px;height:395px;background:linear-gradient(rgba(24,3,39,0) 0px,#20042f 45px,#290538 85px,#a60023 120px,#a90023 153px,#b4001f 183px,#af0021 210px,#d40115 235px,#d50215 257px,#d30116 277px,#e20410 295px,#eb060d 311px,#e7050e 325px,#f2070a 337px,#e4050f 347px,#f80908 356px,#ff1904 364px,#ff4b01 371px,#ff4402 377px,#ff7500 382px,#ff9f00 386px,#ffd50b 389px,#ffea14 392px,#ffff1e 395px)"></div>
<div style="left:1637px;width:2px;top:827px;height:395px;background:linear-gradient(rgba(21,2,34,0) 0px,#1b032b 45px,#240433 85px,#35063d 120px,#a50024 153px,#b8001e 183px,#c4001b 210px,#ca0019 235px,#d50215 257px,#c5001a 277px,#d80214 295px,#de0311 311px,#ea060d 325px,#f2070a 337px,#e8050e 347px,#e8050e 356px,#ff1b04 364px,#ff4002 371px,#ff6200 377px,#ffbe00 382px,#ffcb06 386px,#ffd50b 389px,#ffea14 392px,#ffff1e 395px)"></div>
<div style="left:1639px;width:2px;top:872px;height:350px;background:linear-gradient(rgba(24,3,38,0) 0px,#1e042e 40px,#240433 75px,#680135 108px,#930029 138px,#920029 165px,#a20025 190px,#9d0026 212px,#990027 232px,#b7001e 250px,#cc0018 266px,#c7001a 280px,#d60215 292px,#c4001b 302px,#ec060c 311px,#ef070b 319px,#ff4802 326px,#ff3d02 332px,#ff7000 337px,#ffa500 341px,#ffd50b 344px,#ffea14 347px,#ffff1e 350px)"></div>
<div style="left:1641px;width:2px;top:872px;height:350px;background:linear-gradient(rgba(21,2,34,0) 0px,#1a032a 40px,#210431 75px,#270536 108px,#7b0030 138px,#8b002b 165px,#8c002b 190px,#8b002b 212px,#a20025 232px,#b00021 250px,#a00025 266px,#ac0022 280px,#be001d 292px,#cb0019 302px,#e20410 311px,#fb0907 319px,#ff4102 326px,#ff5a01 332px,#ff6f00 337px,#ffc001 341px,#ffd50b 344px,#ffea14 347px,#ffff1e 350px)"></div>
<div style="left:1643px;width:2px;top:912px;height:310px;background:linear-gradient(rgba(23,2,37,0) 0px,#1d032c 35px,#250534 68px,#3f053c 98px,#970028 125px,#86002d 150px,#9a0027 172px,#980028 192px,#bd001d 210px,#c4001b 226px,#cf0017 240px,#d30116 252px,#e5050f 262px,#fb0906 271px,#ff2903 279px,#ff3b02 286px,#ff8400 292px,#ffb600 297px,#ffb400 301px,#ffd50b 304px,#ffea14 307px,#ffff1e 310px)"></div>
<div style="left:1645px;width:2px;top:912px;height:310px;background:linear-gradient(rgba(20,2,33,0) 0px,#190328 35px,#1f042f 68px,#240433 98px,#750032 125px,#82002e 150px,#91002a 172px,#a90023 192px,#a20025 210px,#bb001d 226px,#a90023 240px,#b6001f 252px,#b9001e 262px,#dd0312 271px,#fa0907 279px,#ff2803 286px,#ff5d00 292px,#ff8f00 297px,#ff8d00 301px,#ffd50b 304px,#ffea14 307px,#ffff1e 310px)"></div>
<div style="left:1647px;width:2px;top:947px;height:275px;background:linear-gradient(rgba(22,2,36,0) 0px,#1b032b 33px,#210430 63px,#290538 90px,#8c002b 115px,#9c0026 137px,#b4001f 157px,#af0021 175px,#c1001c 191px,#d30116 205px,#b9001e 217px,#ce0018 227px,#e6050f 236px,#ff1604 244px,#ff5001 251px,#ff5701 257px,#ffb400 262px,#ffcf08 266px,#ffd50b 269px,#ffea14 272px,#ffff1e 275px)"></div>
<div style="left:1649px;width:2px;top:980px;height:242px;background:linear-gradient(rgba(24,3,38,0) 0px,#1d032c 30px,#220432 57px,#4c0339 82px,#a90023 104px,#bc001d 124px,#c0001c 142px,#bc001d 158px,#d50215 172px,#ce0018 184px,#dc0312 194px,#f80908 203px,#ff3802 211px,#ff5b00 218px,#ff9000 224px,#ffb700 229px,#ffde0f 233px,#ffd50b 236px,#ffea14 239px,#ffff1e 242px)"></div>
<div style="left:1651px;width:2px;top:980px;height:242px;background:linear-gradient(rgba(21,2,34,0) 0px,#190328 30px,#1e042d 57px,#210430 82px,#790031 104px,#9f0026 124px,#a20025 142px,#c1001c 158px,#b20020 172px,#d40115 184px,#c90019 194px,#f1070b 203px,#fc0906 211px,#ff4b01 218px,#ff8200 224px,#ffae00 229px,#ff8800 233px,#ffd50b 236px,#ffea14 239px,#ffff1e 242px)"></div>
<div style="left:1653px;width:2px;top:1010px;height:212px;background:linear-gradient(rgba(22,2,36,0) 0px,#1a032a 27px,#1f042e 52px,#270536 74px,#a60023 94px,#b8001e 112px,#bb001d 128px,#b20020 142px,#ce0018 154px,#d10117 164px,#fe0a05 173px,#ff1904 181px,#ff4901 188px,#ff5801 194px,#ffb100 199px,#ffab00 203px,#ffd50b 206px,#ffea14 209px,#ffff1e 212px)"></div>
<div style="left:1655px;width:2px;top:1037px;height:185px;background:linear-gradient(rgba(23,2,37,0) 0px,#1a032a 25px,#1f042e 47px,#2f063d 67px,#a30024 85px,#9f0025 101px,#c1001b 115px,#d50215 127px,#d80214 137px,#e7050e 146px,#ff1304 154px,#ff4a01 161px,#ff8000 167px,#ffaf00 172px,#ffae00 176px,#ffd50b 179px,#ffea14 182px,#ffff1e 185px)"></div>
<div style="left:1657px;width:2px;top:1062px;height:160px;background:linear-gradient(rgba(23,3,38,0) 0px,#1b032a 22px,#1e042e 42px,#3a053c 60px,#9c0026 76px,#a40024 90px,#bb001d 102px,#d90214 112px,#e10410 121px,#ff2004 129px,#ff5801 136px,#ff6400 142px,#ff9600 147px,#ffc302 151px,#ffd50b 154px,#ffea14 157px,#ffff1e 160px)"></div>
<div style="left:1659px;width:2px;top:1084px;height:138px;background:linear-gradient(rgba(23,3,37,0) 0px,#1a032a 20px,#1d032d 38px,#3d053c 54px,#7b0030 68px,#9b0027 80px,#c8001a 90px,#f3080a 99px,#ff1205 107px,#ff2c03 114px,#ff5201 120px,#ff7a00 125px,#ff8a00 129px,#ffd40a 132px,#ffe814 135px,#fffe1d 138px)"></div>
<div style="left:1661px;width:2px;top:1104px;height:118px;background:linear-gradient(rgba(23,2,37,0) 0px,#190329 18px,#1c032c 34px,#3c053c 48px,#9c0027 60px,#b10020 70px,#e00411 79px,#ea060d 87px,#ff3c02 94px,#ff6300 100px,#ff6d00 105px,#ff8600 109px,#ffcc06 112px,#ffe010 115px,#fff519 118px)"></div>
<div style="left:1663px;width:2px;top:1138px;height:84px;background:linear-gradient(rgba(24,3,39,0) 0px,#1b032b 14px,#2f063d 26px,#ce0018 36px,#e7050e 45px,#f50809 53px,#ff2903 60px,#ff4002 66px,#ff5601 71px,#ff7700 75px,#ffc403 78px,#ffd80c 81px,#ffec15 84px)"></div>
<div style="left:1665px;width:2px;top:1152px;height:70px;background:linear-gradient(rgba(23,2,37,0) 0px,#190329 12px,#290538 22px,#b30020 31px,#ff0c05 39px,#ff3203 46px,#ff4702 52px,#ff5701 57px,#ff5901 61px,#ffbb00 64px,#ffcf08 67px,#ffe311 70px)"></div>
<div style="left:1667px;width:2px;top:912px;height:310px;background:linear-gradient(rgba(21,2,34,0) 0px,#210430 35px,#2e063c 68px,#38053d 98px,#35063d 125px,#3e053c 150px,#44043b 172px,#48043a 192px,#48043a 210px,#560238 226px,#4d0339 240px,#560238 252px,#520338 262px,#550238 271px,#85002d 279px,#ff3902 286px,#ff3c02 292px,#ff8a00 297px,#ff6e00 301px,#ffb000 304px,#ffc704 307px,#ffda0d 310px)"></div>
<div style="left:1669px;width:2px;top:872px;height:350px;background:linear-gradient(rgba(21,2,34,0) 0px,#1c032c 40px,#250434 75px,#9f0026 108px,#a40024 138px,#c6001a 165px,#d50215 190px,#c4001b 212px,#d80214 232px,#d70214 250px,#dc0312 266px,#f50809 280px,#fc0906 292px,#ff1904 302px,#ff1604 311px,#fc0906 319px,#ff3603 326px,#ff5f00 332px,#ff5101 337px,#ff8900 341px,#ffa400 344px,#ffbe00 347px,#ffd209 350px)"></div>
<div style="left:1671px;width:2px;top:872px;height:350px;background:linear-gradient(rgba(19,2,30,0) 0px,#190328 40px,#210430 75px,#43043b 108px,#9f0025 138px,#be001c 165px,#c4001b 190px,#bb001d 212px,#d80214 232px,#e30410 250px,#d90214 266px,#df0411 280px,#ee070c 292px,#fc0906 302px,#ff1b04 311px,#ff2104 319px,#ff3503 326px,#ff3e02 332px,#ff6400 337px,#ffa500 341px,#ff9900 344px,#ffb300 347px,#ffc905 350px)"></div>
<div style="left:1673px;width:2px;top:912px;height:310px;background:linear-gradient(rgba(22,2,35,0) 0px,#1c032c 35px,#250434 68px,#8e002b 98px,#970028 125px,#930029 150px,#c0001c 172px,#bb001d 192px,#cf0017 210px,#cb0018 226px,#e30410 240px,#d30116 252px,#eb060c 262px,#e10411 271px,#f90907 279px,#fc0906 286px,#ff2004 292px,#ff5b00 297px,#ff5b00 301px,#ff9900 304px,#ffb300 307px,#ffc905 310px)"></div>
<div style="left:1675px;width:2px;top:912px;height:310px;background:linear-gradient(rgba(20,2,32,0) 0px,#190329 35px,#210430 68px,#34063d 98px,#9b0027 125px,#91002a 150px,#990027 172px,#b30020 192px,#b9001e 210px,#b9001e 226px,#d30116 240px,#e20410 252px,#e10410 262px,#f1070a 271px,#e4050f 279px,#ff1604 286px,#ff2204 292px,#ff5a01 297px,#ff9700 301px,#ff9900 304px,#ffb300 307px,#ffc905 310px)"></div>
<div style="left:1677px;width:2px;top:947px;height:275px;background:linear-gradient(rgba(22,2,36,0) 0px,#1d032d 33px,#230433 63px,#7e002f 90px,#89002c 115px,#950028 137px,#a80023 157px,#960028 175px,#ac0022 191px,#cc0018 205px,#c3001b 217px,#d30116 227px,#d20116 236px,#e7050e 244px,#ff1305 251px,#ff4302 257px,#ff3902 262px,#ff7d00 266px,#ff9900 269px,#ffb300 272px,#ffc905 275px)"></div>
<div style="left:1679px;width:2px;top:947px;height:275px;background:linear-gradient(rgba(20,2,33,0) 0px,#1a032a 33px,#210430 63px,#32063e 90px,#6d0034 115px,#760032 137px,#9e0026 157px,#8d002b 175px,#960028 191px,#b6001f 205px,#b8001e 217px,#cf0017 227px,#d90213 236px,#fd0a06 244px,#ff1305 251px,#ff3c02 257px,#ff5101 262px,#ff8c00 266px,#ff9900 269px,#ffb300 272px,#ffc905 275px)"></div>
<div style="left:1681px;width:2px;top:980px;height:242px;background:linear-gradient(rgba(23,3,38,0) 0px,#1d032d 30px,#240433 57px,#680135 82px,#7a0031 104px,#690035 124px,#760032 142px,#980028 158px,#990027 172px,#920029 184px,#a30025 194px,#ba001d 203px,#ec060c 211px,#ff1304 218px,#ff1205 224px,#ff2803 229px,#ff6700 233px,#ff9900 236px,#ffb300 239px,#ffc905 242px)"></div>
<div style="left:1683px;width:2px;top:980px;height:242px;background:linear-gradient(rgba(21,2,34,0) 0px,#1a032a 30px,#210430 57px,#34063d 82px,#640136 104px,#710033 124px,#7f002f 142px,#760032 158px,#81002e 172px,#84002e 184px,#af0021 194px,#d90213 203px,#dc0312 211px,#ff1d04 218px,#ff3303 224px,#ff6200 229px,#ff5201 233px,#ff9900 236px,#ffb300 239px,#ffc905 242px)"></div>
<div style="left:1685px;width:2px;top:1010px;height:212px;background:linear-gradient(rgba(24,3,38,0) 0px,#1d032d 27px,#250434 52px,#5e0237 74px,#6e0034 94px,#750032 112px,#6f0034 128px,#6e0034 142px,#7a0030 154px,#b7001f 164px,#d60215 173px,#e8050e 181px,#ff2703 188px,#ff1e04 194px,#ff5b00 199px,#ff7400 203px,#ff9900 206px,#ffb300 209px,#ffc905 212px)"></div>
<div style="left:1687px;width:2px;top:1010px;height:212px;background:linear-gradient(rgba(21,2,35,0) 0px,#1a032a 27px,#200430 52px,#35063d 74px,#6d0034 94px,#740032 112px,#6a0035 128px,#750032 142px,#84002e 154px,#ad0021 164px,#d60215 173px,#ee070b 181px,#fd0a06 188px,#ff3702 194px,#ff4e01 199px,#ff8d00 203px,#ff9900 206px,#ffb300 209px,#ffc905 212px)"></div>
<div style="left:1689px;width:2px;top:1037px;height:185px;background:linear-gradient(rgba(24,3,38,0) 0px,#1d032d 25px,#230432 47px,#690035 67px,#720033 85px,#730032 101px,#83002e 115px,#87002d 127px,#b20020 137px,#ce0018 146px,#ef070b 154px,#ff0c05 161px,#ff1404 167px,#ff3203 172px,#ff5601 176px,#ff9900 179px,#ffb300 182px,#ffc905 185px)"></div>
<div style="left:1691px;width:2px;top:1037px;height:185px;background:linear-gradient(rgba(22,2,35,0) 0px,#1a032a 25px,#1f042f 47px,#36053d 67px,#650135 85px,#86002d 101px,#88002c 115px,#7f002f 127px,#b7001e 137px,#dd0312 146px,#eb060d 154px,#ff2803 161px,#ff4002 167px,#ff4002 172px,#ff5401 176px,#ff9900 179px,#ffb300 182px,#ffc905 185px)"></div>
<div style="left:1693px;width:2px;top:1062px;height:160px;background:linear-gradient(rgba(23,3,38,0) 0px,#1c032c 22px,#210430 42px,#690035 60px,#7a0030 76px,#87002d 90px,#a60024 102px,#aa0022 112px,#de0312 121px,#ff0c05 129px,#ff3003 136px,#ff3403 142px,#ff6800 147px,#ff8a00 151px,#ff9900 154px,#ffb300 157px,#ffc905 160px)"></div>
<div style="left:1695px;width:2px;top:1062px;height:160px;background:linear-gradient(rgba(21,2,35,0) 0px,#190329 22px,#1e032d 42px,#30063e 60px,#88002c 76px,#8e002b 90px,#a00025 102px,#cc0018 112px,#df0411 121px,#f0070b 129px,#ff2e03 136px,#ff5d00 142px,#ff4d01 147px,#ff5f00 151px,#ff9900 154px,#ffb300 157px,#ffc905 160px)"></div>
<div style="left:1697px;width:2px;top:1084px;height:138px;background:linear-gradient(rgba(23,2,37,0) 0px,#1a032a 20px,#1f042e 38px,#4e0339 54px,#720033 68px,#7d0030 80px,#a50024 90px,#cf0017 99px,#e9060d 107px,#ff0e05 114px,#ff2d03 120px,#ff4901 125px,#ff5b00 129px,#ff9900 132px,#ffb300 135px,#ffc905 138px)"></div>
<div style="left:1699px;width:2px;top:1104px;height:118px;background:linear-gradient(rgba(24,3,39,0) 0px,#1c032b 18px,#270536 34px,#770031 48px,#84002e 60px,#a80023 70px,#d50215 79px,#d90213 87px,#ff1005 94px,#ff2d03 100px,#ff5601 105px,#ff5101 109px,#ff9900 112px,#ffb300 115px,#ffc905 118px)"></div>
<div style="left:1701px;width:2px;top:1104px;height:118px;background:linear-gradient(rgba(22,2,35,0) 0px,#190328 18px,#1c032c 34px,#38053d 48px,#7e002f 60px,#a00025 70px,#e00411 79px,#ea060d 87px,#fd0a06 94px,#ff2803 100px,#ff5201 105px,#ff6300 109px,#ff9900 112px,#ffb300 115px,#ffc905 118px)"></div>
<div style="left:1703px;width:2px;top:1122px;height:100px;background:linear-gradient(rgba(22,2,36,0) 0px,#190329 16px,#1f042e 30px,#4d0339 42px,#b00021 52px,#c5001a 61px,#e9060d 69px,#f90907 76px,#ff2603 82px,#ff3603 87px,#ff6300 91px,#ff9800 94px,#ffb100 97px,#ffc805 100px)"></div>
<div style="left:1705px;width:2px;top:1138px;height:84px;background:linear-gradient(rgba(23,2,37,0) 0px,#1a032a 14px,#250434 26px,#85002d 36px,#d20116 45px,#e30410 53px,#fe0a06 60px,#ff2f03 66px,#ff5c00 71px,#ff4f01 75px,#ff9000 78px,#ffa900 81px,#ffc202 84px)"></div>
<div style="left:1707px;width:2px;top:1152px;height:70px;background:linear-gradient(rgba(23,3,37,0) 0px,#1a032a 12px,#2d063b 22px,#c0001c 31px,#e30410 39px,#fd0a06 46px,#ff2903 52px,#ff3802 57px,#ff5401 61px,#ff8800 64px,#ffa000 67px,#ffba00 70px)"></div>
<div style="left:1709px;width:2px;top:1164px;height:58px;background:linear-gradient(rgba(23,3,38,0) 0px,#1e042e 10px,#3c053c 19px,#d80214 27px,#eb060d 34px,#f80907 40px,#ff2503 45px,#ff4702 49px,#ff7f00 52px,#ff9800 55px,#ffb100 58px)"></div>
<div style="left:1711px;width:2px;top:1174px;height:48px;background:linear-gradient(rgba(24,3,39,0) 0px,#220431 9px,#590237 17px,#f1070a 24px,#ff1a04 30px,#ff3702 35px,#ff5101 39px,#ff7700 42px,#ff8f00 45px,#ffa800 48px)"></div>
<div style="left:1713px;width:2px;top:1174px;height:48px;background:linear-gradient(rgba(21,2,35,0) 0px,#1b032b 9px,#2d063b 17px,#6c0034 24px,#f70808 30px,#ff3103 35px,#ff3703 39px,#ff6f00 42px,#ff8700 45px,#ffa000 48px)"></div>
<div style="left:1715px;width:2px;top:1183px;height:39px;background:linear-gradient(rgba(23,3,37,0) 0px,#230432 8px,#38053d 15px,#8e002a 21px,#ff1a04 26px,#ff3c02 30px,#ff6700 33px,#ff7e00 36px,#ff9700 39px)"></div>
<div style="left:1717px;width:2px;top:1183px;height:39px;background:linear-gradient(rgba(20,2,32,0) 0px,#1e042e 8px,#2c053a 15px,#5f0136 21px,#9b0027 26px,#ff3303 30px,#ff6000 33px,#ff7600 36px,#ff8e00 39px)"></div>
<div style="left:1719px;width:2px;top:1183px;height:39px;background:linear-gradient(rgba(19,2,32,0) 0px,#1e042d 8px,#2f063d 15px,#620136 21px,#d80214 26px,#ff3103 30px,#ff4702 33px,#ff5a01 36px,#ff6f00 39px)"></div>
<div style="left:1721px;width:2px;top:1183px;height:39px;background:linear-gradient(rgba(18,2,30,0) 0px,#1a032a 8px,#260535 15px,#46043a 21px,#90002a 26px,#fc0906 30px,#ff1d04 33px,#ff2e03 36px,#ff4002 39px)"></div>
<div style="left:1723px;width:2px;top:1191px;height:31px;background:linear-gradient(rgba(23,2,37,0) 0px,#220431 7px,#3b053c 13px,#6c0034 18px,#e10410 22px,#f0070b 25px,#fa0907 28px,#ff1305 31px)"></div>
<div style="left:1725px;width:2px;top:1191px;height:31px;background:linear-gradient(rgba(20,2,32,0) 0px,#1d032d 7px,#2c053b 13px,#4b033a 18px,#9d0026 22px,#d50215 25px,#de0312 28px,#f70808 31px)"></div>
<div style="left:1727px;width:2px;top:1191px;height:31px;background:linear-gradient(rgba(19,2,31,0) 0px,#190328 7px,#240433 13px,#30063e 18px,#520339 22px,#84002e 25px,#9b0027 28px,#f70808 31px)"></div>
<div style="left:1729px;width:2px;top:1198px;height:24px;background:linear-gradient(rgba(21,2,35,0) 0px,#1e042e 6px,#280536 11px,#3e053c 15px,#650135 18px,#83002e 21px,#f70808 24px)"></div>
<div style="left:1731px;width:2px;top:1198px;height:24px;background:linear-gradient(rgba(19,2,31,0) 0px,#1a032a 6px,#230432 11px,#2f063d 15px,#530338 18px,#83002e 21px,#f70808 24px)"></div>
<div style="left:1733px;width:2px;top:1204px;height:18px;background:linear-gradient(rgba(24,3,38,0) 0px,#210431 5px,#2b0539 9px,#48043a 12px,#83002e 15px,#f70808 18px)"></div>
<div style="left:1735px;width:2px;top:1204px;height:18px;background:linear-gradient(rgba(20,2,32,0) 0px,#190328 5px,#240433 9px,#3f053c 12px,#83002e 15px,#f70808 18px)"></div>
<div style="left:1737px;width:2px;top:1204px;height:18px;background:linear-gradient(rgba(20,2,32,0) 0px,#190328 5px,#260535 9px,#3f053c 12px,#83002e 15px,#f70808 18px)"></div>
<div style="left:1739px;width:2px;top:1204px;height:18px;background:linear-gradient(rgba(20,2,32,0) 0px,#190328 5px,#230432 9px,#3f053c 12px,#83002e 15px,#f70808 18px)"></div>
<div style="left:1741px;width:2px;top:1204px;height:18px;background:linear-gradient(rgba(20,2,32,0) 0px,#190328 5px,#280537 9px,#3f053c 12px,#83002e 15px,#f70808 18px)"></div>
<div style="left:1743px;width:2px;top:1204px;height:18px;background:linear-gradient(rgba(20,2,32,0) 0px,#190328 5px,#250434 9px,#3f053c 12px,#83002e 15px,#f70808 18px)"></div>
<div style="left:1745px;width:2px;top:1204px;height:18px;background:linear-gradient(rgba(20,2,32,0) 0px,#190328 5px,#270536 9px,#3f053c 12px,#83002e 15px,#f70808 18px)"></div>
<div style="left:1747px;width:2px;top:1204px;height:18px;background:linear-gradient(rgba(20,2,32,0) 0px,#190328 5px,#250534 9px,#3f053c 12px,#83002e 15px,#f70808 18px)"></div>
<div style="left:1749px;width:2px;top:1204px;height:18px;background:linear-gradient(rgba(20,2,32,0) 0px,#190328 5px,#260535 9px,#3f053c 12px,#83002e 15px,#f70808 18px)"></div>
<div style="left:1751px;width:2px;top:1204px;height:18px;background:linear-gradient(rgba(20,2,32,0) 0px,#190328 5px,#260535 9px,#3f053c 12px,#83002e 15px,#f70808 18px)"></div>
<div style="left:1753px;width:2px;top:1204px;height:18px;background:linear-gradient(rgba(20,2,32,0) 0px,#190328 5px,#250434 9px,#3f053c 12px,#83002e 15px,#f70808 18px)"></div>
<div style="left:1755px;width:2px;top:1204px;height:18px;background:linear-gradient(rgba(20,2,32,0) 0px,#190328 5px,#280537 9px,#3f053c 12px,#83002e 15px,#f70808 18px)"></div>
<div style="left:1757px;width:2px;top:1204px;height:18px;background:linear-gradient(rgba(20,2,32,0) 0px,#190328 5px,#240433 9px,#3f053c 12px,#83002e 15px,#f70808 18px)"></div>
<div style="left:1759px;width:2px;top:1204px;height:18px;background:linear-gradient(rgba(20,2,32,0) 0px,#190328 5px,#250534 9px,#3f053c 12px,#83002e 15px,#f70808 18px)"></div>
<div style="left:1761px;width:2px;top:1204px;height:18px;background:linear-gradient(rgba(20,2,32,0) 0px,#190328 5px,#230433 9px,#3f053c 12px,#83002e 15px,#f70808 18px)"></div>
<div style="left:1763px;width:2px;top:1204px;height:18px;background:linear-gradient(rgba(20,2,32,0) 0px,#190328 5px,#250434 9px,#3f053c 12px,#83002e 15px,#f70808 18px)"></div>
<div style="left:1765px;width:2px;top:1204px;height:18px;background:linear-gradient(rgba(20,2,32,0) 0px,#190328 5px,#250534 9px,#3f053c 12px,#83002e 15px,#f70808 18px)"></div>
<div style="left:1767px;width:2px;top:1204px;height:18px;background:linear-gradient(rgba(20,2,32,0) 0px,#190328 5px,#260535 9px,#3f053c 12px,#83002e 15px,#f70808 18px)"></div>
<div style="left:1769px;width:2px;top:1204px;height:18px;background:linear-gradient(rgba(20,2,32,0) 0px,#190328 5px,#270536 9px,#3f053c 12px,#83002e 15px,#f70808 18px)"></div>
<div style="left:1771px;width:2px;top:1204px;height:18px;background:linear-gradient(rgba(20,2,32,0) 0px,#190328 5px,#260535 9px,#3f053c 12px,#83002e 15px,#f70808 18px)"></div>
<div style="left:1773px;width:2px;top:1204px;height:18px;background:linear-gradient(rgba(20,2,32,0) 0px,#190328 5px,#240433 9px,#3f053c 12px,#83002e 15px,#f70808 18px)"></div>
<div style="left:1775px;width:2px;top:1204px;height:18px;background:linear-gradient(rgba(20,2,32,0) 0px,#190328 5px,#250434 9px,#3f053c 12px,#83002e 15px,#f70808 18px)"></div>
<div style="left:1777px;width:2px;top:1204px;height:18px;background:linear-gradient(rgba(20,2,32,0) 0px,#190328 5px,#270536 9px,#3f053c 12px,#83002e 15px,#f70808 18px)"></div>
<div style="left:1779px;width:2px;top:1204px;height:18px;background:linear-gradient(rgba(20,2,32,0) 0px,#190328 5px,#270536 9px,#3f053c 12px,#83002e 15px,#f70808 18px)"></div>
<div style="left:1781px;width:2px;top:1204px;height:18px;background:linear-gradient(rgba(20,2,32,0) 0px,#190328 5px,#230433 9px,#3f053c 12px,#83002e 15px,#f70808 18px)"></div>
<div style="left:1783px;width:2px;top:1204px;height:18px;background:linear-gradient(rgba(20,2,32,0) 0px,#190328 5px,#240433 9px,#3f053c 12px,#83002e 15px,#f70808 18px)"></div>
<div style="left:1785px;width:2px;top:1204px;height:18px;background:linear-gradient(rgba(20,2,32,0) 0px,#190328 5px,#260535 9px,#3f053c 12px,#83002e 15px,#f70808 18px)"></div>
<div style="left:1787px;width:2px;top:1204px;height:18px;background:linear-gradient(rgba(20,2,32,0) 0px,#190328 5px,#260535 9px,#3f053c 12px,#83002e 15px,#f70808 18px)"></div>
<div style="left:1789px;width:2px;top:1204px;height:18px;background:linear-gradient(rgba(20,2,32,0) 0px,#190328 5px,#250434 9px,#3f053c 12px,#83002e 15px,#f70808 18px)"></div>
<div style="left:1791px;width:2px;top:1204px;height:18px;background:linear-gradient(rgba(20,2,32,0) 0px,#190328 5px,#270535 9px,#3f053c 12px,#83002e 15px,#f70808 18px)"></div>
<div style="left:1793px;width:2px;top:1204px;height:18px;background:linear-gradient(rgba(20,2,32,0) 0px,#190328 5px,#250534 9px,#3f053c 12px,#83002e 15px,#f70808 18px)"></div>
<div style="left:1795px;width:2px;top:1204px;height:18px;background:linear-gradient(rgba(20,2,32,0) 0px,#190328 5px,#250534 9px,#3f053c 12px,#83002e 15px,#f70808 18px)"></div>
<div style="left:1797px;width:2px;top:1204px;height:18px;background:linear-gradient(rgba(20,2,32,0) 0px,#190328 5px,#260535 9px,#3f053c 12px,#83002e 15px,#f70808 18px)"></div>
<div style="left:1799px;width:2px;top:1204px;height:18px;background:linear-gradient(rgba(20,2,32,0) 0px,#190328 5px,#270536 9px,#3f053c 12px,#83002e 15px,#f70808 18px)"></div>
<div style="left:1801px;width:2px;top:1204px;height:18px;background:linear-gradient(rgba(20,2,32,0) 0px,#190328 5px,#270536 9px,#3f053c 12px,#83002e 15px,#f70808 18px)"></div>
<div style="left:1803px;width:2px;top:1204px;height:18px;background:linear-gradient(rgba(20,2,32,0) 0px,#190328 5px,#260535 9px,#3f053c 12px,#83002e 15px,#f70808 18px)"></div>
<div style="left:1805px;width:2px;top:1204px;height:18px;background:linear-gradient(rgba(20,2,32,0) 0px,#190328 5px,#240433 9px,#3f053c 12px,#83002e 15px,#f70808 18px)"></div>
<div style="left:1807px;width:2px;top:1204px;height:18px;background:linear-gradient(rgba(20,2,32,0) 0px,#190328 5px,#260535 9px,#3f053c 12px,#83002e 15px,#f70808 18px)"></div>
<div style="left:1809px;width:2px;top:1204px;height:18px;background:linear-gradient(rgba(20,2,32,0) 0px,#190328 5px,#270536 9px,#3f053c 12px,#83002e 15px,#f70808 18px)"></div>
<div style="left:1811px;width:2px;top:1204px;height:18px;background:linear-gradient(rgba(20,2,32,0) 0px,#190328 5px,#230432 9px,#3f053c 12px,#83002e 15px,#f70808 18px)"></div>
<div style="left:1813px;width:2px;top:1204px;height:18px;background:linear-gradient(rgba(20,2,32,0) 0px,#190328 5px,#240433 9px,#3f053c 12px,#83002e 15px,#f70808 18px)"></div>
<div style="left:1815px;width:2px;top:777px;height:445px;background:linear-gradient(rgba(21,2,34,0) 0px,#1f042f 50px,#37053d 95px,#38053d 135px,#40043b 170px,#41043b 203px,#4c0339 233px,#44043b 260px,#47043a 285px,#4d0339 307px,#4e0339 327px,#590237 345px,#520338 361px,#5e0237 375px,#640136 387px,#5a0237 397px,#640136 406px,#710033 414px,#7b0030 421px,#6b0035 427px,#960028 432px,#970028 436px,#b30020 439px,#c0001c 442px,#f70808 445px)"></div>
<div style="left:1817px;width:2px;top:722px;height:500px;background:linear-gradient(rgba(22,2,36,0) 0px,#1f042e 55px,#2b0539 105px,#b7001e 150px,#c6001a 190px,#ba001d 225px,#d60214 258px,#d50215 288px,#d70214 315px,#ed060c 340px,#ef070b 362px,#f60808 382px,#f70808 400px,#fe0a05 416px,#f80908 430px,#f90907 442px,#f90907 452px,#ff3403 461px,#ff2d03 469px,#ff4602 476px,#ff7200 482px,#ff6f00 487px,#ffc202 491px,#ffd50b 494px,#ffea14 497px,#ffff1e 500px)"></div>
<div style="left:1819px;width:2px;top:722px;height:500px;background:linear-gradient(rgba(21,2,34,0) 0px,#1c032c 55px,#250534 105px,#6b0035 150px,#aa0022 190px,#a80023 225px,#bd001d 258px,#c5001a 288px,#df0411 315px,#e8050e 340px,#e00411 362px,#e6050e 382px,#e4050f 400px,#e9060d 416px,#f0070b 430px,#fa0907 442px,#f80908 452px,#ff1105 461px,#ff2903 469px,#ff4302 476px,#ff7100 482px,#ff9900 487px,#ffa400 491px,#ffd50b 494px,#ffea14 497px,#ffff1e 500px)"></div>
<div style="left:1821px;width:2px;top:722px;height:500px;background:linear-gradient(rgba(19,2,32,0) 0px,#1a032a 55px,#240433 105px,#4c0339 150px,#ab0022 190px,#b10020 225px,#b8001e 258px,#dc0312 288px,#df0411 315px,#de0311 340px,#e00411 362px,#e00411 382px,#fb0907 400px,#fb0906 416px,#f1070a 430px,#ff0c05 442px,#ff0e05 452px,#ff0d05 461px,#ff2d03 469px,#ff6100 476px,#ff6f00 482px,#ff8400 487px,#ffa300 491px,#ffd50b 494px,#ffea14 497px,#ffff1e 500px)"></div>
<div style="left:1823px;width:2px;top:722px;height:500px;background:linear-gradient(rgba(18,2,30,0) 0px,#190328 55px,#210431 105px,#2d063c 150px,#9c0026 190px,#b5001f 225px,#b4001f 258px,#d50215 288px,#df0411 315px,#e10410 340px,#e4050f 362px,#e00411 382px,#e6050f 400px,#ff0a05 416px,#ff0c05 430px,#ff1d04 442px,#f80908 452px,#ff0b05 461px,#ff1205 469px,#ff3003 476px,#ff4f01 482px,#ff9100 487px,#ff9900 491px,#ffd50b 494px,#ffea14 497px,#ffff1e 500px)"></div>
<div style="left:1825px;width:2px;top:777px;height:445px;background:linear-gradient(rgba(23,3,38,0) 0px,#1f042f 50px,#2a0538 95px,#aa0022 135px,#c4001b 170px,#c1001c 203px,#c5001a 233px,#d00117 260px,#e4050f 285px,#e20410 307px,#ea060d 327px,#fb0907 345px,#ff1504 361px,#ff1e04 375px,#ff0d05 387px,#fc0906 397px,#ff1d04 406px,#ff4702 414px,#ff4901 421px,#ff6900 427px,#ffa700 432px,#ffbe00 436px,#ffd50b 439px,#ffea14 442px,#ffff1e 445px)"></div>
<div style="left:1827px;width:2px;top:777px;height:445px;background:linear-gradient(rgba(22,2,36,0) 0px,#1d032d 50px,#270536 95px,#720033 135px,#b8001e 170px,#ac0022 203px,#b00021 233px,#d40115 260px,#c2001b 285px,#cf0017 307px,#d20116 327px,#ee070c 345px,#de0311 361px,#ef070b 375px,#f30809 387px,#f60808 397px,#ff0b05 406px,#ff1504 414px,#ff4c01 421px,#ff7600 427px,#ffaf00 432px,#ffb000 436px,#ffd50b 439px,#ffea14 442px,#ffff1e 445px)"></div>
<div style="left:1829px;width:2px;top:777px;height:445px;background:linear-gradient(rgba(21,2,34,0) 0px,#1c032b 50px,#220431 95px,#41043b 135px,#a60023 170px,#9c0027 203px,#b10020 233px,#ba001e 260px,#b10020 285px,#b7001e 307px,#c2001b 327px,#de0312 345px,#d70214 361px,#d90213 375px,#db0313 387px,#e00411 397px,#f40809 406px,#f60808 414px,#ff3902 421px,#ff4502 427px,#ff9800 432px,#ffa000 436px,#ffd50b 439px,#ffea14 442px,#ffff1e 445px)"></div>
<div style="left:1831px;width:2px;top:777px;height:445px;background:linear-gradient(rgba(20,2,32,0) 0px,#1a032a 50px,#230432 95px,#2a0539 135px,#960028 170px,#920029 203px,#9a0027 233px,#c2001b 260px,#b8001e 285px,#d10117 307px,#ce0018 327px,#d70214 345px,#d90214 361px,#d40115 375px,#e4050f 387px,#db0313 397px,#ee070b 406px,#f60809 414px,#ff4a01 421px,#ff7000 427px,#ff8d00 432px,#ffbf01 436px,#ffd50b 439px,#ffea14 442px,#ffff1e 445px)"></div>
<div style="left:1833px;width:2px;top:777px;height:445px;background:linear-gradient(rgba(19,2,31,0) 0px,#190328 50px,#210430 95px,#280537 135px,#81002e 170px,#940029 203px,#9a0027 233px,#b8001e 260px,#a90023 285px,#ab0022 307px,#b5001f 327px,#d40115 345px,#c0001c 361px,#dc0312 375px,#d20116 387px,#e9060d 397px,#f40809 406px,#ff2e03 414px,#ff3a02 421px,#ff6400 427px,#ff6e00 432px,#ffa300 436px,#ffd50b 439px,#ffea14 442px,#ffff1e 445px)"></div>
<div style="left:1835px;width:2px;top:827px;height:395px;background:linear-gradient(rgba(24,3,38,0) 0px,#1f042e 45px,#270536 85px,#6a0035 120px,#8a002c 153px,#9f0026 183px,#950029 210px,#a80023 235px,#9d0026 257px,#a70023 277px,#bd001d 295px,#b10020 311px,#b9001e 325px,#d90213 337px,#d20116 347px,#e7050e 356px,#ff2e03 364px,#ff5301 371px,#ff8800 377px,#ff9b00 382px,#ffbc00 386px,#ffd50b 389px,#ffea14 392px,#ffff1e 395px)"></div>
<div style="left:1837px;width:2px;top:827px;height:395px;background:linear-gradient(rgba(23,2,37,0) 0px,#1d032d 45px,#250434 85px,#46043a 120px,#91002a 153px,#90002a 183px,#9f0026 210px,#950029 235px,#9c0026 257px,#a20025 277px,#c1001c 295px,#af0021 311px,#bb001d 325px,#ce0018 337px,#d50215 347px,#ef070b 356px,#ff1105 364px,#ff3e02 371px,#ff8b00 377px,#ff9e00 382px,#ffbe00 386px,#ffd50b 389px,#ffea14 392px,#ffff1e 395px)"></div>
<div style="left:1839px;width:2px;top:827px;height:395px;background:linear-gradient(rgba(22,2,35,0) 0px,#1c032c 45px,#220431 85px,#2c053a 120px,#81002e 153px,#87002d 183px,#970028 210px,#a30024 235px,#a00025 257px,#b8001e 277px,#b8001e 295px,#b40020 311px,#b9001e 325px,#c3001b 337px,#ce0018 347px,#f30809 356px,#ff1d04 364px,#ff4a01 371px,#ff4e01 377px,#ff7f00 382px,#ffb000 386px,#ffd50b 389px,#ffea14 392px,#ffff1e 395px)"></div>
<div style="left:1841px;width:2px;top:827px;height:395px;background:linear-gradient(rgba(21,2,34,0) 0px,#1a032a 45px,#220431 85px,#290538 120px,#8c002b 153px,#82002e 183px,#a70023 210px,#90002a 235px,#ac0022 257px,#b4001f 277px,#b20020 295px,#b20020 311px,#ca0019 325px,#c7001a 337px,#d30116 347px,#e4050f 356px,#ff0f05 364px,#ff3802 371px,#ff5301 377px,#ff8b00 382px,#ffa300 386px,#ffd50b 389px,#ffea14 392px,#ffff1e 395px)"></div>
<div style="left:1843px;width:2px;top:827px;height:395px;background:linear-gradient(rgba(20,2,32,0) 0px,#190329 45px,#200430 85px,#290538 120px,#980028 153px,#9c0026 183px,#9a0027 210px,#bf001c 235px,#bd001d 257px,#b20020 277px,#d00117 295px,#d70214 311px,#cb0019 325px,#dc0312 337px,#d70214 347px,#fd0a06 356px,#ff2e03 364px,#ff4a01 371px,#ff9b00 377px,#ffb000 382px,#ffbe00 386px,#ffd50b 389px,#ffea14 392px,#ffff1e 395px)"></div>
<div style="left:1845px;width:2px;top:872px;height:350px;background:linear-gradient(rgba(24,3,39,0) 0px,#1f042e 40px,#260535 75px,#670135 108px,#940029 138px,#960028 165px,#9e0026 190px,#ac0022 212px,#bf001c 232px,#c90019 250px,#d30116 266px,#dd0312 280px,#e20410 292px,#de0312 302px,#e9060d 311px,#ff3802 319px,#ff5c00 326px,#ff9200 332px,#ff7d00 337px,#ffa500 341px,#ffd50b 344px,#ffea14 347px,#ffff1e 350px)"></div>
<div style="left:1847px;width:2px;top:872px;height:350px;background:linear-gradient(rgba(23,3,37,0) 0px,#1d032d 40px,#240433 75px,#40043b 108px,#a30025 138px,#9f0026 165px,#a90023 190px,#c3001b 212px,#b20020 232px,#be001c 250px,#d60215 266px,#dd0312 280px,#cd0018 292px,#e5050f 302px,#f70808 311px,#ff3403 319px,#ff6b00 326px,#ff7200 332px,#ffab00 337px,#ffc704 341px,#ffd50b 344px,#ffea14 347px,#ffff1e 350px)"></div>
<div style="left:1849px;width:2px;top:872px;height:350px;background:linear-gradient(rgba(22,2,36,0) 0px,#1c032c 40px,#230432 75px,#2b0539 108px,#82002e 138px,#9e0026 165px,#a80023 190px,#a40024 212px,#b20020 232px,#ce0018 250px,#bc001d 266px,#c0001c 280px,#df0411 292px,#d70214 302px,#df0411 311px,#ff2e03 319px,#ff4b01 326px,#ff7400 332px,#ff7b00 337px,#ff9200 341px,#ffd50b 344px,#ffea14 347px,#ffff1e 350px)"></div>
<div style="left:1851px;width:2px;top:872px;height:350px;background:linear-gradient(rgba(21,2,34,0) 0px,#1a032a 40px,#210430 75px,#270536 108px,#7f002f 138px,#930029 165px,#a20025 190px,#ad0021 212px,#b5001f 232px,#c90019 250px,#b6001f 266px,#c4001b 280px,#d60214 292px,#da0313 302px,#e9060d 311px,#fd0a06 319px,#ff4202 326px,#ff6b00 332px,#ff7a00 337px,#ff9c00 341px,#ffd50b 344px,#ffea14 347px,#ffff1e 350px)"></div>
<div style="left:1853px;width:2px;top:872px;height:350px;background:linear-gradient(rgba(20,2,33,0) 0px,#190329 40px,#1f042f 75px,#260535 108px,#620136 138px,#8a002c 165px,#80002f 190px,#9c0026 212px,#8d002b 232px,#a90023 250px,#aa0022 266px,#a60023 280px,#bb001d 292px,#d70214 302px,#e8050e 311px,#fa0907 319px,#ff5701 326px,#ff7a00 332px,#ff8b00 337px,#ffa000 341px,#ffd50b 344px,#ffea14 347px,#ffff1e 350px)"></div>
<div style="left:1855px;width:2px;top:912px;height:310px;background:linear-gradient(rgba(24,3,39,0) 0px,#1e042d 35px,#230432 68px,#44043b 98px,#7b0030 125px,#7c0030 150px,#770031 172px,#930029 192px,#990027 210px,#8d002b 226px,#b20020 240px,#b7001f 252px,#da0313 262px,#f1070a 271px,#ff1e04 279px,#ff3503 286px,#ff5701 292px,#ff8200 297px,#ffcf08 301px,#ffd50b 304px,#ffea14 307px,#ffff1e 310px)"></div>
<div style="left:1857px;width:2px;top:912px;height:310px;background:linear-gradient(rgba(23,3,38,0) 0px,#1c032c 35px,#230432 68px,#2c053a 98px,#750032 125px,#940029 150px,#8a002c 172px,#a40024 192px,#a90023 210px,#a90023 226px,#9f0026 240px,#b9001e 252px,#d60215 262px,#e8050e 271px,#ff1404 279px,#ff5201 286px,#ff9700 292px,#ffb300 297px,#ffc202 301px,#ffd50b 304px,#ffea14 307px,#ffff1e 310px)"></div>
<div style="left:1859px;width:2px;top:912px;height:310px;background:linear-gradient(rgba(22,2,36,0) 0px,#1b032b 35px,#210431 68px,#270536 98px,#700033 125px,#6e0034 150px,#770031 172px,#84002e 192px,#84002d 210px,#9f0026 226px,#920029 240px,#950028 252px,#c90019 262px,#dc0312 271px,#f60808 279px,#ff2204 286px,#ff5c00 292px,#ff7f00 297px,#ffc704 301px,#ffd50b 304px,#ffea14 307px,#ffff1e 310px)"></div>
<div style="left:1861px;width:2px;top:912px;height:310px;background:linear-gradient(rgba(21,2,35,0) 0px,#1a032a 35px,#20042f 68px,#250434 98px,#710033 125px,#790031 150px,#920029 172px,#a10025 192px,#ac0022 210px,#ac0022 226px,#990027 240px,#b6001f 252px,#d60215 262px,#e9060d 271px,#ff2a03 279px,#ff4c01 286px,#ff6300 292px,#ffa500 297px,#ffa800 301px,#ffd50b 304px,#ffea14 307px,#ffff1e 310px)"></div>
<div style="left:1863px;width:2px;top:912px;height:310px;background:linear-gradient(rgba(20,2,33,0) 0px,#190328 35px,#1e042e 68px,#230432 98px,#48043a 125px,#8d002b 150px,#8a002c 172px,#85002d 192px,#9f0026 210px,#9a0027 226px,#970028 240px,#a00025 252px,#ce0018 262px,#e10410 271px,#ff1504 279px,#ff4702 286px,#ff7600 292px,#ffa300 297px,#ffb200 301px,#ffd50b 304px,#ffea14 307px,#ffff1e 310px)"></div>
<div style="left:1865px;width:2px;top:947px;height:275px;background:linear-gradient(rgba(24,3,38,0) 0px,#1d032c 33px,#230432 63px,#31063e 90px,#86002d 115px,#91002a 137px,#9e0026 157px,#970028 175px,#b00021 191px,#bd001d 205px,#a50024 217px,#c90019 227px,#e30410 236px,#ff1304 244px,#ff1e04 251px,#ff7100 257px,#ff8c00 262px,#ffa800 266px,#ffd50b 269px,#ffea14 272px,#ffff1e 275px)"></div>
<div style="left:1867px;width:2px;top:947px;height:275px;background:linear-gradient(rgba(23,2,37,0) 0px,#1b032b 33px,#210430 63px,#280537 90px,#7c0030 115px,#8d002b 137px,#9e0026 157px,#9b0027 175px,#b7001e 191px,#ab0022 205px,#bd001d 217px,#cd0018 227px,#ef070b 236px,#ff1005 244px,#ff2803 251px,#ff3a02 257px,#ff8100 262px,#ff9400 266px,#ffd50b 269px,#ffea14 272px,#ffff1e 275px)"></div>
<div style="left:1869px;width:2px;top:947px;height:275px;background:linear-gradient(rgba(22,2,35,0) 0px,#1a032a 33px,#1f042f 63px,#230432 90px,#8e002b 115px,#9f0025 137px,#9d0026 157px,#c0001c 175px,#ce0018 191px,#c6001a 205px,#cc0018 217px,#d70214 227px,#ec060c 236px,#ff2d03 244px,#ff5001 251px,#ff5301 257px,#ffb700 262px,#ff9800 266px,#ffd50b 269px,#ffea14 272px,#ffff1e 275px)"></div>
<div style="left:1871px;width:2px;top:947px;height:275px;background:linear-gradient(rgba(21,2,34,0) 0px,#190328 33px,#1e042d 63px,#230432 90px,#5c0237 115px,#8d002b 137px,#980028 157px,#a70023 175px,#bd001d 191px,#bb001d 205px,#c5001a 217px,#e10410 227px,#e3040f 236px,#ff2e03 244px,#ff4c01 251px,#ff6700 257px,#ffa700 262px,#ff9900 266px,#ffd50b 269px,#ffea14 272px,#ffff1e 275px)"></div>
<div style="left:1873px;width:2px;top:980px;height:242px;background:linear-gradient(rgba(24,3,39,0) 0px,#1c032c 30px,#220431 57px,#34063d 82px,#8c002b 104px,#970028 124px,#9c0026 142px,#ac0022 158px,#b9001e 172px,#a90023 184px,#cc0018 194px,#f1070a 203px,#ff1105 211px,#ff3e02 218px,#ff5f00 224px,#ff5c00 229px,#ff7500 233px,#ffd50b 236px,#ffea14 239px,#ffff1e 242px)"></div>
<div style="left:1875px;width:2px;top:980px;height:242px;background:linear-gradient(rgba(23,2,37,0) 0px,#1b032b 30px,#200430 57px,#260535 82px,#7a0030 104px,#87002d 124px,#9e0026 142px,#980028 158px,#990027 172px,#be001d 184px,#d20116 194px,#f1070a 203px,#f90907 211px,#ff4302 218px,#ff5b01 224px,#ff8e00 229px,#ff8800 233px,#ffd50b 236px,#ffea14 239px,#ffff1e 242px)"></div>
<div style="left:1877px;width:2px;top:980px;height:242px;background:linear-gradient(rgba(22,2,36,0) 0px,#1a032a 30px,#1f042e 57px,#240433 82px,#6e0034 104px,#8d002b 124px,#7f002f 142px,#88002c 158px,#960028 172px,#a50024 184px,#c3001b 194px,#f70808 203px,#ff1e04 211px,#ff4b01 218px,#ff7800 224px,#ff9500 229px,#ffae00 233px,#ffd50b 236px,#ffea14 239px,#ffff1e 242px)"></div>
<div style="left:1879px;width:2px;top:980px;height:242px;background:linear-gradient(rgba(21,2,34,0) 0px,#190328 30px,#1d032d 57px,#220431 82px,#44043b 104px,#9a0027 124px,#87002d 142px,#91002a 158px,#a60023 172px,#bb001d 184px,#d60215 194px,#f50809 203px,#ff3303 211px,#ff5c00 218px,#ff8100 224px,#ffb000 229px,#ffd50b 233px,#ffd50b 236px,#ffea14 239px,#ffff1e 242px)"></div>
<div style="left:1881px;width:2px;top:1010px;height:212px;background:linear-gradient(rgba(24,3,38,0) 0px,#1c032c 27px,#200430 52px,#2d063b 74px,#780031 94px,#9d0026 112px,#990027 128px,#af0021 142px,#9e0026 154px,#d60215 164px,#f80908 173px,#ff3203 181px,#ff5701 188px,#ff7f00 194px,#ffa600 199px,#ffc202 203px,#ffd50b 206px,#ffea14 209px,#ffff1e 212px)"></div>
<div style="left:1883px;width:2px;top:1010px;height:212px;background:linear-gradient(rgba(23,2,37,0) 0px,#1a032a 27px,#1f042e 52px,#240433 74px,#8a002c 94px,#9a0027 112px,#ab0022 128px,#a90023 142px,#a80023 154px,#cc0018 164px,#e5050f 173px,#ff1b04 181px,#ff5401 188px,#ff9100 194px,#ff9500 199px,#ffd30a 203px,#ffd50b 206px,#ffea14 209px,#ffff1e 212px)"></div>
<div style="left:1885px;width:2px;top:1010px;height:212px;background:linear-gradient(rgba(22,2,35,0) 0px,#190329 27px,#1d032d 52px,#220431 74px,#610136 94px,#89002c 112px,#930029 128px,#a00025 142px,#bf001c 154px,#bd001d 164px,#dd0312 173px,#f50809 181px,#ff3503 188px,#ff5101 194px,#ff6b00 199px,#ff8200 203px,#ffd50b 206px,#ffea14 209px,#ffff1e 212px)"></div>
<div style="left:1887px;width:2px;top:1037px;height:185px;background:linear-gradient(rgba(24,3,39,0) 0px,#1c032c 25px,#200430 47px,#3c053c 67px,#9a0027 85px,#a50024 101px,#b30020 115px,#ba001d 127px,#c0001c 137px,#f30809 146px,#ff2104 154px,#ff2803 161px,#ff4b01 167px,#ff6900 172px,#ffc101 176px,#ffd50b 179px,#ffea14 182px,#ffff1e 185px)"></div>
<div style="left:1889px;width:2px;top:1037px;height:185px;background:linear-gradient(rgba(23,3,37,0) 0px,#1b032b 25px,#1e042e 47px,#270536 67px,#9c0026 85px,#990027 101px,#a20025 115px,#ba001e 127px,#d60215 137px,#e4050f 146px,#ff0d05 154px,#ff2c03 161px,#ff7000 167px,#ff8e00 172px,#ffb400 176px,#ffd50b 179px,#ffea14 182px,#ffff1e 185px)"></div>
<div style="left:1891px;width:2px;top:1037px;height:185px;background:linear-gradient(rgba(22,2,36,0) 0px,#190329 25px,#1d032d 47px,#210430 67px,#85002d 85px,#a20025 101px,#a60023 115px,#c6001a 127px,#e00411 137px,#f60808 146px,#ff1105 154px,#ff4402 161px,#ff7500 167px,#ffae00 172px,#ffa000 176px,#ffd50b 179px,#ffea14 182px,#ffff1e 185px)"></div>
<div style="left:1893px;width:2px;top:1037px;height:185px;background:linear-gradient(rgba(21,2,35,0) 0px,#180327 25px,#1c032b 47px,#1f042f 67px,#3f053c 85px,#a90023 101px,#970028 115px,#a40024 127px,#c2001b 137px,#f3080a 146px,#ff2f03 154px,#ff2e03 161px,#ff6300 167px,#ff8d00 172px,#ffc302 176px,#ffd50b 179px,#ffea14 182px,#ffff1e 185px)"></div>
<div style="left:1895px;width:2px;top:1062px;height:160px;background:linear-gradient(rgba(23,3,38,0) 0px,#1a032a 22px,#1e042d 42px,#2a0538 60px,#a40024 76px,#8e002a 90px,#bf001c 102px,#e20410 112px,#fd0a06 121px,#ff0a05 129px,#ff3e02 136px,#ff6500 142px,#ff9300 147px,#ffd40a 151px,#ffd50b 154px,#ffea14 157px,#ffff1e 160px)"></div>
<div style="left:1897px;width:2px;top:1062px;height:160px;background:linear-gradient(rgba(22,2,36,0) 0px,#190329 22px,#1c032c 42px,#200430 60px,#660135 76px,#81002f 90px,#b30020 102px,#bd001d 112px,#f0070b 121px,#ff0b05 129px,#ff2a03 136px,#ff4d01 142px,#ff8300 147px,#ff9400 151px,#ffd50b 154px,#ffea14 157px,#ffff1e 160px)"></div>
<div style="left:1899px;width:2px;top:1084px;height:138px;background:linear-gradient(rgba(24,3,39,0) 0px,#1b032b 20px,#1e042e 38px,#41043b 54px,#760032 68px,#c2001b 80px,#d80214 90px,#ea060d 99px,#ff1904 107px,#ff4b01 114px,#ff7100 120px,#ffc403 125px,#ffe010 129px,#ffd50b 132px,#ffea14 135px,#ffff1e 138px)"></div>
<div style="left:1901px;width:2px;top:1084px;height:138px;background:linear-gradient(rgba(23,2,37,0) 0px,#1a0329 20px,#1d032c 38px,#270536 54px,#7b0030 68px,#a00025 80px,#d20116 90px,#e6050f 99px,#ff3303 107px,#ff5f00 114px,#ff7f00 120px,#ff8900 125px,#ffa100 129px,#ffd309 132px,#ffe713 135px,#fffc1d 138px)"></div>
<div style="left:1903px;width:2px;top:1084px;height:138px;background:linear-gradient(rgba(22,2,36,0) 0px,#180328 20px,#1b032b 38px,#20042f 54px,#570238 68px,#990027 80px,#b30020 90px,#e8050e 99px,#ff1c04 107px,#ff4202 114px,#ff5d00 120px,#ff5601 125px,#ffa400 129px,#ffd008 132px,#ffe412 135px,#fff91b 138px)"></div>
<div style="left:1905px;width:2px;top:1104px;height:118px;background:linear-gradient(rgba(23,3,38,0) 0px,#1a032a 18px,#1d032c 34px,#38053d 48px,#b30020 60px,#d00117 70px,#e10410 79px,#ff2104 87px,#ff4d01 94px,#ff7f00 100px,#ff6900 105px,#ffce07 109px,#ffcd07 112px,#ffe110 115px,#fff61a 118px)"></div>
<div style="left:1907px;width:2px;top:1104px;height:118px;background:linear-gradient(rgba(22,2,36,0) 0px,#190328 18px,#1b032b 34px,#270536 48px,#990027 60px,#bc001d 70px,#f50809 79px,#ff1a04 87px,#ff4b01 94px,#ff4d01 100px,#ff5d00 105px,#ff8a00 109px,#ffca06 112px,#ffde0f 115px,#fff318 118px)"></div>
<div style="left:1909px;width:2px;top:1122px;height:100px;background:linear-gradient(rgba(23,3,38,0) 0px,#1a032a 16px,#1f042f 30px,#500339 42px,#c2001b 52px,#de0311 61px,#f70808 69px,#ff1404 76px,#ff3b02 82px,#ff8700 87px,#ff7b00 91px,#ffc704 94px,#ffdb0e 97px,#fff017 100px)"></div>
<div style="left:1911px;width:2px;top:1122px;height:100px;background:linear-gradient(rgba(22,2,36,0) 0px,#180328 16px,#1b032b 30px,#31063e 42px,#c5001a 52px,#e00411 61px,#f1070a 69px,#ff2404 76px,#ff3303 82px,#ff5001 87px,#ff9000 91px,#ffc503 94px,#ffd80c 97px,#ffed16 100px)"></div>
<div style="left:1913px;width:2px;top:1138px;height:84px;background:linear-gradient(rgba(23,3,38,0) 0px,#190329 14px,#270536 26px,#650135 36px,#f1070a 45px,#f80908 53px,#ff5001 60px,#ff6d00 66px,#ff7d00 71px,#ffcf08 75px,#ffc202 78px,#ffd60b 81px,#ffea14 84px)"></div>
<div style="left:1915px;width:2px;top:1152px;height:70px;background:linear-gradient(rgba(24,3,39,0) 0px,#1d032c 12px,#31063e 22px,#e5050f 31px,#ed060c 39px,#ff1105 46px,#ff2d03 52px,#ff7e00 57px,#ff8b00 61px,#ffbf01 64px,#ffd30a 67px,#ffe713 70px)"></div>
<div style="left:1917px;width:2px;top:1152px;height:70px;background:linear-gradient(rgba(23,2,37,0) 0px,#190329 12px,#270535 22px,#8d002b 31px,#f2070a 39px,#ff2703 46px,#ff4102 52px,#ff6f00 57px,#ff7800 61px,#ffbc00 64px,#ffd008 67px,#ffe411 70px)"></div>
<div style="left:1919px;width:2px;top:1164px;height:58px;background:linear-gradient(rgba(24,3,39,0) 0px,#20042f 10px,#4c0339 19px,#f0070b 27px,#ff2603 34px,#ff5201 40px,#ff5001 45px,#ffa200 49px,#ffb800 52px,#ffcd07 55px,#ffe110 58px)"></div>
<div style="left:1921px;width:2px;top:1164px;height:58px;background:linear-gradient(rgba(23,2,37,0) 0px,#1a032a 10px,#290538 19px,#aa0022 27px,#fc0906 34px,#ff5701 40px,#ff5601 45px,#ff6300 49px,#ffb400 52px,#ffca06 55px,#ffde0f 58px)"></div>
<div style="left:1923px;width:2px;top:1164px;height:58px;background:linear-gradient(rgba(21,2,35,0) 0px,#180328 10px,#220432 19px,#620136 27px,#ff3103 34px,#ff4f01 40px,#ff7c00 45px,#ffa700 49px,#ffb000 52px,#ffc704 55px,#ffdb0d 58px)"></div>
<div style="left:1925px;width:2px;top:1174px;height:48px;background:linear-gradient(rgba(23,3,37,0) 0px,#1e042e 9px,#32063e 17px,#ce0018 24px,#ff7000 30px,#ff8600 35px,#ff7c00 39px,#ffac00 42px,#ffc403 45px,#ffd80c 48px)"></div>
<div style="left:1927px;width:2px;top:1174px;height:48px;background:linear-gradient(rgba(22,2,35,0) 0px,#1b032b 9px,#2b053a 17px,#670135 24px,#ff3902 30px,#ff5c00 35px,#ff6e00 39px,#ffa800 42px,#ffc102 45px,#ffd50b 48px)"></div>
<div style="left:1929px;width:2px;top:1174px;height:48px;background:linear-gradient(rgba(20,2,33,0) 0px,#190328 9px,#250534 17px,#4d0339 24px,#d70214 30px,#ff7800 35px,#ff6100 39px,#ffa500 42px,#ffbe00 45px,#ffd209 48px)"></div>
<div style="left:1931px;width:2px;top:1183px;height:39px;background:linear-gradient(rgba(23,2,37,0) 0px,#220431 8px,#3e053c 15px,#84002d 21px,#ff3702 26px,#ff5501 30px,#ffa100 33px,#ffbb00 36px,#ffcf08 39px)"></div>
<div style="left:1933px;width:2px;top:1183px;height:39px;background:linear-gradient(rgba(21,2,34,0) 0px,#210430 8px,#35063d 15px,#730033 21px,#e20410 26px,#ff6f00 30px,#ff9d00 33px,#ffb700 36px,#ffcc06 39px)"></div>
<div style="left:1935px;width:2px;top:1183px;height:39px;background:linear-gradient(rgba(20,2,33,0) 0px,#1f042f 8px,#36053d 15px,#700034 21px,#c7001a 26px,#ff3a02 30px,#ff9900 33px,#ffb300 36px,#ffc905 39px)"></div>
<div style="left:1937px;width:2px;top:1183px;height:39px;background:linear-gradient(rgba(21,2,34,0) 0px,#200430 8px,#3b053c 15px,#81002f 21px,#ef070b 26px,#ff5201 30px,#ff8200 33px,#ff9b00 36px,#ffb400 39px)"></div>
<div style="left:1939px;width:2px;top:1183px;height:39px;background:linear-gradient(rgba(20,2,32,0) 0px,#1e042e 8px,#2e063c 15px,#600136 21px,#c90019 26px,#ff6800 30px,#ff6b00 33px,#ff8200 36px,#ff9b00 39px)"></div>
<div style="left:1941px;width:2px;top:1183px;height:39px;background:linear-gradient(rgba(19,2,30,0) 0px,#1c032c 8px,#2a0539 15px,#4d0339 21px,#c2001b 26px,#ff2204 30px,#ff5601 33px,#ff6a00 36px,#ff8200 39px)"></div>
<div style="left:1943px;width:2px;top:662px;height:560px;background:linear-gradient(rgba(22,2,36,0) 0px,#1e042d 60px,#2a0538 115px,#750032 165px,#790031 210px,#91002a 250px,#990027 285px,#ac0022 318px,#a70023 348px,#b30020 375px,#af0021 400px,#cf0017 422px,#d50215 442px,#d90213 460px,#df0411 476px,#d70214 490px,#d80214 502px,#d70214 512px,#f2070a 521px,#f3080a 529px,#f0070b 536px,#ff2503 542px,#ff2304 547px,#ff3a02 551px,#ff6b00 554px,#ff8200 557px,#ff9b00 560px)"></div>
<div style="left:1945px;width:2px;top:662px;height:560px;background:linear-gradient(rgba(20,2,33,0) 0px,#1b032b 60px,#240433 115px,#550238 165px,#a40024 210px,#a50024 250px,#b9001e 285px,#d10116 318px,#d10116 348px,#d50215 375px,#ed060c 400px,#ec060c 422px,#f80908 442px,#e7050e 460px,#f0070b 476px,#ff1404 490px,#f3080a 502px,#f40809 512px,#fa0907 521px,#ff2703 529px,#ff2304 536px,#ff8000 542px,#ff6700 547px,#ff8700 551px,#ffd50b 554px,#ffea14 557px,#ffff1e 560px)"></div>
<div style="left:1947px;width:2px;top:722px;height:500px;background:linear-gradient(rgba(22,2,36,0) 0px,#1d032d 55px,#240433 105px,#6f0034 150px,#ab0022 190px,#a00025 225px,#a70023 258px,#cb0019 288px,#bf001c 315px,#df0411 340px,#ce0018 362px,#dc0312 382px,#e7050e 400px,#e10410 416px,#dd0312 430px,#fc0906 442px,#e8050e 452px,#f70808 461px,#ff1005 469px,#ff4b01 476px,#ff5901 482px,#ff8700 487px,#ff8500 491px,#ffd50b 494px,#ffea14 497px,#ffff1e 500px)"></div>
<div style="left:1949px;width:2px;top:777px;height:445px;background:linear-gradient(rgba(23,3,38,0) 0px,#1e042e 50px,#260535 95px,#960028 135px,#960028 170px,#b8001e 203px,#c2001b 233px,#ce0018 260px,#d30116 285px,#c90019 307px,#d70214 327px,#e20410 345px,#e6050f 361px,#dc0312 375px,#e6050f 387px,#e8050e 397px,#ff0b05 406px,#ff0f05 414px,#ff4102 421px,#ff5e00 427px,#ff8e00 432px,#ffba00 436px,#ffd50b 439px,#ffea14 442px,#ffff1e 445px)"></div>
<div style="left:1951px;width:2px;top:777px;height:445px;background:linear-gradient(rgba(19,2,32,0) 0px,#180328 50px,#1f042f 95px,#280537 135px,#ab0022 170px,#a50024 203px,#c7001a 233px,#b20020 260px,#c1001b 285px,#c0001c 307px,#d30116 327px,#df0411 345px,#df0411 361px,#e8050e 375px,#f70808 387px,#f1070a 397px,#f2070a 406px,#ff0f05 414px,#ff6400 421px,#ff6800 427px,#ffa500 432px,#ffa900 436px,#ffd50b 439px,#ffea14 442px,#ffff1e 445px)"></div>
<div style="left:1953px;width:2px;top:827px;height:395px;background:linear-gradient(rgba(20,2,33,0) 0px,#190328 45px,#1f042e 85px,#250434 120px,#b4001f 153px,#b10020 183px,#c3001b 210px,#cf0017 235px,#ce0017 257px,#d20116 277px,#e30410 295px,#d40115 311px,#da0313 325px,#db0313 337px,#ed060c 347px,#e9060d 356px,#ff1205 364px,#ff3e02 371px,#ff6400 377px,#ff8400 382px,#ffd90c 386px,#ffd50b 389px,#ffea14 392px,#ffff1e 395px)"></div>
<div style="left:1955px;width:2px;top:872px;height:350px;background:linear-gradient(rgba(20,2,33,0) 0px,#190328 40px,#1e032d 75px,#230432 108px,#9a0027 138px,#a80023 165px,#b7001e 190px,#a00025 212px,#c90019 232px,#bf001c 250px,#c0001c 266px,#d90214 280px,#d60215 292px,#db0313 302px,#f1070a 311px,#f90907 319px,#ff2b03 326px,#ff3902 332px,#ff6000 337px,#ff7b00 341px,#ffd50b 344px,#ffea14 347px,#ffff1e 350px)"></div>
<div style="left:1957px;width:2px;top:947px;height:275px;background:linear-gradient(rgba(24,3,38,0) 0px,#1c032c 33px,#210430 63px,#620136 90px,#90002a 115px,#9a0027 137px,#b8001e 157px,#a90023 175px,#c3001b 191px,#b5001f 205px,#c5001a 217px,#e10410 227px,#d90214 236px,#f50809 244px,#ff3e02 251px,#ff5601 257px,#ff8100 262px,#ff8b00 266px,#ffd50b 269px,#ffea14 272px,#ffff1e 275px)"></div>
<div style="left:1959px;width:2px;top:980px;height:242px;background:linear-gradient(rgba(22,2,36,0) 0px,#190329 30px,#1d032d 57px,#34063d 82px,#8f002a 104px,#8a002c 124px,#88002c 142px,#a20025 158px,#ab0022 172px,#b10020 184px,#d40115 194px,#d70214 203px,#ff1f04 211px,#ff2f03 218px,#ff5b00 224px,#ff8000 229px,#ff7000 233px,#ffd50b 236px,#ffea14 239px,#ffff1e 242px)"></div>
<div style="left:1961px;width:2px;top:1037px;height:185px;background:linear-gradient(rgba(22,2,37,0) 0px,#190329 25px,#200430 47px,#87002d 67px,#83002e 85px,#ac0022 101px,#9f0025 115px,#b8001e 127px,#d20116 137px,#f1070a 146px,#ff2a03 154px,#ff6200 161px,#ff6900 167px,#ff9b00 172px,#ffb000 176px,#ffcb06 179px,#ffdf0f 182px,#fff419 185px)"></div>
<div style="left:1963px;width:2px;top:1104px;height:118px;background:linear-gradient(rgba(23,3,38,0) 0px,#230432 18px,#88002c 34px,#a00025 48px,#970028 60px,#c80019 70px,#de0312 79px,#ff0e05 87px,#ff2a03 94px,#ff5301 100px,#ff9c00 105px,#ffba00 109px,#ffbe00 112px,#ffd109 115px,#ffe612 118px)"></div>
<div style="left:1965px;width:2px;top:1152px;height:70px;background:linear-gradient(rgba(23,3,38,0) 0px,#2e063c 12px,#bb001d 22px,#e5050f 31px,#ff1305 39px,#ff2004 46px,#ff4602 52px,#ff5301 57px,#ff7800 61px,#ffac00 64px,#ffc403 67px,#ffd70c 70px)"></div>
<div style="left:1967px;width:2px;top:1183px;height:39px;background:linear-gradient(rgba(20,2,32,0) 0px,#1e042e 8px,#2d063b 15px,#680135 21px,#a70023 26px,#ff5901 30px,#ff9900 33px,#ffb300 36px,#ffc905 39px)"></div>
<div style="left:1969px;width:2px;top:1183px;height:39px;background:linear-gradient(rgba(18,2,30,0) 0px,#190328 8px,#280536 15px,#4b033a 21px,#930029 26px,#ff0d05 30px,#ff3303 33px,#ff4402 36px,#ff5701 39px)"></div>
<div style="left:1971px;width:2px;top:1191px;height:31px;background:linear-gradient(rgba(19,2,31,0) 0px,#1c032c 7px,#280537 13px,#47043a 18px,#660135 22px,#ad0021 25px,#c90019 28px,#f70808 31px)"></div>
<div style="left:1973px;width:2px;top:1198px;height:24px;background:linear-gradient(rgba(21,2,35,0) 0px,#1f042f 6px,#2a0539 11px,#40043b 15px,#720033 18px,#9f0026 21px,#f70808 24px)"></div>
<div style="left:1975px;width:2px;top:1204px;height:18px;background:linear-gradient(rgba(20,2,32,0) 0px,#190328 5px,#260535 9px,#3f053c 12px,#83002e 15px,#f70808 18px)"></div>
<div style="left:1977px;width:2px;top:1204px;height:18px;background:linear-gradient(rgba(20,2,32,0) 0px,#190328 5px,#270536 9px,#3f053c 12px,#83002e 15px,#f70808 18px)"></div>
<div style="left:891.0px;width:4px;top:0px;height:1222px;background:#880030;mix-blend-mode:lighten"></div>
<div style="left:946.0px;width:4px;top:0px;height:1222px;background:#6a0034;mix-blend-mode:lighten"></div>
<div style="left:982.0px;width:4px;top:0px;height:1222px;background:#880030;mix-blend-mode:lighten"></div>
<div style="left:1107.0px;width:4px;top:0px;height:1222px;background:#66003a;mix-blend-mode:lighten"></div>
<div style="left:1569.5px;width:4px;top:0px;height:1222px;background:#880030;mix-blend-mode:lighten"></div>
<div style="left:1881.0px;width:4px;top:0px;height:1222px;background:#62003a;mix-blend-mode:lighten"></div>
<div style="left:1960.5px;width:4px;top:195px;height:1027px;background:#900030;mix-blend-mode:lighten"></div>
<div style="left:829px;width:90px;top:952px;height:248px;background:repeating-linear-gradient(180deg,rgba(14,0,20,0.3) 0 3px,rgba(0,0,0,0) 3px 8px);clip-path:polygon(0 0,12% 0,100% 100%,0 100%)"></div>
<div style="left:1827px;width:105px;top:972px;height:228px;background:repeating-linear-gradient(180deg,rgba(14,0,20,0.3) 0 3px,rgba(0,0,0,0) 3px 8px);clip-path:polygon(0 0,12% 0,100% 100%,0 100%)"></div>
<div style="left:949px;width:95px;top:1042px;height:158px;background:repeating-linear-gradient(180deg,rgba(14,0,20,0.3) 0 3px,rgba(0,0,0,0) 3px 8px);clip-path:polygon(0 0,12% 0,100% 100%,0 100%)"></div>
<div style="left:1329px;width:95px;top:1052px;height:148px;background:repeating-linear-gradient(180deg,rgba(14,0,20,0.3) 0 3px,rgba(0,0,0,0) 3px 8px);clip-path:polygon(0 0,12% 0,100% 100%,0 100%)"></div>
<div style="left:817.5px;width:3px;top:202px;height:1020px;background:linear-gradient(rgba(90,0,50,0),#5a0036 30%,#8a0030);mix-blend-mode:lighten"></div>
<div style="left:1062.5px;width:3px;top:752px;height:470px;background:linear-gradient(rgba(90,0,50,0),#5a0036 30%,#8a0030);mix-blend-mode:lighten"></div>
<div style="left:1089.5px;width:3px;top:832px;height:390px;background:linear-gradient(rgba(90,0,50,0),#5a0036 30%,#8a0030);mix-blend-mode:lighten"></div>
<div style="left:1153.5px;width:3px;top:772px;height:450px;background:linear-gradient(rgba(90,0,50,0),#5a0036 30%,#8a0030);mix-blend-mode:lighten"></div>
<div style="left:1226.5px;width:3px;top:882px;height:340px;background:linear-gradient(rgba(90,0,50,0),#5a0036 30%,#8a0030);mix-blend-mode:lighten"></div>
<div style="left:1314.5px;width:3px;top:762px;height:460px;background:linear-gradient(rgba(90,0,50,0),#5a0036 30%,#8a0030);mix-blend-mode:lighten"></div>
<div style="left:1500.5px;width:3px;top:542px;height:680px;background:linear-gradient(rgba(90,0,50,0),#5a0036 30%,#8a0030);mix-blend-mode:lighten"></div>
<div style="left:1630.5px;width:3px;top:812px;height:410px;background:linear-gradient(rgba(90,0,50,0),#5a0036 30%,#8a0030);mix-blend-mode:lighten"></div>
<div style="left:1815.5px;width:3px;top:692px;height:530px;background:linear-gradient(rgba(90,0,50,0),#5a0036 30%,#8a0030);mix-blend-mode:lighten"></div>
<div style="left:1942.5px;width:3px;top:722px;height:500px;background:linear-gradient(rgba(90,0,50,0),#5a0036 30%,#8a0030);mix-blend-mode:lighten"></div>
<svg width="2592" height="1222" style="position:absolute;left:0;top:0"><filter id="sp" x="0" y="0" width="100%" height="100%" color-interpolation-filters="sRGB"><feTurbulence type="fractalNoise" baseFrequency="0.34 0.34" numOctaves="1" seed="5"/><feColorMatrix type="matrix" values="0 0 0 0 0.02  0 0 0 0 0  0 0 0 0 0.035  -6 0 0 0 2.75"/><feGaussianBlur stdDeviation="0.5"/><feComponentTransfer><feFuncA type="linear" slope="0.6"/></feComponentTransfer></filter><rect width="2592" height="1222" filter="url(#sp)"/></svg>
<svg width="2592" height="1222" style="position:absolute;left:0;top:0;mix-blend-mode:lighten"><filter id="sp2" x="0" y="0" width="100%" height="100%" color-interpolation-filters="sRGB"><feTurbulence type="fractalNoise" baseFrequency="0.22 0.22" numOctaves="1" seed="11"/><feColorMatrix type="matrix" values="0 0 0 0 0.13  0 0 0 0 0.015  0 0 0 0 0.2  6 0 0 0 -3.3"/><feGaussianBlur stdDeviation="0.7"/><feComponentTransfer><feFuncA type="linear" slope="0.45"/></feComponentTransfer></filter><rect width="2592" height="1222" filter="url(#sp2)"/></svg>
</div>
<svg width="2694" height="1802" viewBox="0 0 2694 1802" style="position:absolute;left:0;top:0" font-family='"Liberation Sans", sans-serif'><rect x="748" y="498" width="2" height="1222" fill="#ffbdb5"/>
<text x="22.0" y="32.0" font-size="24.5" fill="#d6d6d6" text-anchor="start" textLength="988.0" lengthAdjust="spacingAndGlyphs" stroke="#d6d6d6" stroke-width="0.35">Editor: ISM2SBA2--shakers_bass_drums_BuskingCity01_A_ambiX4_HOA3--256000.fer.dec.EXT.fx_2 *</text>
<rect x="22" y="44" width="1028" height="4" fill="#b9b9b9"/>
<rect x="1034" y="18" width="16" height="2" fill="#bdbdbd"/>
<rect x="1034" y="24" width="16" height="2" fill="#bdbdbd"/>
<rect x="1034" y="30" width="16" height="2" fill="#bdbdbd"/>
<text x="1095.0" y="32.0" font-size="24.5" fill="#8e8e8e" text-anchor="start" textLength="76.0" lengthAdjust="spacingAndGlyphs" stroke="#8e8e8e" stroke-width="0.35">Mischer</text>
<rect x="16" y="68" width="2592" height="56" fill="#000"/>
<rect x="994" y="68" width="1337" height="56" rx="6" fill="#222222" stroke="#575757" stroke-width="4"/>
<rect x="16" y="96" width="2592" height="1.6" fill="#14e08e"/>
<rect x="987" y="72" width="14" height="48" rx="4" fill="#575757"/>
<rect x="991" y="78" width="2" height="36" fill="#262626"/>
<rect x="995" y="78" width="2" height="36" fill="#262626"/>
<rect x="2324.5" y="72" width="14" height="48" rx="4" fill="#575757"/>
<rect x="2328.5" y="78" width="2" height="36" fill="#262626"/>
<rect x="2332.5" y="78" width="2" height="36" fill="#262626"/>
<rect x="1370" y="71" width="2" height="50" fill="#d9232e"/>
<g fill="none" stroke="#b4b4b4" stroke-width="2.1">
<circle cx="2651" cy="94.8" r="7.7"/><line x1="2656.6" y1="100.4" x2="2663.5" y2="107.3" stroke-width="3.2" stroke-linecap="round"/>
<line x1="2646" y1="94.8" x2="2656" y2="94.8"/></g>
<g fill="#b4b4b4"><path d="M2634 95 L2639.2 90.8 V99.3Z M2668 95 L2663 90.8 V99.3Z M2651 77.9 L2655.4 83.2 H2646.6Z M2651 112 L2655.4 106.9 H2646.6Z"/></g>
<rect x="14" y="158" width="2596" height="2" fill="#050505"/>
<rect x="14" y="158" width="2" height="50" fill="#050505"/>
<rect x="16" y="160" width="2592" height="48" fill="#1c1c1c"/>
<text x="22.0" y="186.0" font-size="24" fill="#a9a9a9" text-anchor="start" textLength="40.0" lengthAdjust="spacingAndGlyphs" stroke="#a9a9a9" stroke-width="0.35">hms</text>
<path d="M19.8 200V208M44.9 200V208M70.1 200V208M95.2 200V208M120.3 194V208M145.4 200V208M170.5 200V208M195.7 200V208M220.8 200V208M245.9 194V208M271.0 200V208M296.1 200V208M321.3 200V208M346.4 200V208M371.5 194V208M396.6 200V208M421.7 200V208M446.8 200V208M472.0 200V208M497.1 194V208M522.2 200V208M547.3 200V208M572.4 200V208M597.6 200V208M622.7 194V208M647.8 200V208M672.9 200V208M698.0 200V208M723.2 200V208M748.3 194V208M773.4 200V208M798.5 200V208M823.6 200V208M848.8 200V208M873.9 194V208M899.0 200V208M924.1 200V208M949.2 200V208M974.3 200V208M999.5 194V208M1024.6 200V208M1049.7 200V208M1074.8 200V208M1099.9 200V208M1125.1 194V208M1150.2 200V208M1175.3 200V208M1200.4 200V208M1225.5 200V208M1250.7 194V208M1275.8 200V208M1300.9 200V208M1326.0 200V208M1351.1 200V208M1376.2 194V208M1401.4 200V208M1426.5 200V208M1451.6 200V208M1476.7 200V208M1501.8 194V208M1527.0 200V208M1552.1 200V208M1577.2 200V208M1602.3 200V208M1627.4 194V208M1652.6 200V208M1677.7 200V208M1702.8 200V208M1727.9 200V208M1753.0 194V208M1778.2 200V208M1803.3 200V208M1828.4 200V208M1853.5 200V208M1878.6 194V208M1903.7 200V208M1928.9 200V208M1954.0 200V208M1979.1 200V208M2004.2 194V208M2029.3 200V208M2054.5 200V208M2079.6 200V208M2104.7 200V208M2129.8 194V208M2154.9 200V208M2180.1 200V208M2205.2 200V208M2230.3 200V208M2255.4 194V208M2280.5 200V208M2305.7 200V208M2330.8 200V208M2355.9 200V208M2381.0 194V208M2406.1 200V208M2431.2 200V208M2456.4 200V208M2481.5 200V208M2506.6 194V208M2531.7 200V208M2556.8 200V208M2582.0 200V208M2607.1 200V208" stroke="#9a9a9a" stroke-width="2"/>
<text x="120.3" y="186.0" font-size="22" fill="#a9a9a9" text-anchor="middle" textLength="27.0" lengthAdjust="spacingAndGlyphs" stroke="#a9a9a9" stroke-width="0.35">8,0</text>
<text x="245.9" y="186.0" font-size="22" fill="#a9a9a9" text-anchor="middle" textLength="27.0" lengthAdjust="spacingAndGlyphs" stroke="#a9a9a9" stroke-width="0.35">8,5</text>
<text x="371.5" y="186.0" font-size="22" fill="#a9a9a9" text-anchor="middle" textLength="27.0" lengthAdjust="spacingAndGlyphs" stroke="#a9a9a9" stroke-width="0.35">9,0</text>
<text x="497.1" y="186.0" font-size="22" fill="#a9a9a9" text-anchor="middle" textLength="27.0" lengthAdjust="spacingAndGlyphs" stroke="#a9a9a9" stroke-width="0.35">9,5</text>
<text x="622.7" y="186.0" font-size="22" fill="#a9a9a9" text-anchor="middle" textLength="39.0" lengthAdjust="spacingAndGlyphs" stroke="#a9a9a9" stroke-width="0.35">10,0</text>
<text x="748.3" y="186.0" font-size="22" fill="#a9a9a9" text-anchor="middle" textLength="39.0" lengthAdjust="spacingAndGlyphs" stroke="#a9a9a9" stroke-width="0.35">10,5</text>
<text x="873.9" y="186.0" font-size="22" fill="#a9a9a9" text-anchor="middle" textLength="39.0" lengthAdjust="spacingAndGlyphs" stroke="#a9a9a9" stroke-width="0.35">11,0</text>
<text x="999.5" y="186.0" font-size="22" fill="#a9a9a9" text-anchor="middle" textLength="39.0" lengthAdjust="spacingAndGlyphs" stroke="#a9a9a9" stroke-width="0.35">11,5</text>
<text x="1125.1" y="186.0" font-size="22" fill="#a9a9a9" text-anchor="middle" textLength="39.0" lengthAdjust="spacingAndGlyphs" stroke="#a9a9a9" stroke-width="0.35">12,0</text>
<text x="1250.7" y="186.0" font-size="22" fill="#a9a9a9" text-anchor="middle" textLength="39.0" lengthAdjust="spacingAndGlyphs" stroke="#a9a9a9" stroke-width="0.35">12,5</text>
<text x="1376.2" y="186.0" font-size="22" fill="#a9a9a9" text-anchor="middle" textLength="39.0" lengthAdjust="spacingAndGlyphs" stroke="#a9a9a9" stroke-width="0.35">13,0</text>
<text x="1501.8" y="186.0" font-size="22" fill="#a9a9a9" text-anchor="middle" textLength="39.0" lengthAdjust="spacingAndGlyphs" stroke="#a9a9a9" stroke-width="0.35">13,5</text>
<text x="1627.4" y="186.0" font-size="22" fill="#a9a9a9" text-anchor="middle" textLength="39.0" lengthAdjust="spacingAndGlyphs" stroke="#a9a9a9" stroke-width="0.35">14,0</text>
<text x="1753.0" y="186.0" font-size="22" fill="#a9a9a9" text-anchor="middle" textLength="39.0" lengthAdjust="spacingAndGlyphs" stroke="#a9a9a9" stroke-width="0.35">14,5</text>
<text x="1878.6" y="186.0" font-size="22" fill="#a9a9a9" text-anchor="middle" textLength="39.0" lengthAdjust="spacingAndGlyphs" stroke="#a9a9a9" stroke-width="0.35">15,0</text>
<text x="2004.2" y="186.0" font-size="22" fill="#a9a9a9" text-anchor="middle" textLength="39.0" lengthAdjust="spacingAndGlyphs" stroke="#a9a9a9" stroke-width="0.35">15,5</text>
<text x="2129.8" y="186.0" font-size="22" fill="#a9a9a9" text-anchor="middle" textLength="39.0" lengthAdjust="spacingAndGlyphs" stroke="#a9a9a9" stroke-width="0.35">16,0</text>
<text x="2255.4" y="186.0" font-size="22" fill="#a9a9a9" text-anchor="middle" textLength="39.0" lengthAdjust="spacingAndGlyphs" stroke="#a9a9a9" stroke-width="0.35">16,5</text>
<text x="2381.0" y="186.0" font-size="22" fill="#a9a9a9" text-anchor="middle" textLength="39.0" lengthAdjust="spacingAndGlyphs" stroke="#a9a9a9" stroke-width="0.35">17,0</text>
<text x="2506.6" y="186.0" font-size="22" fill="#a9a9a9" text-anchor="middle" textLength="39.0" lengthAdjust="spacingAndGlyphs" stroke="#a9a9a9" stroke-width="0.35">17,5</text>
<rect x="2623" y="161.5" width="40.5" height="41" rx="5" fill="#121212" stroke="#252525" stroke-width="2"/>
<path d="M2634 194 L2632 181.5 A12 12 0 0 1 2656 181.5 L2654 194 H2646.2 L2648.4 182 A4.4 4.4 0 0 0 2639.6 182 L2641.8 194Z" fill="#2a7de8"/>
<path d="M2635 186 H2639 L2640.2 191.7 H2636Z M2653 186 H2649 L2647.8 191.7 H2652Z" fill="#0f2b57"/>
<rect x="2666" y="161.5" width="40" height="41" rx="5" fill="#121212" stroke="#252525" stroke-width="2"/>
<path d="M2678.8 168 H2693.2 V177 L2686 181 L2678.8 177Z" fill="#2a7de8"/><rect x="2685" y="175" width="2" height="6" fill="#111"/><rect x="2685" y="181" width="2.2" height="15" fill="#2a7de8"/>
<rect x="16" y="208" width="2592" height="272" fill="#000"/>
<path d="M16 220.5H2608M16 260.5H2608M16 302.5H2608M16 384.5H2608M16 426.5H2608M16 466.5H2608M120.5 208V480M246.5 208V480M371.5 208V480M497.5 208V480M623.5 208V480M748.5 208V480M874.5 208V480M999.5 208V480M1125.5 208V480M1251.5 208V480M1376.5 208V480M1502.5 208V480M1627.5 208V480M1753.5 208V480M1879.5 208V480M2004.5 208V480M2130.5 208V480M2255.5 208V480M2381.5 208V480M2507.5 208V480" stroke="#0c2c0c" stroke-width="1"/>
<rect x="16" y="344" width="2592" height="2" fill="#14d98e"/>
<path d="M1413.5 89.9V102.0M1414.5 89.2V102.4M1415.5 89.2V102.7M1416.5 90.2V102.1M1417.5 91.4V102.6M1418.5 90.3V102.5M1419.5 90.3V102.5M1420.5 91.4V102.2M1421.5 91.1V102.0M1422.5 91.1V102.3M1423.5 91.8V101.9M1424.5 92.0V101.6M1425.5 92.2V101.9M1426.5 92.0V101.9M1427.5 92.0V101.8M1428.5 91.8V100.5M1429.5 91.5V101.5M1430.5 91.5V101.4M1431.5 91.8V101.5M1432.5 92.0V101.1M1433.5 92.0V101.1M1434.5 92.4V101.1M1435.5 92.0V101.1M1436.5 92.0V100.9M1437.5 92.6V99.8M1438.5 93.6V99.8M1439.5 93.3V100.6M1440.5 93.3V100.3M1441.5 93.7V100.3M1442.5 93.6V100.5M1443.5 93.7V100.2M1444.5 94.3V100.2M1445.5 94.3V100.2M1446.5 93.8V100.0M1447.5 93.6V100.0M1448.5 93.6V99.1M1449.5 92.5V99.9M1450.5 92.6V100.0M1451.5 92.6V100.0M1452.5 92.9V100.2M1453.5 93.0V100.2M1454.5 93.6V100.2M1455.5 93.6V100.1M1456.5 93.6V100.0M1457.5 94.0V100.0M1458.5 94.7V99.5M1459.5 94.7V99.6M1460.5 95.1V98.8M1461.5 95.6V98.2M1462.5 95.6V98.2M1463.5 95.7V97.9M1464.5 95.8V97.8M1465.5 95.8V97.8M1466.5 95.8V97.8M1471.5 95.8V97.8M1472.5 95.8V97.8M1473.5 95.8V97.8M1474.5 95.8V97.8M1475.5 95.2V99.3M1476.5 95.2V99.8M1477.5 94.1V99.8M1478.5 94.1V99.8M1479.5 94.2V99.9M1480.5 92.8V100.8M1481.5 92.7V101.2M1482.5 92.7V101.2M1483.5 93.7V99.7M1484.5 91.8V99.5M1485.5 91.8V99.8M1486.5 93.5V99.5M1487.5 93.5V99.5M1488.5 93.1V99.3M1489.5 93.1V99.4M1490.5 93.6V99.1M1491.5 91.6V100.7M1492.5 91.6V99.0M1493.5 91.9V100.6M1494.5 91.9V100.6M1495.5 93.7V99.3M1496.5 94.0V99.2M1497.5 93.0V100.0M1498.5 93.0V100.3M1499.5 93.0V100.1M1500.5 93.2V100.0M1501.5 93.5V100.0M1502.5 93.8V100.0M1503.5 93.8V100.0M1504.5 94.8V98.7M1505.5 93.4V100.3M1506.5 93.3V101.1M1507.5 93.2V101.1M1508.5 93.9V101.5M1509.5 91.9V102.3M1510.5 93.1V102.3M1511.5 92.7V100.5M1512.5 92.9V100.5M1513.5 90.0V103.1M1514.5 90.0V101.5M1515.5 90.1V104.6M1516.5 91.2V105.0M1517.5 91.2V105.0M1518.5 91.7V99.4M1519.5 90.6V101.6M1520.5 92.6V102.3M1521.5 92.9V102.3M1522.5 92.3V101.6M1523.5 92.7V101.3M1524.5 92.7V101.3M1525.5 93.0V99.8M1526.5 93.3V99.8M1527.5 94.6V99.3M1528.5 94.3V100.3M1529.5 94.3V99.5M1530.5 94.7V99.6M1531.5 95.2V99.6M1532.5 95.7V99.2M1533.5 95.7V98.8M1534.5 95.8V98.6M1535.5 95.8V98.1M1536.5 95.8V98.1M1537.5 95.8V97.8M1538.5 95.8V97.8M1539.5 94.8V99.4M1540.5 94.2V99.4M1541.5 92.5V101.0M1542.5 92.5V101.0M1543.5 91.7V101.0M1544.5 91.7V101.6M1545.5 90.9V101.5M1546.5 90.9V99.8M1547.5 92.5V100.2M1548.5 90.8V100.3M1549.5 90.9V100.0M1550.5 90.7V101.4M1551.5 91.1V101.2M1552.5 90.7V101.9M1553.5 90.6V101.9M1554.5 90.7V101.9M1555.5 90.9V101.3M1556.5 92.5V100.3M1557.5 92.5V100.1M1558.5 91.1V101.9M1559.5 90.5V101.9M1560.5 90.5V101.6M1561.5 92.8V100.4M1562.5 92.8V99.7M1563.5 90.8V101.9M1564.5 90.8V101.4M1565.5 90.8V102.0M1566.5 94.7V102.0M1567.5 92.7V100.4M1568.5 93.4V100.4M1569.5 91.7V101.9M1570.5 91.5V101.9M1571.5 91.5V100.4M1572.5 91.9V101.5M1573.5 91.4V101.5M1574.5 93.8V101.2M1575.5 91.2V101.3M1576.5 91.4V101.3M1577.5 91.2V101.6M1578.5 92.8V99.4M1579.5 91.4V101.2M1580.5 91.4V101.2M1581.5 93.2V101.1M1582.5 94.6V98.5M1583.5 95.2V98.4M1584.5 91.5V101.3M1585.5 91.2V100.1M1586.5 91.3V101.0M1587.5 91.0V98.0M1588.5 91.0V99.4M1589.5 92.7V101.2M1590.5 92.7V101.2M1591.5 93.0V101.9M1592.5 93.0V101.9M1593.5 93.0V98.2M1594.5 91.0V100.6M1595.5 90.8V100.8M1596.5 90.9V102.7M1597.5 91.0V102.8M1598.5 92.9V98.2M1599.5 90.8V103.1M1600.5 90.8V103.1M1601.5 91.0V102.6M1602.5 91.0V102.6M1603.5 94.4V102.2M1604.5 93.0V102.9M1605.5 90.0V102.9M1606.5 92.9V101.0M1607.5 91.7V101.2M1608.5 90.1V101.2M1609.5 92.5V100.7M1610.5 92.6V100.7M1611.5 92.3V102.7M1612.5 89.8V100.7M1613.5 89.6V102.8M1614.5 89.6V102.8M1615.5 91.7V101.1M1616.5 91.5V101.2M1617.5 91.4V101.5M1618.5 91.8V103.5M1619.5 91.8V101.4M1620.5 92.4V100.8M1621.5 91.0V102.1M1622.5 90.6V102.1M1623.5 92.8V101.6M1624.5 91.5V101.6M1625.5 91.5V101.3M1626.5 92.1V99.9M1627.5 92.1V100.8M1628.5 93.7V100.7M1629.5 93.2V100.4M1630.5 93.2V100.3M1631.5 93.5V100.4M1632.5 93.5V100.4M1633.5 93.8V99.7M1634.5 95.2V98.5M1635.5 95.1V98.6M1636.5 94.4V99.4M1637.5 94.2V99.4M1638.5 95.0V98.6M1639.5 95.5V98.7M1640.5 95.2V98.7M1641.5 95.2V98.5M1642.5 95.8V97.9M1643.5 95.8V97.8M1644.5 95.8V97.8M1669.5 94.9V100.3M1670.5 93.7V102.2M1671.5 93.7V102.7M1672.5 93.5V103.0M1673.5 93.5V103.0M1674.5 92.8V101.8M1675.5 92.8V98.5M1676.5 94.1V103.2M1677.5 92.2V103.2M1678.5 92.0V103.2M1679.5 92.0V101.1M1680.5 93.4V101.2M1681.5 93.4V101.2M1682.5 93.4V100.2M1683.5 93.8V102.2M1684.5 93.5V100.9M1685.5 91.4V101.8M1686.5 92.8V100.1M1687.5 95.7V100.1M1688.5 92.9V100.3M1689.5 93.1V100.3M1690.5 95.1V98.8M1691.5 93.6V100.3M1692.5 90.9V102.4M1693.5 90.9V102.4M1694.5 91.0V102.6M1695.5 92.9V100.6M1696.5 91.0V102.2M1697.5 93.6V100.9M1698.5 93.4V100.7M1699.5 91.5V101.9M1700.5 91.5V101.9M1701.5 92.0V101.9M1702.5 92.0V101.4M1703.5 92.8V99.8M1704.5 92.8V100.9M1705.5 92.4V100.9M1706.5 92.4V99.8M1707.5 92.3V101.6M1708.5 92.3V102.3M1709.5 93.9V102.3M1710.5 93.2V101.1M1711.5 93.2V101.1M1712.5 93.4V100.1M1713.5 93.2V102.5M1714.5 92.2V102.3M1715.5 93.7V102.4M1716.5 93.7V101.2M1717.5 93.0V102.8M1718.5 92.8V102.9M1719.5 92.8V102.9M1720.5 94.3V102.2M1721.5 94.5V100.7M1722.5 94.5V100.7M1723.5 94.2V101.8M1724.5 94.2V101.8M1725.5 94.5V100.9M1726.5 94.7V100.8M1727.5 94.7V100.8M1728.5 95.3V100.3M1729.5 95.8V98.4M1730.5 95.8V98.4M1731.5 95.8V97.8M1732.5 95.8V97.8M1733.5 95.8V97.8M1734.5 95.8V97.8M1735.5 95.8V97.8M1736.5 95.8V97.8M1737.5 95.8V97.8M1765.5 95.2V99.8M1766.5 94.2V100.3M1767.5 94.2V105.3M1768.5 91.8V106.9M1769.5 91.8V106.9M1770.5 93.8V106.0M1771.5 91.0V106.3M1772.5 91.3V98.5M1773.5 92.8V104.7M1774.5 93.3V104.7M1775.5 93.0V104.6M1776.5 91.5V102.0M1777.5 91.0V103.7M1778.5 91.0V103.7M1779.5 91.5V103.2M1780.5 92.0V103.5M1781.5 92.0V103.5M1782.5 94.0V101.4M1783.5 91.9V103.4M1784.5 91.8V103.6M1785.5 93.7V103.1M1786.5 94.0V103.5M1787.5 95.8V103.1M1788.5 94.4V101.1M1789.5 92.8V102.8M1790.5 92.8V102.8M1791.5 93.0V101.2M1792.5 93.1V102.7M1793.5 93.1V102.7M1794.5 93.3V101.8M1795.5 92.5V102.2M1796.5 92.3V102.6M1797.5 92.3V102.6M1798.5 91.7V102.6M1799.5 91.7V100.0M1800.5 91.3V100.6M1801.5 91.3V100.9M1802.5 91.8V101.7M1803.5 94.2V99.6M1804.5 95.1V98.8M1805.5 95.1V98.5M1806.5 95.6V98.1M1807.5 95.8V97.8M1808.5 95.8V97.8M1832.5 93.9V99.9M1833.5 94.4V99.9M1834.5 92.4V101.3M1835.5 90.6V98.4M1836.5 90.6V99.8M1837.5 95.2V100.3M1838.5 91.0V101.4M1839.5 91.7V101.7M1840.5 93.5V100.3M1841.5 93.8V99.7M1842.5 93.8V100.1M1843.5 92.2V101.6M1844.5 92.2V101.6M1845.5 92.0V102.1M1846.5 92.0V102.1M1847.5 94.0V100.7M1848.5 92.5V101.8M1849.5 92.5V101.8M1850.5 92.2V102.3M1851.5 92.2V102.3M1852.5 92.4V101.5M1853.5 93.7V100.5M1854.5 92.6V101.7M1855.5 93.6V101.9M1856.5 93.6V102.0M1857.5 92.4V100.3M1858.5 93.8V100.3M1859.5 92.7V99.4M1860.5 92.7V99.7M1861.5 93.6V101.6M1862.5 93.9V99.7M1863.5 92.4V100.1M1864.5 92.8V101.6M1865.5 92.8V101.5M1866.5 94.1V99.9M1867.5 92.2V101.7M1868.5 92.7V98.4M1869.5 92.7V100.9M1870.5 93.4V100.7M1871.5 95.0V99.0M1872.5 95.1V98.8M1873.5 95.1V98.8M1874.5 95.8V98.4M1875.5 95.8V98.1M1876.5 95.8V97.8M1926.5 91.9V100.8M1927.5 91.2V101.2M1928.5 91.2V101.2M1929.5 88.5V101.9M1930.5 88.5V101.9M1931.5 89.0V101.6M1932.5 89.4V102.0M1933.5 89.4V102.0M1934.5 90.0V102.3M1935.5 90.7V102.3M1936.5 94.6V101.8M1937.5 91.6V101.9M1938.5 91.6V101.9M1939.5 91.1V101.4M1940.5 91.1V101.4M1941.5 95.1V101.6M1942.5 91.3V101.6M1943.5 91.3V101.1M1944.5 91.7V100.9M1945.5 91.7V100.9M1946.5 91.8V100.9M1947.5 91.8V100.9M1948.5 92.1V100.9M1949.5 91.6V101.0M1950.5 91.6V101.0M1951.5 91.6V101.0M1952.5 91.8V100.6M1953.5 91.8V100.6M1954.5 93.1V99.9M1955.5 92.5V100.4M1956.5 92.7V100.4M1957.5 92.2V100.2M1958.5 92.5V100.1M1959.5 92.5V99.5M1960.5 93.5V99.5M1961.5 93.7V98.7M1962.5 92.8V99.8M1963.5 92.8V99.7M1964.5 93.2V99.7M1965.5 93.4V99.0M1966.5 93.0V99.6M1967.5 92.7V99.6M1968.5 93.7V99.7M1969.5 92.8V99.7M1970.5 93.1V99.1M1971.5 93.2V99.2M1972.5 93.2V99.2M1973.5 93.5V99.1M1974.5 94.2V98.8M1975.5 94.2V98.8M1976.5 94.7V98.5M1977.5 94.7V98.5M1978.5 94.9V98.2M1979.5 95.6V97.8M1980.5 95.8V97.8M1981.5 95.8V97.8M1982.5 95.8V97.8M1984.5 95.8V97.8M1985.5 95.8V97.8M1987.5 95.8V97.8M1988.5 95.8V97.8M1991.5 94.6V98.0M1992.5 92.3V102.2M1993.5 92.3V102.2M1994.5 92.5V101.8M1995.5 92.6V102.0M1996.5 93.6V101.2M1997.5 91.7V102.3M1998.5 91.7V102.3M1999.5 92.0V100.6M2000.5 92.3V101.4M2001.5 92.5V101.3M2002.5 94.4V98.8M2003.5 95.3V98.2" stroke="#16eea0" stroke-width="1.2"/>
<path d="M834.5 312.1V369.8M835.5 308.6V371.6M836.5 313.5V372.9M837.5 313.8V370.2M838.5 332.7V357.0M839.5 319.4V366.2M840.5 334.5V372.7M841.5 337.4V352.5M842.5 334.5V371.2M843.5 314.1V372.2M844.5 321.6V364.6M845.5 320.9V362.4M846.5 334.9V370.6M847.5 319.5V369.8M848.5 322.5V365.5M849.5 317.8V369.2M850.5 321.4V371.2M851.5 321.3V369.2M852.5 321.3V368.7M853.5 322.2V366.7M854.5 321.9V367.7M855.5 337.1V367.8M856.5 329.9V366.3M857.5 323.0V369.5M858.5 322.2V364.6M859.5 339.9V367.7M860.5 323.6V368.6M861.5 322.1V354.7M862.5 322.8V362.8M863.5 321.2V349.9M864.5 321.1V367.5M865.5 319.8V367.1M866.5 327.9V359.3M867.5 338.5V366.2M868.5 321.2V367.5M869.5 333.1V363.0M870.5 336.4V360.3M871.5 321.9V365.3M872.5 335.9V354.1M873.5 329.0V364.6M874.5 323.8V365.2M875.5 323.1V364.9M876.5 322.1V364.6M877.5 340.4V351.6M878.5 324.8V352.9M879.5 336.1V349.9M880.5 329.8V359.5M881.5 331.7V358.9M882.5 338.1V352.0M883.5 328.1V363.0M884.5 328.3V361.9M885.5 331.8V357.8M886.5 333.0V361.6M887.5 338.4V358.5M888.5 330.4V361.9M889.5 329.9V362.7M890.5 330.4V357.6M891.5 331.7V361.2M892.5 335.9V352.5M893.5 335.4V357.4M894.5 333.0V361.2M895.5 340.9V348.6M896.5 339.9V351.9M897.5 330.6V360.0M898.5 330.8V360.4M899.5 329.6V359.9M900.5 329.5V355.9M901.5 333.3V355.4M902.5 340.2V352.2M903.5 324.4V359.4M904.5 330.2V360.0M905.5 328.9V358.0M906.5 324.8V360.3M907.5 337.9V350.5M908.5 326.2V361.0M909.5 326.9V360.9M910.5 333.1V349.5M911.5 341.0V361.1M912.5 333.5V358.0M913.5 329.6V360.9M914.5 330.7V360.7M915.5 329.9V360.2M916.5 335.0V357.3M917.5 334.7V357.4M918.5 331.6V360.4M919.5 340.0V356.7M920.5 341.6V355.5M921.5 334.9V357.8M922.5 334.9V358.2M923.5 340.8V347.9M924.5 337.0V354.4M925.5 341.8V351.2M926.5 342.1V348.5M927.5 339.1V351.8M928.5 340.0V350.8M929.5 340.0V347.0M930.5 340.6V350.2M931.5 340.9V349.2M932.5 341.6V349.0M933.5 341.9V347.3M934.5 342.5V347.7M935.5 343.1V346.1M936.5 342.3V346.5M937.5 342.8V346.7M938.5 343.5V346.9M939.5 343.4V347.2M940.5 342.4V347.2M941.5 343.0V346.7M942.5 342.7V346.0M943.5 344.0V346.2M944.5 343.7V347.5M945.5 342.3V347.2M946.5 343.8V346.9M947.5 342.8V347.9M948.5 342.3V346.8M949.5 343.7V347.2M950.5 343.1V347.9M951.5 342.0V347.7M952.5 342.2V346.2M954.5 337.6V357.0M955.5 338.4V359.1M956.5 341.9V349.5M957.5 337.5V359.4M958.5 332.1V356.4M959.5 335.7V359.5M960.5 335.7V357.3M961.5 334.4V359.6M962.5 332.8V358.0M963.5 326.2V364.2M964.5 341.7V348.1M965.5 332.8V349.9M966.5 325.3V365.9M967.5 331.2V359.4M968.5 331.9V358.9M969.5 330.3V355.6M970.5 341.8V350.6M971.5 329.5V358.0M972.5 321.4V350.3M973.5 328.1V359.2M974.5 339.1V357.3M975.5 331.9V355.5M976.5 329.1V357.7M977.5 336.0V358.0M978.5 330.1V356.3M979.5 327.6V356.7M980.5 330.6V357.6M981.5 329.7V356.1M982.5 332.5V355.6M983.5 341.7V348.9M984.5 322.7V363.4M985.5 320.2V349.8M986.5 331.8V355.4M987.5 327.9V354.3M988.5 330.3V357.0M989.5 321.6V362.9M990.5 329.6V354.5M991.5 330.1V354.5M992.5 339.7V356.9M993.5 341.8V347.6M994.5 339.1V350.0M995.5 331.8V356.6M996.5 338.2V349.2M997.5 327.0V360.2M998.5 334.1V361.7M999.5 326.8V360.8M1000.5 328.6V360.2M1001.5 327.7V360.1M1002.5 329.1V353.7M1003.5 333.8V354.6M1004.5 329.2V353.5M1005.5 331.0V360.3M1006.5 341.8V354.7M1007.5 330.6V360.0M1008.5 335.1V353.2M1009.5 341.5V349.6M1010.5 335.5V354.3M1011.5 335.6V354.2M1012.5 329.0V361.5M1013.5 333.3V356.7M1014.5 328.3V365.7M1015.5 327.9V356.9M1016.5 331.2V361.1M1017.5 333.1V351.9M1018.5 338.0V367.3M1019.5 321.6V367.7M1020.5 341.9V371.1M1021.5 327.3V350.1M1022.5 329.9V362.5M1023.5 325.6V361.8M1024.5 328.4V361.8M1025.5 335.7V352.0M1026.5 326.4V362.7M1027.5 314.6V375.1M1028.5 312.7V367.2M1029.5 332.7V349.7M1030.5 313.1V356.2M1031.5 322.6V382.3M1032.5 318.6V367.9M1033.5 322.2V367.7M1034.5 334.2V384.0M1035.5 318.2V356.2M1036.5 333.0V354.8M1037.5 325.4V357.5M1038.5 320.9V351.6M1039.5 315.3V366.0M1040.5 324.9V367.9M1041.5 339.6V350.1M1042.5 326.3V371.4M1043.5 340.5V360.9M1044.5 338.3V364.3M1045.5 323.6V367.7M1046.5 330.0V358.9M1047.5 331.4V358.6M1048.5 325.6V366.3M1049.5 330.9V353.3M1050.5 326.9V358.4M1051.5 334.3V359.3M1052.5 328.5V359.1M1053.5 334.3V355.9M1054.5 339.4V348.7M1055.5 335.4V356.7M1056.5 337.6V361.6M1057.5 333.0V348.1M1058.5 333.4V348.0M1059.5 335.1V357.9M1060.5 342.1V348.9M1061.5 338.6V358.1M1062.5 337.2V356.6M1063.5 342.6V356.4M1064.5 341.2V352.6M1065.5 339.9V354.7M1066.5 343.5V351.8M1067.5 342.1V350.2M1068.5 340.4V353.4M1069.5 343.5V346.5M1070.5 340.7V347.6M1071.5 341.1V351.4M1072.5 341.6V350.1M1073.5 342.1V349.9M1074.5 343.5V346.5M1075.5 342.5V348.7M1076.5 343.4V346.7M1077.5 344.0V346.6M1078.5 343.2V346.1M1079.5 335.3V357.5M1080.5 333.3V356.3M1081.5 332.7V351.0M1082.5 324.9V364.1M1083.5 324.3V365.2M1084.5 328.5V360.5M1085.5 329.0V358.8M1086.5 320.6V365.2M1087.5 321.0V367.6M1088.5 328.4V367.4M1089.5 338.1V365.9M1090.5 316.8V359.1M1091.5 335.8V348.8M1092.5 324.8V359.2M1093.5 325.0V361.2M1094.5 324.5V360.3M1095.5 316.3V361.5M1096.5 340.8V348.9M1097.5 326.2V360.4M1098.5 317.1V352.7M1099.5 316.0V366.9M1100.5 318.0V366.1M1101.5 328.2V361.6M1102.5 328.6V358.8M1103.5 327.9V348.5M1104.5 315.8V369.3M1105.5 315.3V368.0M1106.5 326.1V360.8M1107.5 315.9V369.4M1108.5 316.8V366.3M1109.5 324.1V357.7M1110.5 328.0V361.5M1111.5 339.4V348.6M1112.5 324.4V352.9M1113.5 327.9V360.9M1114.5 333.5V354.0M1115.5 318.6V368.4M1116.5 317.7V369.2M1117.5 318.4V367.8M1118.5 314.8V367.8M1119.5 336.5V348.5M1120.5 334.6V362.0M1121.5 326.1V359.0M1122.5 337.7V352.8M1123.5 334.6V352.0M1124.5 317.1V369.1M1125.5 316.6V366.9M1126.5 327.6V350.4M1127.5 325.2V350.9M1128.5 316.6V367.1M1129.5 335.9V369.6M1130.5 334.9V367.0M1131.5 337.8V362.2M1132.5 325.3V362.4M1133.5 330.4V357.7M1134.5 334.7V362.3M1135.5 329.0V358.1M1136.5 327.6V353.3M1137.5 320.8V369.2M1138.5 337.4V360.3M1139.5 319.8V352.9M1140.5 331.4V362.1M1141.5 329.6V361.9M1142.5 321.7V359.9M1143.5 340.6V367.5M1144.5 319.3V352.6M1145.5 338.5V361.8M1146.5 331.2V359.5M1147.5 330.9V365.7M1148.5 318.4V366.6M1149.5 319.4V366.6M1150.5 326.9V361.3M1151.5 330.0V361.0M1152.5 318.6V368.0M1153.5 328.2V357.4M1154.5 329.4V357.1M1155.5 326.1V348.6M1156.5 339.9V352.4M1157.5 319.5V365.9M1158.5 327.7V356.9M1159.5 335.4V365.5M1160.5 340.1V353.1M1161.5 334.4V351.8M1162.5 337.5V352.4M1163.5 339.8V352.2M1164.5 337.8V348.6M1165.5 319.8V366.5M1166.5 328.5V360.7M1167.5 318.4V357.2M1168.5 339.0V351.7M1169.5 318.9V364.9M1170.5 335.9V349.1M1171.5 337.1V350.0M1172.5 317.5V350.9M1173.5 319.1V351.6M1174.5 325.5V357.4M1175.5 329.4V358.7M1176.5 328.0V366.0M1177.5 325.6V361.0M1178.5 327.1V357.9M1179.5 328.1V369.0M1180.5 326.9V369.3M1181.5 330.2V363.1M1182.5 327.1V350.1M1183.5 334.9V349.3M1184.5 335.2V351.8M1185.5 317.3V363.2M1186.5 326.0V349.9M1187.5 316.6V360.6M1188.5 328.3V364.3M1189.5 316.9V373.0M1190.5 334.5V348.6M1191.5 317.5V373.6M1192.5 335.0V351.5M1193.5 326.4V349.5M1194.5 324.4V363.0M1195.5 316.3V374.9M1196.5 334.8V364.4M1197.5 341.1V364.1M1198.5 338.4V350.6M1199.5 317.5V372.6M1200.5 333.4V361.8M1201.5 339.3V370.9M1202.5 333.4V361.6M1203.5 339.3V350.8M1204.5 339.9V361.4M1205.5 326.8V374.0M1206.5 312.7V361.7M1207.5 339.3V363.8M1208.5 326.5V365.2M1209.5 333.7V349.3M1210.5 337.6V348.9M1211.5 320.8V365.9M1212.5 312.9V360.7M1213.5 324.3V363.8M1214.5 324.9V362.6M1215.5 335.2V348.8M1216.5 325.0V363.8M1217.5 325.1V361.3M1218.5 334.6V372.9M1219.5 323.6V363.8M1220.5 320.2V361.7M1221.5 311.6V349.6M1222.5 338.3V366.9M1223.5 310.7V373.6M1224.5 324.1V363.7M1225.5 321.7V362.3M1226.5 320.9V365.5M1227.5 325.3V362.4M1228.5 319.6V366.2M1229.5 319.2V367.2M1230.5 333.5V355.8M1231.5 322.6V377.1M1232.5 321.3V362.3M1233.5 322.3V366.7M1234.5 327.5V363.0M1235.5 327.8V364.1M1236.5 323.9V360.4M1237.5 336.0V351.4M1238.5 317.5V370.4M1239.5 315.5V369.5M1240.5 327.1V359.2M1241.5 325.8V363.5M1242.5 337.2V367.7M1243.5 326.4V361.3M1244.5 319.7V366.5M1245.5 322.7V366.1M1246.5 332.5V359.7M1247.5 336.2V356.6M1248.5 322.8V352.3M1249.5 322.9V364.0M1250.5 332.1V363.7M1251.5 330.5V359.0M1252.5 334.4V356.9M1253.5 327.8V362.0M1254.5 327.7V361.6M1255.5 335.2V351.6M1256.5 333.6V361.6M1257.5 341.6V348.0M1258.5 329.4V362.0M1259.5 342.6V347.2M1260.5 341.3V347.8M1261.5 330.9V358.9M1262.5 340.1V348.9M1263.5 342.0V348.9M1264.5 337.5V352.9M1265.5 337.1V353.5M1266.5 336.5V352.9M1267.5 333.6V357.2M1268.5 332.7V356.8M1269.5 336.6V353.5M1270.5 341.5V348.6M1271.5 343.5V349.0M1272.5 338.7V352.1M1273.5 339.8V354.1M1274.5 343.1V349.8M1275.5 337.2V352.9M1276.5 343.1V348.0M1277.5 341.1V349.6M1278.5 340.7V350.0M1279.5 343.5V346.5M1280.5 343.5V346.5M1281.5 341.1V348.6M1282.5 340.7V349.3M1283.5 343.5V346.5M1284.5 343.0V347.4M1285.5 343.2V347.0M1286.5 343.5V346.7M1287.5 343.0V346.9M1288.5 343.0V346.8M1331.5 336.2V361.5M1332.5 340.8V353.5M1333.5 332.2V370.8M1334.5 330.1V351.5M1335.5 330.8V373.1M1336.5 340.1V349.2M1337.5 329.5V374.6M1338.5 341.6V355.5M1339.5 338.6V357.7M1340.5 327.4V368.8M1341.5 326.2V351.3M1342.5 341.8V350.9M1343.5 339.1V353.3M1344.5 337.4V375.6M1345.5 332.3V374.4M1346.5 333.0V374.9M1347.5 323.1V375.5M1348.5 323.0V373.4M1349.5 322.3V349.6M1350.5 332.3V365.5M1351.5 340.0V362.3M1352.5 328.6V364.7M1353.5 332.2V365.9M1354.5 341.7V351.9M1355.5 329.0V352.2M1356.5 329.3V361.0M1357.5 332.1V359.6M1358.5 330.6V370.9M1359.5 331.8V364.6M1360.5 338.3V352.9M1361.5 329.3V361.1M1362.5 319.1V369.0M1363.5 326.1V360.4M1364.5 326.9V349.4M1365.5 339.6V360.6M1366.5 341.4V353.7M1367.5 340.1V351.7M1368.5 326.4V352.6M1369.5 327.8V361.6M1370.5 327.6V361.4M1371.5 337.2V351.4M1372.5 336.7V354.4M1373.5 329.6V361.8M1374.5 339.0V354.1M1375.5 329.2V362.1M1376.5 317.0V371.5M1377.5 318.4V360.3M1378.5 339.0V354.8M1379.5 317.3V372.6M1380.5 326.6V362.9M1381.5 327.0V360.4M1382.5 341.1V353.1M1383.5 317.4V370.7M1384.5 329.9V364.6M1385.5 340.3V350.8M1386.5 339.1V348.6M1387.5 329.2V363.4M1388.5 328.7V359.0M1389.5 341.0V360.1M1390.5 319.7V369.3M1391.5 341.3V362.3M1392.5 331.5V361.3M1393.5 338.6V369.5M1394.5 322.4V357.8M1395.5 323.4V367.1M1396.5 331.0V359.3M1397.5 331.3V352.6M1398.5 325.7V358.8M1399.5 333.3V351.0M1400.5 327.6V364.3M1401.5 341.8V350.8M1402.5 324.2V358.3M1403.5 340.2V350.0M1404.5 331.6V359.1M1405.5 330.6V349.7M1406.5 323.7V368.0M1407.5 339.2V371.0M1408.5 338.3V361.7M1409.5 331.1V364.4M1410.5 327.6V364.1M1411.5 330.8V365.5M1412.5 328.0V349.0M1413.5 328.6V360.6M1414.5 335.6V349.5M1415.5 335.6V349.5M1416.5 327.9V372.1M1417.5 328.2V362.4M1418.5 323.3V362.7M1419.5 332.3V371.2M1420.5 331.2V371.6M1421.5 330.5V361.9M1422.5 332.3V360.1M1423.5 331.8V365.8M1424.5 326.7V373.7M1425.5 339.4V350.9M1426.5 333.7V366.0M1427.5 326.0V374.2M1428.5 326.2V348.7M1429.5 333.3V370.8M1430.5 334.2V360.8M1431.5 342.6V350.0M1432.5 335.7V361.7M1433.5 334.1V363.5M1434.5 336.8V354.5M1435.5 334.9V362.5M1436.5 336.8V352.7M1437.5 332.4V368.8M1438.5 343.4V350.9M1439.5 338.3V359.0M1440.5 334.2V364.6M1441.5 343.0V358.4M1442.5 335.2V364.2M1443.5 343.0V351.0M1444.5 337.8V351.4M1445.5 340.0V361.7M1446.5 340.3V352.5M1447.5 342.0V348.6M1448.5 343.3V346.5M1449.5 340.9V352.5M1450.5 343.5V348.0M1451.5 342.9V346.9M1452.5 342.8V346.2M1453.5 342.3V347.6M1454.5 343.3V347.3M1455.5 342.7V346.2M1456.5 342.2V347.4M1457.5 343.9V347.0M1458.5 342.8V347.5M1459.5 342.4V346.6M1460.5 343.0V347.9M1461.5 342.5V346.8M1462.5 342.4V346.3M1463.5 343.0V347.5M1464.5 343.3V347.0M1465.5 342.6V346.3M1518.5 337.6V359.3M1519.5 335.7V361.2M1520.5 332.6V361.5M1521.5 332.5V367.2M1522.5 337.0V385.6M1523.5 322.9V370.8M1524.5 321.0V393.1M1525.5 330.2V377.3M1526.5 337.6V353.9M1527.5 330.8V388.7M1528.5 338.6V355.0M1529.5 317.4V390.4M1530.5 339.1V351.4M1531.5 318.7V352.1M1532.5 327.9V353.2M1533.5 326.2V374.2M1534.5 328.5V382.6M1535.5 335.3V350.9M1536.5 339.1V358.0M1537.5 326.8V382.4M1538.5 327.3V369.9M1539.5 329.9V363.9M1540.5 319.9V367.0M1541.5 319.9V377.1M1542.5 317.6V378.1M1543.5 331.0V364.0M1544.5 328.6V349.9M1545.5 319.7V375.5M1546.5 335.5V369.0M1547.5 339.3V351.2M1548.5 321.9V376.7M1549.5 331.0V363.9M1550.5 337.1V357.6M1551.5 331.6V367.1M1552.5 321.5V367.3M1553.5 331.5V376.4M1554.5 321.4V377.3M1555.5 336.2V356.1M1556.5 330.4V374.9M1557.5 337.4V350.2M1558.5 331.7V376.8M1559.5 340.4V374.9M1560.5 340.5V356.7M1561.5 341.4V356.2M1562.5 333.4V365.6M1563.5 338.6V350.0M1564.5 333.9V371.8M1565.5 326.1V373.8M1566.5 330.8V361.5M1567.5 326.9V365.8M1568.5 333.7V363.6M1569.5 338.3V362.1M1570.5 333.7V364.3M1571.5 327.3V373.2M1572.5 331.4V364.5M1573.5 340.6V355.1M1574.5 328.3V368.8M1575.5 338.0V350.3M1576.5 341.1V350.4M1577.5 324.6V370.8M1578.5 341.6V353.9M1579.5 323.4V372.8M1580.5 333.1V361.6M1581.5 324.7V372.7M1582.5 340.9V361.4M1583.5 320.6V360.1M1584.5 329.0V359.9M1585.5 337.9V352.7M1586.5 318.7V362.9M1587.5 330.7V361.4M1588.5 328.6V364.4M1589.5 321.2V368.2M1590.5 333.2V358.2M1591.5 332.7V355.7M1592.5 339.5V347.9M1593.5 336.8V354.3M1594.5 337.1V353.1M1595.5 341.3V347.6M1596.5 339.4V351.0M1597.5 341.4V348.6M1598.5 343.5V346.6M1599.5 343.2V347.0M1600.5 342.3V346.7M1648.5 331.1V359.0M1649.5 335.8V359.9M1650.5 333.5V351.6M1651.5 339.6V351.2M1652.5 323.9V366.4M1653.5 331.6V352.1M1654.5 317.2V352.8M1655.5 315.5V349.1M1656.5 335.2V359.2M1657.5 340.5V350.4M1658.5 337.2V361.6M1659.5 317.2V367.0M1660.5 320.6V351.0M1661.5 337.8V368.1M1662.5 340.5V361.4M1663.5 329.4V360.3M1664.5 331.3V358.6M1665.5 338.3V350.6M1666.5 330.7V358.9M1667.5 337.5V350.9M1668.5 332.1V360.7M1669.5 331.0V360.0M1670.5 323.0V367.8M1671.5 337.6V360.5M1672.5 331.8V349.9M1673.5 339.5V359.8M1674.5 322.1V370.4M1675.5 330.2V359.7M1676.5 331.8V363.6M1677.5 331.7V362.2M1678.5 341.8V358.5M1679.5 337.3V350.0M1680.5 324.4V369.0M1681.5 336.9V351.8M1682.5 324.7V361.1M1683.5 331.0V361.9M1684.5 323.3V371.3M1685.5 323.3V368.2M1686.5 324.1V353.4M1687.5 340.5V367.2M1688.5 330.4V358.4M1689.5 337.9V362.6M1690.5 331.3V362.1M1691.5 325.2V368.3M1692.5 329.7V360.5M1693.5 329.9V369.2M1694.5 331.1V369.8M1695.5 329.7V361.6M1696.5 323.9V350.7M1697.5 336.9V348.6M1698.5 330.7V361.6M1699.5 331.7V357.3M1700.5 340.1V348.2M1701.5 325.5V353.8M1702.5 342.0V358.9M1703.5 332.9V358.5M1704.5 329.9V367.6M1705.5 331.2V358.7M1706.5 341.9V348.7M1707.5 338.3V350.6M1708.5 324.2V360.7M1709.5 332.8V359.0M1710.5 325.9V367.7M1711.5 326.0V367.3M1712.5 330.2V358.4M1713.5 333.0V358.7M1714.5 337.5V352.4M1715.5 332.2V359.8M1716.5 323.1V368.3M1717.5 337.9V352.8M1718.5 331.2V350.2M1719.5 325.6V350.8M1720.5 335.3V364.4M1721.5 328.7V363.4M1722.5 335.5V355.9M1723.5 336.4V355.6M1724.5 343.1V347.7M1725.5 341.1V349.8M1726.5 338.5V352.4M1727.5 336.8V354.4M1728.5 340.8V350.2M1729.5 340.6V352.7M1730.5 343.4V351.4M1731.5 343.5V346.5M1732.5 342.4V349.8M1733.5 341.9V348.3M1734.5 343.5V347.4M1735.5 343.5V347.5M1831.5 322.2V353.2M1832.5 321.9V363.8M1833.5 329.0V359.7M1834.5 318.4V365.7M1835.5 320.0V362.5M1836.5 305.7V350.5M1837.5 305.5V369.1M1838.5 336.8V354.0M1839.5 308.1V354.2M1840.5 310.2V368.1M1841.5 310.3V361.8M1842.5 319.7V369.8M1843.5 310.0V365.5M1844.5 313.0V354.9M1845.5 312.6V369.6M1846.5 323.5V354.8M1847.5 317.4V371.0M1848.5 316.1V368.0M1849.5 335.5V369.0M1850.5 338.1V356.2M1851.5 334.3V366.0M1852.5 326.6V364.7M1853.5 320.4V369.2M1854.5 325.8V364.1M1855.5 320.3V366.9M1856.5 324.8V361.0M1857.5 317.8V367.1M1858.5 338.6V353.7M1859.5 337.0V365.8M1860.5 337.4V368.0M1861.5 339.0V368.0M1862.5 321.3V367.7M1863.5 318.9V365.4M1864.5 334.0V365.6M1865.5 320.9V362.2M1866.5 321.4V364.5M1867.5 320.7V364.3M1868.5 334.2V351.2M1869.5 321.9V364.8M1870.5 336.2V354.4M1871.5 321.0V364.3M1872.5 339.3V362.9M1873.5 333.9V352.2M1874.5 322.6V364.6M1875.5 321.9V365.0M1876.5 320.4V365.2M1877.5 328.6V365.2M1878.5 320.2V364.8M1879.5 322.0V364.4M1880.5 325.2V361.0M1881.5 323.5V357.6M1882.5 321.1V363.0M1883.5 322.6V363.0M1884.5 327.3V359.7M1885.5 335.8V353.3M1886.5 327.6V358.5M1887.5 324.5V361.4M1888.5 329.7V362.2M1889.5 328.0V352.3M1890.5 325.6V349.6M1891.5 323.0V361.3M1892.5 324.3V360.8M1893.5 331.8V349.0M1894.5 330.8V355.1M1895.5 324.7V349.0M1896.5 336.1V357.8M1897.5 329.3V357.2M1898.5 339.5V350.0M1899.5 330.4V354.2M1900.5 340.3V349.6M1901.5 326.2V359.1M1902.5 326.1V358.0M1903.5 327.2V358.6M1904.5 327.6V358.6M1905.5 340.9V350.5M1906.5 329.5V354.9M1907.5 329.0V355.5M1908.5 327.6V357.0M1909.5 327.1V358.3M1910.5 325.7V354.6M1911.5 336.2V356.1M1912.5 338.0V356.8M1913.5 330.1V358.8M1914.5 325.8V358.9M1915.5 327.5V351.4M1916.5 329.8V354.9M1917.5 331.3V355.8M1918.5 331.0V355.4M1919.5 328.1V356.6M1920.5 341.5V353.8M1921.5 329.2V355.5M1922.5 329.8V356.0M1923.5 338.6V348.0M1924.5 332.4V354.7M1925.5 332.8V354.4M1926.5 335.9V353.3M1927.5 339.5V351.0M1928.5 336.2V350.9M1929.5 334.8V353.1M1930.5 342.2V347.1M1931.5 336.0V351.7M1932.5 337.4V349.0M1933.5 340.6V349.0M1934.5 339.3V347.0M1935.5 340.7V348.7M1936.5 342.5V347.2M1937.5 342.3V347.7M1938.5 342.5V347.7M1939.5 342.3V346.5M1940.5 343.5V346.5M1941.5 343.5V346.5M1942.5 342.8V347.5M1943.5 343.3V346.7M1944.5 343.0V347.6M1945.5 342.3V346.4M1946.5 342.4V347.0M1947.5 343.4V346.6M1948.5 342.6V347.0M1949.5 342.2V346.0M1950.5 342.2V346.4M1958.5 334.7V350.8M1959.5 339.0V352.4M1960.5 323.8V370.5M1961.5 334.9V354.8M1962.5 324.8V368.8M1963.5 326.4V366.3M1964.5 325.2V368.9M1965.5 336.9V369.9M1966.5 339.6V365.9M1967.5 329.9V349.5M1968.5 337.6V363.4M1969.5 337.8V349.9M1970.5 320.6V371.2M1971.5 341.1V353.5M1972.5 332.7V363.2M1973.5 322.1V348.3M1974.5 323.3V362.2M1975.5 339.5V366.7M1976.5 332.7V357.0M1977.5 324.7V366.2M1978.5 333.5V354.3M1979.5 338.1V351.6M1980.5 343.5V346.5M1981.5 342.5V346.7" stroke="#0ee08d" stroke-width="1"/>
<rect x="748" y="208" width="2" height="272" fill="#d20a0a"/>
<path d="M738 184 H760 V199 L749 209 L738 199Z" fill="#2a7cf0"/>
<rect x="2216" y="242" width="250" height="52" fill="#1c1c1c" fill-opacity="0.9"/>
<rect x="2218" y="244" width="16" height="48" fill="#2e2e2e"/>
<rect x="2222" y="258.0" width="2" height="2" fill="#cfcfcf"/><rect x="2226" y="258.0" width="2" height="2" fill="#cfcfcf"/><rect x="2222" y="261.6" width="2" height="2" fill="#cfcfcf"/><rect x="2226" y="261.6" width="2" height="2" fill="#cfcfcf"/><rect x="2222" y="265.2" width="2" height="2" fill="#cfcfcf"/><rect x="2226" y="265.2" width="2" height="2" fill="#cfcfcf"/><rect x="2222" y="268.8" width="2" height="2" fill="#cfcfcf"/><rect x="2226" y="268.8" width="2" height="2" fill="#cfcfcf"/><rect x="2222" y="272.4" width="2" height="2" fill="#cfcfcf"/><rect x="2226" y="272.4" width="2" height="2" fill="#cfcfcf"/><rect x="2222" y="276.0" width="2" height="2" fill="#cfcfcf"/><rect x="2226" y="276.0" width="2" height="2" fill="#cfcfcf"/>
<rect x="2238.0" y="274" width="2" height="4" fill="#c6c6c6"/><rect x="2241.9" y="272" width="2" height="6" fill="#c6c6c6"/><rect x="2245.8" y="270" width="2" height="8" fill="#c6c6c6"/><rect x="2249.7" y="268" width="2" height="10" fill="#c6c6c6"/><rect x="2253.6" y="266" width="2" height="12" fill="#c6c6c6"/><rect x="2257.5" y="264" width="2" height="14" fill="#c6c6c6"/><rect x="2261.4" y="261" width="2" height="17" fill="#c6c6c6"/><rect x="2265.3" y="250" width="2" height="28" fill="#c6c6c6"/>
<circle cx="2297" cy="267" r="16.5" fill="none" stroke="#8c8c8c" stroke-width="3.6"/><rect x="2295.5" y="252" width="3.5" height="15" fill="#8c8c8c"/>
<text x="2325.0" y="274.0" font-size="21" fill="#2d8cf0" text-anchor="start" textLength="24.0" lengthAdjust="spacingAndGlyphs" stroke="#2d8cf0" stroke-width="0.35">+0</text>
<text x="2356.0" y="274.0" font-size="21" fill="#9a9a9a" text-anchor="start" textLength="25.0" lengthAdjust="spacingAndGlyphs" stroke="#9a9a9a" stroke-width="0.35">dB</text>
<rect x="2428" y="249" width="2" height="38" fill="#3a3a3a"/>
<rect x="2435" y="255" width="26" height="26" rx="3" fill="#141414" stroke="#262626" stroke-width="1.5"/>
<path d="M2441 274.8 L2447.5 268.8" stroke="#2d7ff5" stroke-width="2.6" stroke-linecap="round"/><path d="M2442.1 265.1 L2450.5 263.6 L2453 266.2 L2451.2 273.7Z" fill="#2d7ff5"/><circle cx="2453" cy="263.2" r="3.1" fill="#2d7ff5"/>
<path d="M2610 212.2H2614M2610 220.5H2619M2610 228.8H2614M2610 237.1H2614M2610 245.4H2614M2610 253.7H2614M2610 262.0H2619M2610 270.3H2614M2610 278.6H2614M2610 286.9H2614M2610 295.2H2614M2610 303.5H2619M2610 311.8H2614M2610 320.1H2614M2610 328.4H2614M2610 336.7H2614M2610 345.0H2619M2610 353.3H2614M2610 361.6H2614M2610 369.9H2614M2610 378.2H2614M2610 386.5H2619M2610 394.8H2614M2610 403.1H2614M2610 411.4H2614M2610 419.7H2614M2610 428.0H2619M2610 436.3H2614M2610 444.6H2614M2610 452.9H2614M2610 461.2H2614M2610 469.5H2619M2610 477.8H2614" stroke="#a6a6a6" stroke-width="2"/>
<text x="2625.0" y="234.0" font-size="23" fill="#aaaaaa" text-anchor="start" textLength="54.0" lengthAdjust="spacingAndGlyphs" stroke="#aaaaaa" stroke-width="0.35">samp</text>
<text x="2626.0" y="269.0" font-size="22" fill="#a9a9a9" text-anchor="start" textLength="36.0" lengthAdjust="spacingAndGlyphs" stroke="#a9a9a9" stroke-width="0.35">20k</text>
<text x="2626.0" y="310.5" font-size="22" fill="#a9a9a9" text-anchor="start" textLength="36.0" lengthAdjust="spacingAndGlyphs" stroke="#a9a9a9" stroke-width="0.35">10k</text>
<text x="2626.0" y="353.0" font-size="22" fill="#a9a9a9" text-anchor="start" textLength="11.0" lengthAdjust="spacingAndGlyphs" stroke="#a9a9a9" stroke-width="0.35">0</text>
<text x="2626.0" y="393.0" font-size="22" fill="#a9a9a9" text-anchor="start" textLength="44.0" lengthAdjust="spacingAndGlyphs" stroke="#a9a9a9" stroke-width="0.35">-10k</text>
<text x="2626.0" y="435.0" font-size="22" fill="#a9a9a9" text-anchor="start" textLength="44.0" lengthAdjust="spacingAndGlyphs" stroke="#a9a9a9" stroke-width="0.35">-20k</text>
<text x="2626.0" y="475.0" font-size="22" fill="#a9a9a9" text-anchor="start" textLength="44.0" lengthAdjust="spacingAndGlyphs" stroke="#a9a9a9" stroke-width="0.35">-30k</text>
<rect x="16" y="480" width="2678" height="18" fill="#282828"/>
<rect x="1361" y="486" width="1" height="2" fill="#0a0a0a"/><rect x="1362" y="486" width="2" height="2" fill="#a6a6a6"/><rect x="1361" y="490" width="1" height="2" fill="#0a0a0a"/><rect x="1362" y="490" width="2" height="2" fill="#a6a6a6"/><rect x="1365" y="486" width="1" height="2" fill="#0a0a0a"/><rect x="1366" y="486" width="2" height="2" fill="#a6a6a6"/><rect x="1365" y="490" width="1" height="2" fill="#0a0a0a"/><rect x="1366" y="490" width="2" height="2" fill="#a6a6a6"/><rect x="1369" y="486" width="1" height="2" fill="#0a0a0a"/><rect x="1370" y="486" width="2" height="2" fill="#a6a6a6"/><rect x="1369" y="490" width="1" height="2" fill="#0a0a0a"/><rect x="1370" y="490" width="2" height="2" fill="#a6a6a6"/><rect x="1373" y="486" width="1" height="2" fill="#0a0a0a"/><rect x="1374" y="486" width="2" height="2" fill="#a6a6a6"/><rect x="1373" y="490" width="1" height="2" fill="#0a0a0a"/><rect x="1374" y="490" width="2" height="2" fill="#a6a6a6"/><rect x="1377" y="486" width="1" height="2" fill="#0a0a0a"/><rect x="1378" y="486" width="2" height="2" fill="#a6a6a6"/><rect x="1377" y="490" width="1" height="2" fill="#0a0a0a"/><rect x="1378" y="490" width="2" height="2" fill="#a6a6a6"/><rect x="1381" y="486" width="1" height="2" fill="#0a0a0a"/><rect x="1382" y="486" width="2" height="2" fill="#a6a6a6"/><rect x="1381" y="490" width="1" height="2" fill="#0a0a0a"/><rect x="1382" y="490" width="2" height="2" fill="#a6a6a6"/><rect x="1385" y="486" width="1" height="2" fill="#0a0a0a"/><rect x="1386" y="486" width="2" height="2" fill="#a6a6a6"/><rect x="1385" y="490" width="1" height="2" fill="#0a0a0a"/><rect x="1386" y="490" width="2" height="2" fill="#a6a6a6"/><rect x="1389" y="486" width="1" height="2" fill="#0a0a0a"/><rect x="1390" y="486" width="2" height="2" fill="#a6a6a6"/><rect x="1389" y="490" width="1" height="2" fill="#0a0a0a"/><rect x="1390" y="490" width="2" height="2" fill="#a6a6a6"/><rect x="1393" y="486" width="1" height="2" fill="#0a0a0a"/><rect x="1394" y="486" width="2" height="2" fill="#a6a6a6"/><rect x="1393" y="490" width="1" height="2" fill="#0a0a0a"/><rect x="1394" y="490" width="2" height="2" fill="#a6a6a6"/><rect x="1397" y="486" width="1" height="2" fill="#0a0a0a"/><rect x="1398" y="486" width="2" height="2" fill="#a6a6a6"/><rect x="1397" y="490" width="1" height="2" fill="#0a0a0a"/><rect x="1398" y="490" width="2" height="2" fill="#a6a6a6"/><rect x="1401" y="486" width="1" height="2" fill="#0a0a0a"/><rect x="1402" y="486" width="2" height="2" fill="#a6a6a6"/><rect x="1401" y="490" width="1" height="2" fill="#0a0a0a"/><rect x="1402" y="490" width="2" height="2" fill="#a6a6a6"/><rect x="1405" y="486" width="1" height="2" fill="#0a0a0a"/><rect x="1406" y="486" width="2" height="2" fill="#a6a6a6"/><rect x="1405" y="490" width="1" height="2" fill="#0a0a0a"/><rect x="1406" y="490" width="2" height="2" fill="#a6a6a6"/>
<rect x="16" y="1720" width="2594" height="2" fill="#060606"/>
<rect x="2608" y="498" width="2" height="1224" fill="#060606"/>
<rect x="14" y="498" width="2" height="1224" fill="#060606"/>
<path d="M2610 1672.8H2614M2610 1621.8H2614M2610 1570.8H2614M2610 1519.8H2614M2610 1468.8H2614M2610 1417.8H2614M2610 1366.8H2614M2610 1315.8H2614M2610 1264.8H2614M2610 1213.8H2619M2610 1162.8H2614M2610 1111.8H2614M2610 1060.8H2614M2610 1009.8H2614M2610 958.8H2614M2610 907.8H2614M2610 856.8H2614M2610 805.8H2614M2610 754.8H2614M2610 703.8H2614M2610 652.8H2614M2610 601.8H2614M2610 550.8H2614M2610 1719H2618" stroke="#a6a6a6" stroke-width="2"/>
<text x="2626.0" y="522.0" font-size="23" fill="#aeaeae" text-anchor="start" textLength="24.0" lengthAdjust="spacingAndGlyphs" stroke="#aeaeae" stroke-width="0.35">Hz</text>
<text x="2626.0" y="1680.8" font-size="23" fill="#a9a9a9" text-anchor="start" textLength="24.0" lengthAdjust="spacingAndGlyphs" stroke="#a9a9a9" stroke-width="0.35">1k</text>
<text x="2626.0" y="1629.8" font-size="23" fill="#5e5e5e" text-anchor="start" textLength="24.0" lengthAdjust="spacingAndGlyphs" stroke="#5e5e5e" stroke-width="0.35">2k</text>
<text x="2626.0" y="1578.8" font-size="23" fill="#5e5e5e" text-anchor="start" textLength="24.0" lengthAdjust="spacingAndGlyphs" stroke="#5e5e5e" stroke-width="0.35">3k</text>
<text x="2626.0" y="1527.8" font-size="23" fill="#5e5e5e" text-anchor="start" textLength="24.0" lengthAdjust="spacingAndGlyphs" stroke="#5e5e5e" stroke-width="0.35">4k</text>
<text x="2626.0" y="1476.8" font-size="23" fill="#5e5e5e" text-anchor="start" textLength="24.0" lengthAdjust="spacingAndGlyphs" stroke="#5e5e5e" stroke-width="0.35">5k</text>
<text x="2626.0" y="1425.8" font-size="23" fill="#5e5e5e" text-anchor="start" textLength="24.0" lengthAdjust="spacingAndGlyphs" stroke="#5e5e5e" stroke-width="0.35">6k</text>
<text x="2626.0" y="1374.8" font-size="23" fill="#5e5e5e" text-anchor="start" textLength="24.0" lengthAdjust="spacingAndGlyphs" stroke="#5e5e5e" stroke-width="0.35">7k</text>
<text x="2626.0" y="1323.8" font-size="23" fill="#5e5e5e" text-anchor="start" textLength="24.0" lengthAdjust="spacingAndGlyphs" stroke="#5e5e5e" stroke-width="0.35">8k</text>
<text x="2626.0" y="1272.8" font-size="23" fill="#5e5e5e" text-anchor="start" textLength="24.0" lengthAdjust="spacingAndGlyphs" stroke="#5e5e5e" stroke-width="0.35">9k</text>
<text x="2626.0" y="1221.8" font-size="23" fill="#a9a9a9" text-anchor="start" textLength="36.0" lengthAdjust="spacingAndGlyphs" stroke="#a9a9a9" stroke-width="0.35">10k</text>
<text x="2626.0" y="1170.8" font-size="23" fill="#5e5e5e" text-anchor="start" textLength="36.0" lengthAdjust="spacingAndGlyphs" stroke="#5e5e5e" stroke-width="0.35">11k</text>
<text x="2626.0" y="1119.8" font-size="23" fill="#5e5e5e" text-anchor="start" textLength="36.0" lengthAdjust="spacingAndGlyphs" stroke="#5e5e5e" stroke-width="0.35">12k</text>
<text x="2626.0" y="1068.8" font-size="23" fill="#5e5e5e" text-anchor="start" textLength="36.0" lengthAdjust="spacingAndGlyphs" stroke="#5e5e5e" stroke-width="0.35">13k</text>
<text x="2626.0" y="1017.8" font-size="23" fill="#5e5e5e" text-anchor="start" textLength="36.0" lengthAdjust="spacingAndGlyphs" stroke="#5e5e5e" stroke-width="0.35">14k</text>
<text x="2626.0" y="966.8" font-size="23" fill="#5e5e5e" text-anchor="start" textLength="36.0" lengthAdjust="spacingAndGlyphs" stroke="#5e5e5e" stroke-width="0.35">15k</text>
<text x="2626.0" y="915.8" font-size="23" fill="#5e5e5e" text-anchor="start" textLength="36.0" lengthAdjust="spacingAndGlyphs" stroke="#5e5e5e" stroke-width="0.35">16k</text>
<text x="2626.0" y="864.8" font-size="23" fill="#5e5e5e" text-anchor="start" textLength="36.0" lengthAdjust="spacingAndGlyphs" stroke="#5e5e5e" stroke-width="0.35">17k</text>
<text x="2626.0" y="813.8" font-size="23" fill="#5e5e5e" text-anchor="start" textLength="36.0" lengthAdjust="spacingAndGlyphs" stroke="#5e5e5e" stroke-width="0.35">18k</text>
<text x="2626.0" y="762.8" font-size="23" fill="#5e5e5e" text-anchor="start" textLength="36.0" lengthAdjust="spacingAndGlyphs" stroke="#5e5e5e" stroke-width="0.35">19k</text>
<text x="2626.0" y="711.8" font-size="23" fill="#5e5e5e" text-anchor="start" textLength="36.0" lengthAdjust="spacingAndGlyphs" stroke="#5e5e5e" stroke-width="0.35">20k</text>
<text x="2626.0" y="660.8" font-size="23" fill="#5e5e5e" text-anchor="start" textLength="36.0" lengthAdjust="spacingAndGlyphs" stroke="#5e5e5e" stroke-width="0.35">21k</text>
<text x="2626.0" y="609.8" font-size="23" fill="#5e5e5e" text-anchor="start" textLength="36.0" lengthAdjust="spacingAndGlyphs" stroke="#5e5e5e" stroke-width="0.35">22k</text>
<text x="2626.0" y="558.8" font-size="23" fill="#5e5e5e" text-anchor="start" textLength="36.0" lengthAdjust="spacingAndGlyphs" stroke="#5e5e5e" stroke-width="0.35">23k</text>
<text x="23.0" y="1774.0" font-size="34" fill="#2f8ef0" text-anchor="start" textLength="122.0" lengthAdjust="spacingAndGlyphs" stroke="#2f8ef0" stroke-width="0.35">0:10.500</text>
<rect x="958" y="1748" width="18" height="18" rx="1.5" fill="#3e3e3e"/>
<path d="M1018 1747 L1036 1757 L1018 1767Z" fill="#a3a3a3"/>
<rect x="1080" y="1748" width="6" height="19" rx="1" fill="#3e3e3e"/><rect x="1090" y="1748" width="6" height="19" rx="1" fill="#3e3e3e"/>
<rect x="1136" y="1747" width="4" height="20" rx="1" fill="#a3a3a3"/><path d="M1158 1747 V1767 L1143 1757Z" fill="#a3a3a3"/>
<path d="M1209 1747 V1767 L1193 1757Z M1224 1747 V1767 L1208 1757Z" fill="#a3a3a3"/>
<path d="M1252 1747 V1767 L1268 1757Z M1267 1747 V1767 L1283 1757Z" fill="#a3a3a3"/>
<path d="M1318 1747 V1767 L1333 1757Z" fill="#a3a3a3"/><rect x="1336" y="1747" width="4" height="20" rx="1" fill="#a3a3a3"/>
<circle cx="1388" cy="1758" r="10" fill="#ec2530"/>
<path d="M1434 1750 H1444 V1746 L1457.4 1752.2 L1444 1758 V1754 H1438.2 V1763.7 H1458 V1758 L1462 1756 V1768 H1434Z" fill="#a8a8a8"/>
<g fill="none" stroke="#a8a8a8" stroke-width="2.2"><path d="M1501 1746 V1752.5 L1497 1757 L1501 1761.5 V1768"/><path d="M1507 1746 V1752.5 L1511 1757 L1507 1761.5 V1768"/></g>
<path d="M1492 1754 H1497.5 V1760 H1492Z M1510 1754 H1516 V1750.5 L1524.5 1757 L1516 1763.5 V1760 H1510Z" fill="#a8a8a8"/>
<g fill="none" stroke="#a6a6a6" stroke-width="2"><path d="M2169 1745 V1772"/><circle cx="2183" cy="1757" r="7.5"/><line x1="2188.4" y1="1762.4" x2="2195.4" y2="1769.4" stroke-width="3.4" stroke-linecap="round"/><line x1="2179" y1="1757" x2="2187" y2="1757"/><line x1="2183" y1="1753" x2="2183" y2="1761"/></g><g fill="#a6a6a6"><path d="M2165 1747 L2169 1742 L2173 1747Z M2165 1770 L2169 1775 L2173 1770Z"/><path d="M2221 1747 L2225 1742 L2229 1747Z M2221 1770 L2225 1775 L2229 1770Z"/><path d="M2288 1742 L2283 1745 L2288 1748Z M2314 1742 L2319 1745 L2314 1748Z"/><path d="M2349 1742 L2344 1745 L2349 1748Z M2375 1742 L2380 1745 L2375 1748Z"/><path d="M2404.3 1757 L2409.5 1752.8 V1761.2Z M2437.9 1757 L2432.7 1752.8 V1761.2Z M2421 1740 L2425.4 1744.8 H2416.6Z M2421 1774 L2425.4 1768.5 H2416.6Z"/></g><g fill="none" stroke="#a6a6a6" stroke-width="2"><path d="M2225 1745 V1772"/><circle cx="2243" cy="1757" r="7.5"/><line x1="2248.4" y1="1762.4" x2="2255.4" y2="1769.4" stroke-width="3.4" stroke-linecap="round"/><line x1="2239" y1="1757" x2="2247" y2="1757"/><path d="M2286 1745 H2316"/><circle cx="2301" cy="1759" r="7.5"/><line x1="2306.4" y1="1764.4" x2="2313.4" y2="1771.4" stroke-width="3.4" stroke-linecap="round"/><line x1="2297" y1="1759" x2="2305" y2="1759"/><line x1="2301" y1="1755" x2="2301" y2="1763"/><path d="M2347 1745 H2377"/><circle cx="2362" cy="1759" r="7.5"/><line x1="2367.4" y1="1764.4" x2="2374.4" y2="1771.4" stroke-width="3.4" stroke-linecap="round"/><line x1="2358" y1="1759" x2="2366" y2="1759"/><circle cx="2421" cy="1757" r="7.9"/><line x1="2426.7" y1="1762.7" x2="2434.0" y2="1770.0" stroke-width="3.4" stroke-linecap="round"/><line x1="2417" y1="1757" x2="2425" y2="1757"/></g><g fill="none" stroke="#a6a6a6" stroke-width="2.3"><path d="M2469 1750 V1755.3 L2464.6 1761 L2469 1766.2 V1772"/><circle cx="2489" cy="1759" r="7.9"/><line x1="2494.7" y1="1764.7" x2="2502.0" y2="1772.0" stroke-width="3.4" stroke-linecap="round"/><path d="M2531 1750 V1755.3 L2535.6 1761 L2531 1766.2 V1772"/><circle cx="2549" cy="1759" r="7.9"/><line x1="2554.7" y1="1764.7" x2="2562.0" y2="1772.0" stroke-width="3.4" stroke-linecap="round"/><path d="M2585 1750 V1755.3 L2580.6 1761 L2585 1766.2 V1772 M2593 1750 V1755.3 L2597.6 1761 L2593 1766.2 V1772"/><circle cx="2608.7" cy="1759" r="7.9"/><line x1="2614.4" y1="1764.7" x2="2621.7" y2="1772.0" stroke-width="3.4" stroke-linecap="round"/><circle cx="2662.3" cy="1762" r="10.4" stroke-width="2.2"/><path d="M2662.3 1747 V1751.5" stroke-width="2.6"/></g><g fill="#a6a6a6"><path d="M2662.3 1762 V1751.6 A10.4 10.4 0 0 1 2669.6 1754.6Z"/><rect x="2658.7" y="1744.2" width="7.4" height="3.4" rx="1.5"/><rect x="2648" y="1749" width="5" height="3.6" rx="1.2" transform="rotate(-45 2650.5 1750.8)"/></g>
<rect x="0" y="1794" width="2694" height="3" fill="#2a7ae8"/>
<rect x="0" y="1797" width="2694" height="5" fill="#131313"/>
<rect x="0" y="0" width="2" height="1796" fill="#2a7ae8"/>
<rect x="803" y="245" width="1208" height="1491" fill="none" stroke="#80ff00" stroke-width="4"/></svg>
</body></html>
